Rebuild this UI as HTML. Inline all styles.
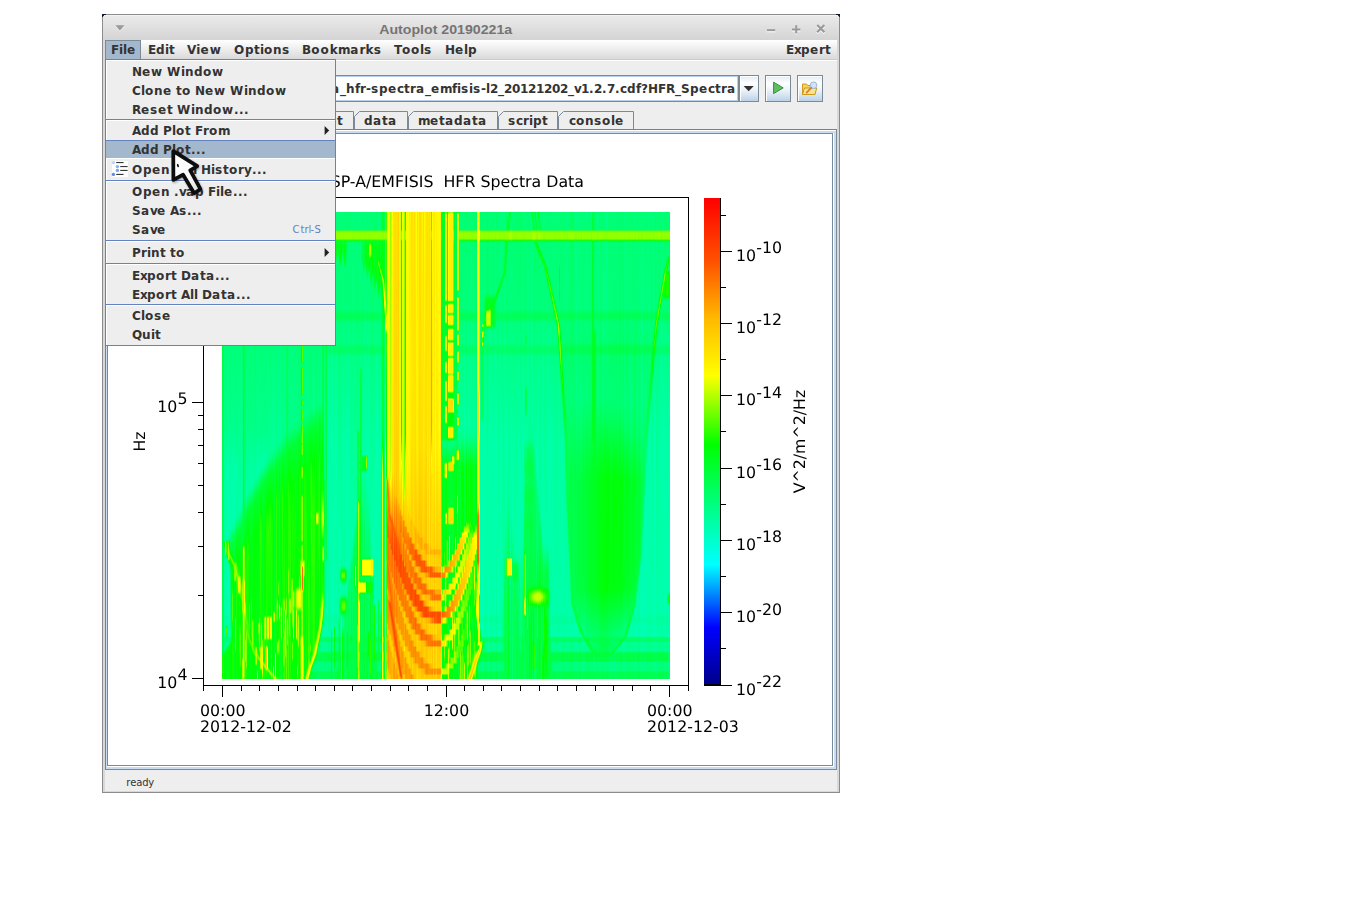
<!DOCTYPE html>
<html lang="en"><head><meta charset="utf-8"><title>Autoplot 20190221a</title>
<style>
html,body{margin:0;padding:0;background:#fff;width:1345px;height:916px;overflow:hidden}
svg{display:block;position:absolute;left:0;top:0}
text{font-family:"DejaVu Sans","Liberation Sans",sans-serif;fill:#333;white-space:pre}
.ui{font-weight:bold;font-size:12px;letter-spacing:0}
.acc{font-size:10px;fill:#6382bf}
.st{font-size:10px;fill:#333}
.ttl{font-family:"Liberation Sans","DejaVu Sans",sans-serif;font-weight:bold;font-size:13.6px;fill:#747474}
.pl{font-size:15.8px;fill:#000;text-rendering:geometricPrecision}
#sp{position:absolute;left:222px;top:212px;width:448px;height:467px;overflow:hidden;background:#00f881}
#sp i{position:absolute;top:-.5px;width:1px;height:468px;display:block}
</style></head><body>
<svg width="1345" height="916" viewBox="0 0 1345 916" shape-rendering="crispEdges">
<defs>
<linearGradient id="gTitle" x1="0" y1="0" x2="0" y2="1"><stop offset="0" stop-color="#ebebeb"/><stop offset="1" stop-color="#d4d4d4"/></linearGradient>
<linearGradient id="gMenu" x1="0" y1="0" x2="0" y2="1"><stop offset="0" stop-color="#ffffff"/><stop offset="1" stop-color="#dadada"/></linearGradient>
<linearGradient id="gBtn" x1="0" y1="0" x2="0" y2="1"><stop offset="0" stop-color="#dde8f3"/><stop offset="0.3" stop-color="#ffffff"/><stop offset="0.55" stop-color="#eef3f9"/><stop offset="1" stop-color="#b8cfe5"/></linearGradient>
<linearGradient id="gCur" x1="0" y1="0" x2="1" y2="1"><stop offset="0" stop-color="#ffffff"/><stop offset="0.6" stop-color="#fafafa"/><stop offset="1" stop-color="#d8d8d8"/></linearGradient>
</defs>
<path d="M102 793V17a3 3 0 0 1 3-3H837a3 3 0 0 1 3 3V793z" fill="#8c8c8c" shape-rendering="geometricPrecision"/>
<path d="M103 792V18a3 3 0 0 1 3-3H836a3 3 0 0 1 3 3V792z" fill="#d8d8d8" shape-rendering="geometricPrecision"/>
<path d="M102 14h4v1h-2v1h-1v1h-1z" fill="#0b1830"/>
<path d="M840 14h-4v1h2v1h1v1h1z" fill="#0b1830"/>
<path d="M103 40V18a3 3 0 0 1 3-3H836a3 3 0 0 1 3 3V40z" fill="url(#gTitle)" shape-rendering="geometricPrecision"/>
<rect x="104" y="15" width="734" height="1" fill="#f3f3f3" />
<path d="M115.3 26.0h9.2l-4.6 5.6z" fill="#ffffff" shape-rendering="geometricPrecision"/>
<path d="M115.3 25.2h9.2l-4.6 5.6z" fill="#9a9a9a" shape-rendering="geometricPrecision"/>
<text x="445.7" y="33.6" class="ttl" text-anchor="middle" textLength="133" lengthAdjust="spacingAndGlyphs">Autoplot 20190221a</text>
<path d="M767 31.3h8.2" stroke="#fff" stroke-width="2" shape-rendering="geometricPrecision" stroke-linecap="butt"/>
<path d="M767 30.2h8.2" stroke="#999" stroke-width="2" shape-rendering="geometricPrecision" stroke-linecap="butt"/>
<path d="M792 30.4h8.4M796.2 26.2v8.4" stroke="#fff" stroke-width="2" shape-rendering="geometricPrecision" stroke-linecap="butt"/>
<path d="M792 29.4h8.4M796.2 25.2v8.4" stroke="#999" stroke-width="2" shape-rendering="geometricPrecision" stroke-linecap="butt"/>
<path d="M817.2 26l7.2 7.2M824.4 26l-7.2 7.2" stroke="#fff" stroke-width="2.2" shape-rendering="geometricPrecision" stroke-linecap="butt"/>
<path d="M817.2 25l7.2 7.2M824.4 25l-7.2 7.2" stroke="#999" stroke-width="2.2" shape-rendering="geometricPrecision" stroke-linecap="butt"/>
<rect x="105" y="40" width="732" height="751" fill="#eeeeee" />
<rect x="105" y="40" width="732" height="19" fill="url(#gMenu)" />
<rect x="105" y="59" width="732" height="1" fill="#cccccc" />
<rect x="105" y="60" width="732" height="1" fill="#ffffff" />
<rect x="105" y="40" width="36" height="19" fill="#a3b8cc" />
<rect x="105" y="40" width="36" height="1" fill="#7a8a99" />
<rect x="105" y="40" width="1" height="19" fill="#7a8a99" />
<rect x="140" y="40" width="1" height="19" fill="#7a8a99" />
<text x="111 119 123 127" y="54" class="ui" >File</text>
<text x="148 156 165 169" y="54" class="ui" >Edit</text>
<text x="187 196.265 200.382 209.647" y="54" class="ui" >View</text>
<text x="234 245 254 260 264 273 282" y="54" class="ui" >Options</text>
<text x="302 311.231 320.462 329.692 337.897 350.205 359.436 365.59 373.795" y="54" class="ui" >Bookmarks</text>
<text x="394 402 411 420 424" y="54" class="ui" >Tools</text>
<text x="445 455 464 468" y="54" class="ui" >Help</text>
<text x="786 794 801 810 819 825" y="54" class="ui" >Expert</text>
<rect x="109" y="75" width="630" height="27" fill="#ffffff" />
<rect x="109" y="75" width="630" height="1" fill="#7a8a99" />
<rect x="109" y="101" width="630" height="1" fill="#7a8a99" />
<rect x="109" y="75" width="1" height="27" fill="#7a8a99" />
<rect x="738" y="75" width="1" height="27" fill="#7a8a99" />
<rect x="110" y="76" width="628" height="1" fill="#b8cfe5" />
<rect x="110" y="100" width="628" height="1" fill="#b8cfe5" />
<rect x="110" y="76" width="1" height="25" fill="#b8cfe5" />
<rect x="737" y="76" width="1" height="25" fill="#b8cfe5" />
<clipPath id="cUrl"><rect x="112" y="77" width="625" height="23"/></clipPath>
<text x="-38 -33 -29 -25 -16 -11 -7 -3 1 10 19 31 40 44 48 57 62 66 73 79 83 92 101 110 118 127 136 140 149 158 164 173 178 187 196 203 211 220 229 233 240 249 254 258 264 273 281 290 294 300 309 317 326 331 340 346 355 360 366 371 379 388 397 404 410 416 425 431 440 452 457 461 469 473 481 486 490 498 504 512 520 528 536 544 552 560 568 574 581 589 594 602 607 615 620 627 636 641 648 658 666 675 681 690 699 708 715 721 727" y="93" class="ui" clip-path="url(#cUrl)">file:///home/jbf/ct/hudson/data.backup/cdf/rbsp/rbsp-a_hfr-spectra_emfisis-l2_20121202_v1.2.7.cdf?HFR_Spectra</text>
<rect x="739" y="75" width="20" height="27" fill="url(#gBtn)" />
<rect x="739" y="75" width="20" height="1" fill="#7a8a99" />
<rect x="739" y="101" width="20" height="1" fill="#7a8a99" />
<rect x="739" y="75" width="1" height="27" fill="#7a8a99" />
<rect x="758" y="75" width="1" height="27" fill="#7a8a99" />
<rect x="740" y="76" width="18" height="1" fill="#ffffff" />
<rect x="740" y="76" width="1" height="25" fill="#ffffff" />
<path d="M743.6 86h10.2l-5.1 5.2z" fill="#333" shape-rendering="geometricPrecision"/>
<rect x="765" y="75" width="26" height="27" fill="url(#gBtn)" />
<rect x="765" y="75" width="26" height="1" fill="#7a8a99" />
<rect x="765" y="101" width="26" height="1" fill="#7a8a99" />
<rect x="765" y="75" width="1" height="27" fill="#7a8a99" />
<rect x="790" y="75" width="1" height="27" fill="#7a8a99" />
<rect x="766" y="76" width="24" height="1" fill="#ffffff" />
<rect x="766" y="76" width="1" height="25" fill="#ffffff" />
<path d="M773.6 82.2l9.6 5.7-9.6 5.7z" fill="#5fbf5f" stroke="#2f8f3f" stroke-width="1" stroke-linejoin="round" shape-rendering="geometricPrecision"/>
<rect x="797" y="75" width="26" height="27" fill="url(#gBtn)" />
<rect x="797" y="75" width="26" height="1" fill="#7a8a99" />
<rect x="797" y="101" width="26" height="1" fill="#7a8a99" />
<rect x="797" y="75" width="1" height="27" fill="#7a8a99" />
<rect x="822" y="75" width="1" height="27" fill="#7a8a99" />
<rect x="798" y="76" width="24" height="1" fill="#ffffff" />
<rect x="798" y="76" width="1" height="25" fill="#ffffff" />
<g shape-rendering="geometricPrecision">
<path d="M802.5 94.5v-10.5h4l1 1.5h7.5v9z" fill="#f5d36a" stroke="#c99a1e" stroke-width="1"/>
<path d="M802.5 94.5l2-6.5h12.3l-2 6.5z" fill="#fbe48f" stroke="#c99a1e" stroke-width="1"/>
<circle cx="813.6" cy="85.2" r="3.3" fill="#cfe4f8" stroke="#9fb7d3" stroke-width="1"/>
<path d="M811.2 87.8l-4.6 4.8" stroke="#e4792a" stroke-width="1.8" stroke-linecap="round"/>
</g>
<path d="M109.5 129.5V116.5L114.5 111.5H168.5V129.5z" fill="#c8ddf2" stroke="#7a8a99" stroke-width="1" shape-rendering="geometricPrecision"/>
<text x="119.5 126.5 135.5 144.5 151.5 160.5" y="124.6" class="ui" >canvas</text>
<path d="M169.5 129.5V116.5L174.5 111.5H213.5V129.5z" fill="#eeeeee" stroke="#7a8a99" stroke-width="1" shape-rendering="geometricPrecision"/>
<text x="180 189 196 205" y="124.6" class="ui" >axes</text>
<path d="M214.5 129.5V116.5L219.5 111.5H260.5V129.5z" fill="#eeeeee" stroke="#7a8a99" stroke-width="1" shape-rendering="geometricPrecision"/>
<text x="225 233 239 247 251" y="124.6" class="ui" >style</text>
<path d="M295.5 129.5V116.5L300.5 111.5H353.5V129.5z" fill="#eeeeee" stroke="#7a8a99" stroke-width="1" shape-rendering="geometricPrecision"/>
<text x="298 302 311 319 328 337" y="124.6" class="ui" >layout</text>
<path d="M354.5 129.5V116.5L359.5 111.5H407.5V129.5z" fill="#eeeeee" stroke="#7a8a99" stroke-width="1" shape-rendering="geometricPrecision"/>
<text x="364 373 382 388" y="124.6" class="ui" >data</text>
<path d="M408.5 129.5V116.5L413.5 111.5H497.5V129.5z" fill="#eeeeee" stroke="#7a8a99" stroke-width="1" shape-rendering="geometricPrecision"/>
<text x="418 430 439 445 454 463 472 478" y="124.6" class="ui" >metadata</text>
<path d="M498.5 129.5V116.5L503.5 111.5H557.5V129.5z" fill="#eeeeee" stroke="#7a8a99" stroke-width="1" shape-rendering="geometricPrecision"/>
<text x="508 516 523 529 533 542" y="124.6" class="ui" >script</text>
<path d="M558.5 129.5V116.5L563.5 111.5H633.5V129.5z" fill="#eeeeee" stroke="#7a8a99" stroke-width="1" shape-rendering="geometricPrecision"/>
<text x="569 576 585 594 602 611 615" y="124.6" class="ui" >console</text>
<rect x="105" y="129" width="732" height="641" fill="#7a8a99" />
<rect x="105" y="129" width="732" height="1" fill="#6382bf" />
<rect x="105" y="129" width="1" height="641" fill="#6382bf" />
<rect x="106" y="130" width="730" height="639" fill="#c8ddf2" />
<rect x="106" y="130" width="730" height="1" fill="#ffffff" />
<rect x="107" y="133" width="727" height="634" fill="#ffffff" />
<rect x="107" y="133" width="726" height="1" fill="#7a8a99" />
<rect x="107" y="133" width="1" height="633" fill="#7a8a99" />
<rect x="108" y="765" width="725" height="1" fill="#7a8a99" />
<rect x="832" y="133" width="1" height="633" fill="#7a8a99" />
<rect x="108" y="134" width="724" height="631" fill="#ffffff" />
<text x="126.2 130.2 136.2 142.2 148.2" y="786" class="st" >ready</text>
<rect x="203" y="197" width="486" height="1" fill="#000000" />
<rect x="203" y="685" width="486" height="1" fill="#000000" />
<rect x="203" y="197" width="1" height="489" fill="#000000" />
<rect x="688" y="197" width="1" height="489" fill="#000000" />
<rect x="203" y="685" width="1" height="6" fill="#000000" />
<rect x="222" y="685" width="1" height="12" fill="#000000" />
<rect x="241" y="685" width="1" height="6" fill="#000000" />
<rect x="259" y="685" width="1" height="6" fill="#000000" />
<rect x="278" y="685" width="1" height="6" fill="#000000" />
<rect x="297" y="685" width="1" height="6" fill="#000000" />
<rect x="315" y="685" width="1" height="6" fill="#000000" />
<rect x="334" y="685" width="1" height="6" fill="#000000" />
<rect x="352" y="685" width="1" height="6" fill="#000000" />
<rect x="371" y="685" width="1" height="6" fill="#000000" />
<rect x="390" y="685" width="1" height="6" fill="#000000" />
<rect x="408" y="685" width="1" height="6" fill="#000000" />
<rect x="427" y="685" width="1" height="6" fill="#000000" />
<rect x="446" y="685" width="1" height="12" fill="#000000" />
<rect x="464" y="685" width="1" height="6" fill="#000000" />
<rect x="483" y="685" width="1" height="6" fill="#000000" />
<rect x="501" y="685" width="1" height="6" fill="#000000" />
<rect x="520" y="685" width="1" height="6" fill="#000000" />
<rect x="539" y="685" width="1" height="6" fill="#000000" />
<rect x="557" y="685" width="1" height="6" fill="#000000" />
<rect x="576" y="685" width="1" height="6" fill="#000000" />
<rect x="595" y="685" width="1" height="6" fill="#000000" />
<rect x="613" y="685" width="1" height="6" fill="#000000" />
<rect x="632" y="685" width="1" height="6" fill="#000000" />
<rect x="650" y="685" width="1" height="6" fill="#000000" />
<rect x="669" y="685" width="1" height="12" fill="#000000" />
<rect x="688" y="685" width="1" height="6" fill="#000000" />
<rect x="192" y="678" width="12" height="1" fill="#000000" />
<rect x="198" y="595" width="6" height="1" fill="#000000" />
<rect x="198" y="546" width="6" height="1" fill="#000000" />
<rect x="198" y="512" width="6" height="1" fill="#000000" />
<rect x="198" y="485" width="6" height="1" fill="#000000" />
<rect x="198" y="463" width="6" height="1" fill="#000000" />
<rect x="198" y="445" width="6" height="1" fill="#000000" />
<rect x="198" y="429" width="6" height="1" fill="#000000" />
<rect x="198" y="415" width="6" height="1" fill="#000000" />
<rect x="192" y="402" width="12" height="1" fill="#000000" />
<rect x="198" y="319" width="6" height="1" fill="#000000" />
<rect x="198" y="270" width="6" height="1" fill="#000000" />
<rect x="198" y="236" width="6" height="1" fill="#000000" />
<rect x="198" y="209" width="6" height="1" fill="#000000" />
<defs><linearGradient id="gCB" gradientUnits="userSpaceOnUse" x1="0" y1="198" x2="0" y2="685"><stop offset="0.0000" stop-color="#ff0000"/><stop offset="0.1333" stop-color="#ff5400"/><stop offset="0.2471" stop-color="#ffb900"/><stop offset="0.3647" stop-color="#ffff00"/><stop offset="0.5059" stop-color="#00ff00"/><stop offset="0.7529" stop-color="#00ffff"/><stop offset="0.8824" stop-color="#0000ff"/><stop offset="1.0000" stop-color="#000089"/></linearGradient></defs>
<rect x="704" y="198" width="16" height="487" fill="url(#gCB)" />
<rect x="720" y="198" width="1" height="488" fill="#000000" />
<rect x="704" y="684" width="17" height="2" fill="#000000" />
<rect x="720" y="685" width="12" height="1" fill="#000000" />
<rect x="720" y="648" width="6" height="1" fill="#000000" />
<rect x="720" y="612" width="12" height="1" fill="#000000" />
<rect x="720" y="576" width="6" height="1" fill="#000000" />
<rect x="720" y="540" width="12" height="1" fill="#000000" />
<rect x="720" y="504" width="6" height="1" fill="#000000" />
<rect x="720" y="468" width="12" height="1" fill="#000000" />
<rect x="720" y="431" width="6" height="1" fill="#000000" />
<rect x="720" y="395" width="12" height="1" fill="#000000" />
<rect x="720" y="359" width="6" height="1" fill="#000000" />
<rect x="720" y="323" width="12" height="1" fill="#000000" />
<rect x="720" y="287" width="6" height="1" fill="#000000" />
<rect x="720" y="251" width="12" height="1" fill="#000000" />
<rect x="720" y="215" width="6" height="1" fill="#000000" />
</svg>
<div id="sp"><i style="left:0px;background:linear-gradient(#0f4 1px,#0f3 4px,#00ff38 18px,#7f0 19px,#9f0 21px,#9f0 27px,#00ff0b 29px,#0f3 30px,#00ff39 31px,#0f5 259px,#0f5 329px,#0f3 330px,#0f5 333px,#0f5 339px,#0f5 424px,#00ff4b 426px,#0f5 439px,#00ff3b 442px,#00ff08 444px,#17ff00 445px,#1f0 467px)"></i><i style="left:1px;background:linear-gradient(#00ff50 1px,#00ff39 4px,#00ff3b 18px,#71ff00 19px,#9f0 21px,#8dff00 27px,#0f1 29px,#0f3 30px,#00ff3c 31px,#00ff50 321px,#00ff4f 329px,#00ff07 330px,#0f4 335px,#00ff4d 340px,#00ff4a 424px,#0f4 439px,#0f0 443px,#1f0 444px,#1dff00 467px)"></i><i style="left:2px;background:linear-gradient(#00ff70 1px,#00ff6e 18px,#6cff00 19px,#8fff00 21px,#8f0 27px,#2dff00 28px,#0f3 29px,#0f6 30px,#00ff6e 31px,#00ff71 97px,#0f5 103px,#0f7 111px,#0f8 219px,#00ffa1 257px,#00ffa5 327px,#00ff8e 329px,#00ff1a 330px,#0f0 333px,#0f6 338px,#0f7 343px,#00ffa5 347px,#00ffa5 401px,#0f9 409px,#00ffa5 424px,#00ff6b 426px,#00ff6b 429px,#00ff8e 431px,#0f8 438px,#0f7 439px,#00ff1c 441px,#0f1 442px,#00ff06 467px)"></i><i style="left:3px;background:linear-gradient(#00ff61 1px,#0f6 18px,#7f0 19px,#9f0 21px,#92ff00 27px,#3f0 28px,#0f2 29px,#0f5 30px,#0f6 31px,#00ff6e 97px,#00ff4c 103px,#00ff4e 106px,#0f7 111px,#0f8 220px,#0f9 258px,#0f9 327px,#00ff6f 328px,#00ff1b 329px,#b4ff00 330px,#bf0 336px,#8eff00 343px,#4bff00 344px,#0f2 345px,#0f7 346px,#0f9 347px,#00ffa2 401px,#00ff92 405px,#00ffa5 424px,#00ff61 426px,#00ff61 429px,#0f8 431px,#0f8 436px,#00ff7f 437px,#0f0 440px,#1f0 441px,#0f0 467px)"></i><i style="left:4px;background:linear-gradient(#00ff6b 1px,#00ff6c 18px,#70ff00 19px,#94ff00 21px,#8dff00 27px,#3f0 28px,#00ff2d 29px,#00ff5f 30px,#00ff6c 31px,#00ff70 97px,#00ff4d 103px,#00ff4f 106px,#0f7 111px,#0f8 219px,#0fa 257px,#0fa 324px,#0fa 327px,#0f9 328px,#0f7 329px,#00ff0c 330px,#2bff00 331px,#4cff00 332px,#5f0 333px,#3f0 336px,#5cff00 339px,#5f0 340px,#3f0 341px,#00ff0c 342px,#0f9 346px,#0fa 347px,#00ffb0 401px,#00ffa0 405px,#00ffaf 412px,#0f9 413px,#0f2 415px,#27ff00 416px,#4aff00 417px,#4aff00 421px,#39ff00 422px,#0f1 423px,#00ff4e 424px,#00ff6c 425px,#00ff6d 429px,#0f9 431px,#00ff93 435px,#00ff18 439px,#00ff18 467px)"></i><i style="left:5px;background:linear-gradient(#0f6 1px,#0f6 18px,#72ff00 19px,#9f0 21px,#8eff00 27px,#3f0 28px,#00ff2b 29px,#00ff5e 30px,#0f6 31px,#0f7 97px,#0f5 103px,#0f5 106px,#0f7 111px,#00ff93 219px,#00ffaf 256px,#00ffb1 323px,#0fa 327px,#00ff8d 329px,#00ff06 334px,#2dff00 336px,#1f0 339px,#4f0 341px,#3eff00 342px,#1f0 343px,#0f5 346px,#00ffa2 350px,#00ffb0 352px,#00ffaf 401px,#00ff9f 405px,#0fa 412px,#00ff6b 417px,#00ff6e 422px,#00ff8f 424px,#0f6 426px,#0f6 429px,#00ff94 431px,#00ff91 433px,#00ff80 434px,#00ff05 437px,#0cff00 438px,#18ff00 467px)"></i><i style="left:6px;background:linear-gradient(#00ff6b 1px,#00ff6d 18px,#70ff00 19px,#93ff00 21px,#8f0 27px,#3f0 28px,#0f3 29px,#00ff61 30px,#00ff6e 31px,#0f7 97px,#0f5 103px,#0f5 106px,#0f7 111px,#0f9 219px,#00ffb2 258px,#00ffb3 322px,#00ff9f 327px,#0f7 328px,#00ff2d 329px,#3eff00 330px,#7f0 331px,#b6ff00 339px,#afff00 345px,#92ff00 347px,#5eff00 348px,#0f1 349px,#00ff5a 350px,#0f8 351px,#00ffb6 357px,#0fb 401px,#0fa 405px,#0fb 424px,#0f7 426px,#0f7 429px,#00ff9e 431px,#0f9 432px,#00ff2c 435px,#00ff18 436px,#00ff16 467px)"></i><i style="left:7px;background:linear-gradient(#0f7 1px,#00ff72 18px,#6cff00 19px,#90ff00 21px,#8f0 27px,#2cff00 28px,#0f3 29px,#0f6 30px,#00ff72 31px,#00ff6f 97px,#00ff4c 103px,#00ff4e 106px,#00ff72 111px,#0fa 318px,#00ff83 327px,#0f1 331px,#0f0 335px,#27ff00 338px,#7f0 342px,#7f0 343px,#5f0 347px,#3f0 348px,#0f0 349px,#00ff38 351px,#00ffa0 359px,#0fa 401px,#00ff9e 409px,#00ffaf 413px,#00ffb0 424px,#00ff6b 426px,#00ff6c 429px,#00ff83 431px,#0f2 434px,#00ff19 435px,#0f2 467px)"></i><i style="left:8px;background:linear-gradient(#00ff60 1px,#00ff61 18px,#7f0 19px,#9f0 21px,#93ff00 27px,#3f0 28px,#0f2 29px,#0f5 30px,#00ff61 31px,#0f6 97px,#0f4 103px,#0f4 106px,#0f6 111px,#00ff80 209px,#00ffa2 256px,#0fa 316px,#0f8 324px,#0f2 340px,#0f0 342px,#3f0 343px,#5eff00 344px,#6f0 345px,#1f0 348px,#0f0 349px,#00ff29 355px,#00ff5f 359px,#00ff83 409px,#00ff9f 424px,#0f6 426px,#0f6 429px,#0f5 430px,#00ff05 433px,#00ff0a 467px)"></i><i style="left:9px;background:linear-gradient(#00ff6b 1px,#00ff6d 18px,#70ff00 19px,#93ff00 21px,#8f0 27px,#2eff00 28px,#0f3 29px,#0f6 30px,#00ff6f 31px,#0f7 97px,#0f5 103px,#00ff5a 106px,#00ff7f 111px,#00ff8f 221px,#00ffa5 258px,#00ffa0 315px,#00ff38 333px,#0f1 343px,#07ff00 344px,#70ff00 346px,#8f0 347px,#7f0 348px,#2f0 350px,#00ff05 352px,#00ff16 359px,#0f1 377px,#0f3 405px,#00ff4e 424px,#0f3 426px,#0f3 429px,#0f0 431px,#0f0 467px)"></i><i style="left:10px;background:linear-gradient(#0f6 1px,#00ff6c 18px,#70ff00 19px,#94ff00 21px,#8f0 27px,#3f0 28px,#00ff2e 29px,#00ff60 30px,#00ff6d 31px,#0f7 97px,#0f5 103px,#0f5 106px,#0f7 111px,#00ff92 219px,#0fa 259px,#0fa 313px,#00ff3b 332px,#0f2 343px,#0f0 346px,#90ff00 349px,#8f0 350px,#0f0 353px,#00ff08 354px,#1f0 379px,#5f0 384px,#5f0 406px,#1f0 411px,#0f0 424px,#07ff00 429px,#16ff00 430px,#1aff00 467px)"></i><i style="left:11px;background:linear-gradient(#0f6 1px,#00ff6b 18px,#71ff00 19px,#94ff00 21px,#8dff00 27px,#3f0 28px,#00ff2c 29px,#00ff5f 30px,#00ff6b 31px,#00ff70 97px,#00ff4e 103px,#00ff50 106px,#0f7 111px,#00ff8e 219px,#0fa 256px,#0fa 309px,#00ff9f 315px,#00ff3f 330px,#00ff27 344px,#00ff06 348px,#2f0 349px,#8f0 351px,#91ff00 352px,#4f0 354px,#1f0 357px,#0f0 369px,#19ff00 467px)"></i><i style="left:12px;background:linear-gradient(#00ff60 1px,#0f6 18px,#7f0 19px,#9f0 21px,#92ff00 27px,#3f0 28px,#0f2 29px,#0f5 30px,#0f6 31px,#00ff6d 97px,#00ff4b 103px,#00ff4d 106px,#00ff72 111px,#00ff91 219px,#00ffaf 256px,#00ffb4 307px,#00ffa4 313px,#0f4 328px,#0f3 346px,#00ff18 349px,#0f0 350px,#4eff00 351px,#8f0 352px,#9f0 353px,#9eff00 355px,#83ff00 367px,#6f0 368px,#28ff00 369px,#0f1 370px,#0f2 371px,#00ff16 467px)"></i><i style="left:13px;background:linear-gradient(#0f6 1px,#0f6 18px,#72ff00 19px,#9f0 21px,#8eff00 27px,#3f0 28px,#00ff2b 29px,#00ff5d 30px,#0f6 31px,#00ff70 97px,#00ff4d 103px,#00ff4f 106px,#0f7 111px,#0f8 219px,#00ffa5 259px,#00ffa3 307px,#0f3 326px,#00ff0c 349px,#1f0 350px,#8f0 352px,#9f0 353px,#af0 358px,#93ff00 367px,#7cff00 368px,#17ff00 370px,#0f0 371px,#0f0 405px,#5f0 408px,#60ff00 409px,#5fff00 437px,#00ff06 441px,#0f1 467px)"></i><i style="left:14px;background:linear-gradient(#00ff6b 1px,#00ff6d 18px,#70ff00 19px,#93ff00 21px,#8f0 27px,#3f0 28px,#0f3 29px,#00ff61 30px,#00ff6e 31px,#0f7 97px,#0f5 103px,#0f5 106px,#0f7 111px,#0f8 220px,#00ffa3 258px,#00ff9f 304px,#00ff28 325px,#0f0 349px,#5eff00 354px,#6f0 357px,#a2ff00 360px,#af0 361px,#5f0 365px,#2f0 372px,#00ff0a 467px)"></i><i style="left:15px;background:linear-gradient(#00ff72 1px,#0f7 18px,#6cff00 19px,#8fff00 21px,#8f0 27px,#2bff00 28px,#0f3 29px,#0f6 30px,#0f7 31px,#0f7 97px,#0f5 103px,#0f5 106px,#00ff7c 111px,#00ff8e 219px,#0fa 256px,#00ffa3 301px,#00ff8f 307px,#00ff2b 323px,#0f0 351px,#39ff00 356px,#4bff00 360px,#a2ff00 364px,#5eff00 369px,#3f0 379px,#08ff00 383px,#0f1 467px)"></i><i style="left:16px;background:linear-gradient(#0f6 1px,#0f6 18px,#7f0 19px,#9f0 21px,#92ff00 27px,#3f0 28px,#0f2 29px,#0f5 30px,#0f6 31px,#0f6 97px,#0f4 103px,#00ff49 106px,#00ff6e 111px,#0fa 298px,#0f9 304px,#0f3 321px,#0f0 356px,#2f0 359px,#3f0 363px,#6f0 364px,#ef0 366px,#ff0 367px,#ef0 379px,#c5ff00 380px,#2f0 382px,#0f0 383px,#00ff05 467px)"></i><i style="left:17px;background:linear-gradient(#0f6 1px,#0f6 18px,#72ff00 19px,#9f0 21px,#8fff00 27px,#3f0 28px,#00ff2a 29px,#00ff5c 30px,#0f6 31px,#00ff6d 97px,#00ff4a 103px,#00ff4c 106px,#00ff71 111px,#0fa 296px,#0f9 302px,#0f3 319px,#0f0 350px,#1f0 358px,#3f0 363px,#5f0 364px,#ef0 366px,#fff800 367px,#fff800 379px,#ef0 380px,#49ff00 382px,#2f0 383px,#1cff00 384px,#1f0 411px,#3f0 416px,#3f0 440px,#1f0 446px,#1f0 467px)"></i><i style="left:18px;background:linear-gradient(#0f6 1px,#0f6 18px,#7f0 19px,#9f0 21px,#90ff00 27px,#3f0 28px,#00ff28 29px,#00ff5b 30px,#0f6 31px,#00ff6e 97px,#00ff4c 103px,#00ff4e 106px,#0f7 111px,#0fa 294px,#0f9 300px,#0f3 317px,#0f0 363px,#17ff00 364px,#7cff00 366px,#92ff00 367px,#c3ff00 374px,#a0ff00 380px,#3bff00 383px,#07ff00 387px,#0f0 412px,#2bff00 415px,#2eff00 419px,#5f0 424px,#5aff00 440px,#4f0 452px,#0f0 456px,#0f0 467px)"></i><i style="left:19px;background:linear-gradient(#0f7 1px,#0f7 18px,#6f0 19px,#8dff00 21px,#8f0 27px,#29ff00 28px,#0f3 29px,#0f6 30px,#0f7 31px,#0f7 97px,#0f5 103px,#0f5 106px,#00ff7e 111px,#00ff92 219px,#0fa 259px,#0fa 293px,#0f3 315px,#0f0 369px,#0bff00 372px,#4f0 375px,#5bff00 377px,#3f0 381px,#5f0 385px,#0aff00 389px,#05ff00 390px,#00ff16 419px,#0f0 446px,#1f0 449px,#0f0 467px)"></i><i style="left:20px;background:linear-gradient(#00ff5c 1px,#0f5 18px,#7f0 19px,#9f0 21px,#91ff00 27px,#38ff00 28px,#0f2 29px,#00ff4d 30px,#0f5 31px,#00ff60 97px,#0f4 103px,#0f6 111px,#0f9 290px,#0f4 311px,#0f3 331px,#0f0 335px,#1bff00 337px,#29ff00 366px,#8f0 372px,#94ff00 376px,#bf0 380px,#af0 384px,#c7ff00 387px,#9fff00 392px,#9f0 398px,#38ff00 403px,#2aff00 410px,#2aff00 444px,#39ff00 445px,#a3ff00 448px,#b2ff00 449px,#b2ff00 464px,#a2ff00 467px)"></i><i style="left:21px;background:linear-gradient(#0f4 1px,#0f2 4px,#0f2 18px,#71ff00 19px,#94ff00 21px,#8dff00 27px,#00ff05 29px,#0f2 31px,#0f2 288px,#0f3 307px,#0f2 331px,#0f1 332px,#18ff00 333px,#a0ff00 335px,#d4ff00 336px,#e8ff00 337px,#e9ff00 366px,#fff700 368px,#fc0 372px,#fc0 398px,#f7ff00 403px,#ef0 404px,#ef0 464px,#df0 465px,#8f0 467px)"></i><i style="left:22px;background:linear-gradient(#00ff5f 1px,#00ff4e 4px,#00ff4d 18px,#6dff00 19px,#91ff00 21px,#8f0 27px,#38ff00 28px,#0f2 29px,#0f4 30px,#00ff4d 31px,#00ff4b 97px,#00ff38 103px,#00ff4d 111px,#0f6 286px,#0f1 332px,#07ff00 333px,#5f0 335px,#82ff00 337px,#8f0 366px,#92ff00 367px,#f6ff00 370px,#fff900 371px,#fe0 395px,#ff0 400px,#bf0 403px,#9f0 406px,#8f0 416px,#7cff00 464px,#70ff00 465px,#2bff00 467px)"></i><i style="left:23px;background:linear-gradient(#00ff5e 1px,#00ff5e 18px,#7f0 19px,#9f0 21px,#94ff00 27px,#3f0 28px,#0f2 29px,#0f5 30px,#00ff5f 31px,#0f6 97px,#0f4 103px,#0f4 106px,#0f6 111px,#00ff7d 219px,#0f9 283px,#0f8 289px,#00ff29 307px,#0f0 335px,#2cff00 371px,#27ff00 384px,#39ff00 389px,#a1ff00 393px,#af0 398px,#9f0 402px,#3fff00 410px,#4f0 414px,#27ff00 419px,#2f0 426px,#3f0 427px,#af0 430px,#afff00 431px,#af0 447px,#9f0 448px,#2bff00 451px,#2f0 467px)"></i><i style="left:24px;background:linear-gradient(#0f6 1px,#0f6 18px,#72ff00 19px,#9f0 21px,#8eff00 27px,#3f0 28px,#00ff2c 29px,#00ff5e 30px,#00ff6b 31px,#0f7 97px,#0f5 103px,#0f5 106px,#0f7 111px,#00ff90 219px,#0fa 259px,#0fa 283px,#0f3 303px,#0f0 336px,#1f0 349px,#1cff00 395px,#3f0 401px,#3f0 405px,#5dff00 409px,#3aff00 414px,#4fff00 418px,#82ff00 422px,#80ff00 454px,#16ff00 458px,#1f0 467px)"></i><i style="left:25px;background:linear-gradient(#0f7 1px,#0f7 18px,#6f0 19px,#8dff00 21px,#8f0 27px,#29ff00 28px,#00ff38 29px,#0f6 30px,#0f7 31px,#0f7 97px,#0f5 103px,#0f5 106px,#0f7 111px,#0f8 219px,#00ffa0 259px,#00ff9e 281px,#00ff29 301px,#0f0 321px,#2bff00 338px,#1aff00 399px,#29ff00 408px,#5f0 412px,#3bff00 417px,#5f0 420px,#29ff00 425px,#08ff00 432px,#00ff0a 467px)"></i><i style="left:26px;background:linear-gradient(#00ff70 1px,#00ff71 18px,#6dff00 19px,#91ff00 21px,#8f0 27px,#2cff00 28px,#0f3 29px,#0f6 30px,#00ff72 31px,#0f7 97px,#0f5 103px,#0f5 106px,#0f7 111px,#0f8 220px,#00ffa2 258px,#00ff9f 279px,#00ff2b 299px,#0f0 322px,#2f0 343px,#0cff00 402px,#19ff00 411px,#3fff00 415px,#2dff00 419px,#6f0 424px,#2f0 428px,#0f0 432px,#0f1 467px)"></i><i style="left:27px;background:linear-gradient(#0f7 1px,#0f7 18px,#6bff00 19px,#8fff00 21px,#8f0 27px,#2bff00 28px,#0f3 29px,#0f6 30px,#0f7 31px,#00ff71 97px,#00ff4e 102px,#00ff4e 105px,#0f7 111px,#00ff81 202px,#0fa 275px,#0f9 281px,#0f3 298px,#0f1 333px,#0f0 390px,#5dff00 394px,#60ff00 413px,#2cff00 417px,#2f0 422px,#6f0 427px,#2f0 431px,#0f0 437px,#0f0 467px)"></i><i style="left:28px;background:linear-gradient(#0f6 1px,#0f6 18px,#7f0 19px,#9f0 21px,#91ff00 27px,#3f0 28px,#0f2 29px,#0f5 30px,#0f6 31px,#0f6 97px,#0f4 103px,#0f4 106px,#00ff6b 111px,#00ff7f 208px,#00ffa5 273px,#0f9 279px,#0f3 296px,#00ff19 328px,#0f1 416px,#0f0 425px,#0f0 426px,#5f0 429px,#6f0 430px,#0f0 434px,#00ff17 441px,#00ff18 467px)"></i><i style="left:29px;background:linear-gradient(#00ff6c 1px,#00ff6d 18px,#6fff00 19px,#93ff00 21px,#8f0 27px,#2eff00 28px,#0f3 29px,#0f6 30px,#00ff6f 31px,#0f7 97px,#0f5 103px,#0f5 106px,#00ff7c 111px,#00ff94 219px,#00ffb0 259px,#0fa 275px,#00ff3b 295px,#00ff16 334px,#00ff08 385px,#3bff00 389px,#3cff00 423px,#09ff00 427px,#17ff00 429px,#6f0 432px,#6cff00 433px,#2f0 436px,#0f0 438px,#00ff09 467px)"></i><i style="left:30px;background:linear-gradient(#00ff72 1px,#00ff72 18px,#6dff00 19px,#90ff00 21px,#8f0 27px,#2cff00 28px,#0f3 29px,#0f6 30px,#00ff71 31px,#00ff71 97px,#00ff4e 103px,#00ff50 106px,#0f7 111px,#0f8 207px,#0fa 270px,#0f9 275px,#0f3 293px,#00ff16 335px,#00ff07 406px,#05ff00 407px,#7f0 410px,#82ff00 411px,#91ff00 431px,#72ff00 436px,#2f0 439px,#0f0 442px,#0f0 467px)"></i><i style="left:31px;background:linear-gradient(#0f6 1px,#0f6 18px,#7f0 19px,#9f0 21px,#8eff00 27px,#3f0 28px,#00ff2b 29px,#00ff5d 30px,#0f6 31px,#0f7 97px,#0f5 103px,#0f5 106px,#0f7 111px,#00ff92 220px,#0fa 258px,#00ffa5 271px,#0f3 290px,#00ff0c 321px,#0f0 407px,#3bff00 411px,#3bff00 427px,#4aff00 431px,#3f0 435px,#7cff00 438px,#7f0 439px,#0bff00 442px,#00ff05 443px,#00ff0c 467px)"></i><i style="left:32px;background:linear-gradient(#0f7 1px,#0f7 18px,#6cff00 19px,#8fff00 21px,#8f0 27px,#2cff00 28px,#0f3 29px,#0f6 30px,#00ff72 31px,#00ff6f 97px,#00ff4d 102px,#00ff4c 105px,#00ff72 111px,#00ff7e 206px,#00ffa1 266px,#00ff8f 272px,#00ff2e 288px,#0f0 322px,#0f0 431px,#2eff00 437px,#7fff00 441px,#08ff00 444px,#0f0 445px,#00ff08 467px)"></i><i style="left:33px;background:linear-gradient(#00ff60 1px,#00ff61 18px,#7f0 19px,#9f0 21px,#93ff00 27px,#3f0 28px,#0f2 29px,#0f5 30px,#00ff61 31px,#0f6 97px,#0f4 103px,#0f4 106px,#00ff6c 111px,#0f8 219px,#00ffa5 264px,#00ff94 270px,#0f3 286px,#00ff0a 319px,#00ff0a 433px,#06ff00 434px,#6cff00 436px,#8f0 437px,#a5ff00 442px,#a4ff00 443px,#7f0 446px,#6eff00 451px,#5aff00 452px,#0f0 454px,#0f1 467px)"></i><i style="left:34px;background:linear-gradient(#0f7 1px,#0f7 18px,#6bff00 19px,#8fff00 21px,#8f0 27px,#2bff00 28px,#0f3 29px,#0f6 30px,#0f7 31px,#0f7 97px,#0f5 103px,#0f5 106px,#0f7 111px,#0f8 219px,#0fa 262px,#0f9 268px,#0f3 284px,#00ff06 320px,#00ff18 433px,#00ff05 434px,#92ff00 436px,#bf0 437px,#cf0 443px,#b5ff00 451px,#8eff00 452px,#00ff09 454px,#00ff1d 455px,#00ff1d 467px)"></i><i style="left:35px;background:linear-gradient(#0f7 1px,#0f7 18px,#6cff00 19px,#90ff00 21px,#8f0 27px,#2cff00 28px,#0f3 29px,#0f6 30px,#00ff72 31px,#00ff72 97px,#00ff4f 103px,#0f5 106px,#0f7 111px,#0f8 208px,#0fa 260px,#0f9 266px,#0f3 283px,#00ff09 316px,#0f0 434px,#2f0 440px,#2cff00 441px,#7f0 443px,#7f0 444px,#3f0 447px,#17ff00 449px,#0f0 457px,#19ff00 458px,#a1ff00 461px,#af0 467px)"></i><i style="left:36px;background:linear-gradient(#00ff6f 1px,#00ff70 18px,#6eff00 19px,#91ff00 21px,#8f0 27px,#2dff00 28px,#0f3 29px,#0f6 30px,#00ff71 31px,#0f7 97px,#0f5 103px,#0f5 106px,#0f7 111px,#00ff93 219px,#00ffaf 258px,#00ff9f 264px,#00ff3b 281px,#0f1 312px,#0f1 409px,#0f0 410px,#6f0 412px,#7f0 414px,#7f0 419px,#2bff00 423px,#28ff00 428px,#0f0 430px,#0f1 433px,#00ff07 442px,#1dff00 443px,#8f0 445px,#8f0 446px,#1cff00 448px,#00ff05 449px,#0f1 452px,#00ff0c 467px)"></i><i style="left:37px;background:linear-gradient(#00ff5c 1px,#00ff5f 18px,#7f0 19px,#9f0 21px,#94ff00 27px,#3f0 28px,#0f2 29px,#0f5 30px,#00ff61 31px,#00ff6e 97px,#00ff4c 103px,#00ff4f 106px,#0f7 111px,#00ff93 220px,#00ffaf 257px,#00ff3c 280px,#00ff19 321px,#0f2 403px,#00ff18 404px,#0f0 405px,#4f0 406px,#71ff00 407px,#8f0 410px,#bf0 412px,#c2ff00 414px,#c2ff00 419px,#90ff00 423px,#7f0 438px,#2f0 440px,#0f1 441px,#0f2 443px,#00ff17 444px,#19ff00 445px,#6f0 446px,#94ff00 447px,#7dff00 448px,#3f0 449px,#0f1 450px,#00ff2b 453px,#00ff2e 467px)"></i><i style="left:38px;background:linear-gradient(#00ff5b 1px,#00ff5d 18px,#7f0 19px,#9f0 21px,#9f0 27px,#38ff00 28px,#0f2 29px,#0f5 30px,#00ff5f 31px,#00ff6b 97px,#00ff49 103px,#00ff4b 106px,#00ff71 111px,#0f8 220px,#00ff9f 255px,#0f8 261px,#00ff2c 276px,#0f0 299px,#3f0 314px,#2f0 315px,#3f0 323px,#2f0 357px,#3f0 358px,#18ff00 403px,#1cff00 409px,#38ff00 415px,#2f0 433px,#39ff00 434px,#af0 436px,#c6ff00 437px,#c5ff00 444px,#ff0 449px,#c4ff00 452px,#b5ff00 455px,#9f0 456px,#19ff00 458px,#0f0 459px,#00ff05 467px)"></i><i style="left:39px;background:linear-gradient(#00ff70 1px,#00ff70 18px,#6eff00 19px,#91ff00 21px,#8f0 27px,#2dff00 28px,#0f3 29px,#0f6 30px,#00ff70 31px,#0f7 97px,#0f5 103px,#0f5 106px,#0f7 111px,#0f8 219px,#00ffa3 253px,#00ff91 259px,#0f3 275px,#0f0 303px,#2f0 321px,#09ff00 409px,#2f0 411px,#a5ff00 414px,#af0 433px,#c0ff00 434px,#ef0 435px,#fff300 436px,#fe0 449px,#ff0 455px,#df0 456px,#29ff00 458px,#0f0 459px,#00ff05 467px)"></i><i style="left:40px;background:linear-gradient(#0f6 1px,#0f6 18px,#7f0 19px,#9f0 21px,#90ff00 27px,#3f0 28px,#00ff27 29px,#0f5 30px,#0f6 31px,#00ff6e 97px,#00ff4c 103px,#00ff4e 106px,#0f7 111px,#0f8 219px,#0fa 251px,#0f9 257px,#00ff4a 269px,#0f3 275px,#00ff18 313px,#0f1 424px,#0f0 426px,#7f0 429px,#83ff00 434px,#9f0 435px,#df0 436px,#ef0 437px,#f3ff00 450px,#e8ff00 460px,#df0 461px,#a2ff00 462px,#82ff00 463px,#6fff00 465px,#1cff00 467px)"></i><i style="left:41px;background:linear-gradient(#0f6 1px,#0f6 18px,#7f0 19px,#9f0 21px,#91ff00 27px,#3f0 28px,#0f2 29px,#0f5 30px,#0f6 31px,#00ff6d 97px,#00ff4b 103px,#00ff4d 106px,#00ff72 111px,#0f8 208px,#0fa 250px,#0f9 256px,#00ff3e 271px,#0f2 298px,#00ff29 424px,#06ff00 428px,#1bff00 429px,#2f0 436px,#00ff06 438px,#00ff19 440px,#00ff1b 445px,#00ff06 449px,#7f0 451px,#91ff00 452px,#6dff00 453px,#00ff06 455px,#00ff19 457px,#00ff2d 467px)"></i><i style="left:42px;background:linear-gradient(#0f6 1px,#0f6 18px,#71ff00 19px,#9f0 21px,#8eff00 27px,#3f0 28px,#00ff2c 29px,#00ff5e 30px,#00ff6b 31px,#00ff72 97px,#00ff4f 103px,#0f5 106px,#0f7 111px,#0f8 219px,#00ffa4 248px,#0f9 254px,#0f3 271px,#0f1 311px,#0f0 403px,#1f0 404px,#8f0 406px,#a1ff00 407px,#af0 425px,#93ff00 426px,#3dff00 428px,#2aff00 429px,#2bff00 436px,#08ff00 440px,#08ff00 446px,#18ff00 450px,#3f0 451px,#af0 453px,#b0ff00 454px,#3eff00 456px,#1cff00 457px,#1f0 459px,#1f0 467px)"></i><i style="left:43px;background:linear-gradient(#00ff6d 1px,#00ff6c 18px,#70ff00 19px,#94ff00 21px,#8dff00 27px,#3f0 28px,#00ff2d 29px,#00ff5f 30px,#00ff6c 31px,#00ff6c 97px,#00ff4a 103px,#00ff4b 106px,#00ff70 111px,#00ff80 207px,#0f9 247px,#0f8 253px,#0f3 268px,#00ff0a 299px,#06ff00 403px,#3f0 404px,#f7ff00 406px,#fff300 407px,#fff300 425px,#f8ff00 426px,#3f0 428px,#09ff00 429px,#0aff00 433px,#5f0 437px,#5fff00 451px,#8f0 453px,#df0 455px,#c6ff00 456px,#3f0 458px,#1f0 459px,#1f0 467px)"></i><i style="left:44px;background:linear-gradient(#0f7 1px,#0f7 18px,#6f0 19px,#8dff00 21px,#8f0 27px,#2aff00 28px,#0f3 29px,#0f6 30px,#0f7 31px,#0f7 97px,#0f5 103px,#0f5 106px,#0f7 111px,#0f8 205px,#00ffa0 246px,#00ff8e 252px,#0f3 267px,#0f0 296px,#2f0 314px,#19ff00 403px,#60ff00 407px,#5fff00 425px,#2f0 428px,#16ff00 433px,#5f0 434px,#df0 435px,#fd0 436px,#fc0 437px,#ffc400 455px,#fff500 457px,#3dff00 459px,#2f0 460px,#1f0 467px)"></i><i style="left:45px;background:linear-gradient(#0f7 1px,#0f7 18px,#6f0 19px,#8f0 21px,#8f0 27px,#28ff00 28px,#00ff3a 29px,#00ff6c 30px,#0f7 31px,#0f7 97px,#0f5 103px,#0f5 106px,#00ff7c 111px,#0f8 219px,#0f9 244px,#00ff8d 250px,#0f3 266px,#0f0 296px,#2f0 321px,#1f0 403px,#3f0 404px,#df0 406px,#ff0 407px,#ff0 425px,#df0 426px,#3f0 428px,#07ff00 429px,#07ff00 433px,#2dff00 434px,#d6ff00 436px,#ff0 437px,#fffa00 456px,#d2ff00 457px,#8f0 458px,#4eff00 459px,#1f0 461px,#0f0 463px,#0f0 467px)"></i><i style="left:46px;background:linear-gradient(#0f6 1px,#0f6 18px,#72ff00 19px,#9f0 21px,#8eff00 27px,#3f0 28px,#00ff2c 29px,#00ff5e 30px,#00ff6b 31px,#00ff72 97px,#00ff50 103px,#0f5 106px,#0f7 111px,#0f9 243px,#0f8 249px,#00ff2e 264px,#0f0 293px,#2bff00 321px,#0f0 403px,#28ff00 404px,#ff0 406px,#fe0 407px,#fe0 425px,#ff0 426px,#2f0 428px,#0f1 429px,#00ff16 453px,#00ff08 455px,#9f0 458px,#7eff00 459px,#05ff00 461px,#00ff16 463px,#00ff1b 467px)"></i><i style="left:47px;background:linear-gradient(#0f5 1px,#0f5 18px,#7cff00 19px,#9fff00 21px,#9f0 27px,#3aff00 28px,#00ff1c 29px,#00ff4e 30px,#00ff5b 31px,#0f6 97px,#0f4 103px,#0f4 106px,#00ff6c 111px,#0f9 242px,#0f8 248px,#0f3 263px,#0f0 291px,#2f0 311px,#1f0 403px,#5f0 407px,#50ff00 425px,#09ff00 429px,#0f0 454px,#1f0 456px,#2aff00 457px,#b4ff00 459px,#c5ff00 460px,#4f0 462px,#18ff00 463px,#0f0 467px)"></i><i style="left:48px;background:linear-gradient(#0f6 1px,#0f6 18px,#7f0 19px,#9f0 21px,#92ff00 27px,#3f0 28px,#0f2 29px,#0f5 30px,#0f6 31px,#0f6 97px,#0f4 103px,#0f4 106px,#00ff6b 111px,#00ff90 240px,#00ff7d 247px,#00ff2a 261px,#0f0 286px,#28ff00 309px,#0f0 403px,#2f0 404px,#e8ff00 406px,#fff800 407px,#fff800 425px,#e6ff00 426px,#1dff00 428px,#00ff0b 429px,#0f1 455px,#00ff05 458px,#2bff00 459px,#bf0 461px,#af0 462px,#09ff00 464px,#00ff17 467px)"></i><i style="left:49px;background:linear-gradient(#00ff70 1px,#00ff70 18px,#6eff00 19px,#91ff00 21px,#8f0 27px,#2dff00 28px,#0f3 29px,#0f6 30px,#00ff70 31px,#0f7 97px,#0f5 103px,#0f5 106px,#0f7 111px,#0f9 239px,#0f8 245px,#0f3 260px,#0f0 293px,#1f0 307px,#29ff00 403px,#49ff00 404px,#d2ff00 406px,#ef0 407px,#f4ff00 425px,#d4ff00 426px,#50ff00 428px,#3f0 429px,#3aff00 457px,#4cff00 459px,#af0 463px,#4bff00 466px,#3fff00 467px)"></i><i style="left:50px;background:linear-gradient(#00ff5e 1px,#00ff61 18px,#7f0 19px,#9f0 21px,#93ff00 27px,#3f0 28px,#0f2 29px,#0f5 30px,#0f6 31px,#00ff6f 97px,#00ff4e 103px,#00ff50 106px,#0f7 111px,#0f9 237px,#0f8 243px,#0f3 259px,#0f0 298px,#1f0 321px,#00ff05 459px,#0cff00 460px,#60ff00 462px,#71ff00 463px,#5f0 465px,#09ff00 467px)"></i><i style="left:51px;background:linear-gradient(#00ff6b 1px,#00ff6b 18px,#71ff00 19px,#94ff00 21px,#8dff00 27px,#3f0 28px,#00ff2d 29px,#00ff5f 30px,#00ff6c 31px,#00ff71 97px,#00ff4e 103px,#00ff50 106px,#0f7 111px,#0f9 236px,#0f8 242px,#0f3 258px,#0f1 290px,#0f0 398px,#1f0 399px,#6f0 401px,#7f0 402px,#7f0 408px,#6f0 409px,#1f0 411px,#0f0 412px,#09ff00 452px,#1f0 453px,#bf0 456px,#df0 457px,#df0 467px)"></i><i style="left:52px;background:linear-gradient(#00ff70 1px,#00ff6f 18px,#6eff00 19px,#92ff00 21px,#8f0 27px,#2eff00 28px,#0f3 29px,#0f6 30px,#00ff6f 31px,#00ff6f 97px,#00ff4c 103px,#00ff4e 106px,#0f7 111px,#0f9 235px,#00ff38 258px,#0f2 292px,#00ff2c 398px,#0f1 399px,#a1ff00 401px,#d2ff00 402px,#d2ff00 408px,#a1ff00 409px,#0f1 411px,#00ff2c 412px,#00ff2b 439px,#0f1 462px,#0f0 463px,#bf0 465px,#df0 466px,#93ff00 467px)"></i><i style="left:53px;background:linear-gradient(#0f6 1px,#0f6 18px,#7f0 19px,#9f0 21px,#8fff00 27px,#3f0 28px,#00ff2a 29px,#00ff5d 30px,#0f6 31px,#0f7 97px,#0f5 103px,#0f5 106px,#00ff7c 111px,#0f9 233px,#00ff90 239px,#00ff3c 255px,#0f1 296px,#0f1 398px,#00ff05 400px,#1cff00 402px,#1bff00 408px,#00ff06 410px,#00ff17 412px,#00ff1b 439px,#0f1 440px,#3f0 441px,#c3ff00 443px,#df0 444px,#e3ff00 467px)"></i><i style="left:54px;background:linear-gradient(#0f6 1px,#0f6 18px,#7f0 19px,#9f0 21px,#91ff00 27px,#3f0 28px,#00ff27 29px,#0f5 30px,#0f6 31px,#00ff6b 97px,#00ff49 103px,#00ff4b 106px,#00ff70 111px,#00ff8e 232px,#0f7 239px,#00ff2c 253px,#0f0 276px,#2dff00 291px,#2f0 390px,#4f0 395px,#4f0 406px,#1f0 411px,#09ff00 428px,#19ff00 434px,#0f0 463px,#1f0 465px,#5f0 467px)"></i><i style="left:55px;background:linear-gradient(#0f6 1px,#0f6 18px,#7f0 19px,#9f0 21px,#8fff00 27px,#3f0 28px,#00ff29 29px,#00ff5b 30px,#0f6 31px,#00ff6f 97px,#00ff4d 103px,#00ff4f 106px,#0f7 111px,#0f9 230px,#0f8 237px,#00ff3a 252px,#00ff1c 281px,#0f1 368px,#0f0 373px,#00ff09 386px,#0aff00 387px,#8f0 390px,#9eff00 394px,#92ff00 396px,#5dff00 399px,#5bff00 406px,#50ff00 407px,#0f0 410px,#0f0 428px,#0f0 429px,#91ff00 432px,#b1ff00 433px,#b3ff00 434px,#b3ff00 439px,#9f0 440px,#1f0 443px,#0f0 444px,#06ff00 464px,#2f0 466px,#4f0 467px)"></i><i style="left:56px;background:linear-gradient(#0f7 1px,#0f7 18px,#6bff00 19px,#8eff00 21px,#8f0 27px,#2aff00 28px,#0f3 29px,#0f6 30px,#0f7 31px,#0f7 97px,#0f5 103px,#0f5 106px,#00ff7d 111px,#0f9 229px,#0f8 235px,#00ff3b 252px,#00ff17 291px,#00ff06 369px,#4eff00 372px,#5f0 373px,#5aff00 380px,#4cff00 382px,#0f0 385px,#1f0 395px,#0f0 398px,#0f0 425px,#0f0 426px,#90ff00 430px,#93ff00 434px,#91ff00 439px,#09ff00 443px,#0f0 444px,#0aff00 465px,#1bff00 467px)"></i><i style="left:57px;background:linear-gradient(#00ff61 1px,#0f6 18px,#7f0 19px,#9f0 21px,#93ff00 27px,#3f0 28px,#0f2 29px,#0f5 30px,#0f6 31px,#0f6 97px,#0f4 103px,#0f4 106px,#00ff6d 111px,#0f8 228px,#0f7 234px,#00ff2a 249px,#0f0 275px,#2f0 296px,#1aff00 390px,#2f0 391px,#49ff00 392px,#cf0 394px,#ff0 395px,#ff0 396px,#ff0 405px,#cf0 406px,#4f0 408px,#1dff00 409px,#17ff00 410px,#1f0 425px,#4aff00 430px,#4aff00 438px,#1f0 444px,#1f0 467px)"></i><i style="left:58px;background:linear-gradient(#0f6 1px,#0f6 18px,#7f0 19px,#9f0 21px,#8fff00 27px,#3f0 28px,#00ff2a 29px,#00ff5c 30px,#0f6 31px,#0f7 97px,#0f5 103px,#0f5 106px,#0f7 111px,#0f9 226px,#0f8 232px,#00ff3b 248px,#00ff0b 292px,#00ff19 390px,#0f0 394px,#2f0 395px,#4f0 397px,#2cff00 425px,#0f1 428px,#0f2 430px,#00ff2e 467px)"></i><i style="left:59px;background:linear-gradient(#0f6 1px,#0f6 18px,#7f0 19px,#9f0 21px,#91ff00 27px,#3f0 28px,#0f2 29px,#0f5 30px,#0f6 31px,#00ff6e 97px,#00ff4c 103px,#00ff4e 106px,#0f7 111px,#00ff92 225px,#0f8 231px,#00ff38 247px,#00ff17 278px,#0f0 392px,#0aff00 393px,#8eff00 396px,#a3ff00 397px,#af0 425px,#9f0 426px,#2f0 429px,#0cff00 430px,#1aff00 467px)"></i><i style="left:60px;background:linear-gradient(#00ff6b 1px,#00ff6b 18px,#71ff00 19px,#94ff00 21px,#8dff00 27px,#3f0 28px,#00ff2c 29px,#00ff5f 30px,#00ff6b 31px,#00ff6d 97px,#00ff4a 103px,#00ff4c 106px,#00ff71 111px,#0f8 223px,#0f7 230px,#00ff2c 245px,#0f0 269px,#27ff00 284px,#29ff00 321px,#0aff00 384px,#2f0 388px,#28ff00 399px,#1f0 403px,#0f0 420px,#1f0 429px,#0f0 452px,#0f1 457px,#00ff18 467px)"></i><i style="left:61px;background:linear-gradient(#0f7 1px,#0f7 18px,#6f0 19px,#8eff00 21px,#8f0 27px,#2aff00 28px,#0f3 29px,#0f6 30px,#0f7 31px,#0f7 97px,#0f5 103px,#0f5 106px,#0f7 111px,#0f8 222px,#0f7 229px,#0f3 244px,#0f0 278px,#1bff00 384px,#6f0 388px,#7eff00 400px,#7f0 418px,#2f0 422px,#2f0 423px,#3f0 425px,#82ff00 428px,#8f0 429px,#8f0 452px,#2bff00 456px,#2f0 457px,#2f0 467px)"></i><i style="left:62px;background:linear-gradient(#0f6 1px,#00ff6b 18px,#71ff00 19px,#94ff00 21px,#8dff00 27px,#3f0 28px,#00ff2d 29px,#00ff5f 30px,#00ff6c 31px,#0f7 97px,#0f5 103px,#0f5 106px,#00ff7c 111px,#00ff94 220px,#0f8 227px,#00ff3a 243px,#0f0 286px,#2f0 386px,#7f0 389px,#8f0 391px,#8f0 396px,#3dff00 399px,#2dff00 401px,#3f0 415px,#6f0 418px,#7f0 420px,#7f0 451px,#3f0 455px,#3f0 467px)"></i><i style="left:63px;background:linear-gradient(#0f5 1px,#00ff5b 18px,#7f0 19px,#9eff00 21px,#9f0 27px,#39ff00 28px,#0f2 29px,#00ff50 30px,#00ff5d 31px,#00ff6d 97px,#00ff4c 103px,#00ff4e 106px,#0f7 111px,#00ff90 219px,#00ff3c 241px,#0f2 273px,#0f0 385px,#1aff00 396px,#c3ff00 400px,#cf0 407px,#c7ff00 415px,#a0ff00 419px,#a2ff00 442px,#91ff00 443px,#2f0 446px,#1f0 447px,#1f0 467px)"></i><i style="left:64px;background:linear-gradient(#0f6 1px,#00ff5c 18px,#6eff00 19px,#91ff00 21px,#8f0 27px,#3f0 28px,#00ff27 29px,#0f5 30px,#00ff5c 31px,#00ff5f 97px,#0f5 103px,#00ff61 111px,#0f6 217px,#0f3 240px,#0f0 285px,#1f0 383px,#2f0 385px,#7f0 388px,#80ff00 389px,#82ff00 400px,#7cff00 401px,#2dff00 404px,#28ff00 405px,#4f0 408px,#3fff00 434px,#72ff00 439px,#60ff00 447px,#5f0 467px)"></i><i style="left:65px;background:linear-gradient(#0f6 1px,#00ff60 18px,#6bff00 19px,#8fff00 21px,#8f0 27px,#3f0 28px,#00ff2b 29px,#0f5 30px,#00ff60 31px,#0f6 97px,#0f5 103px,#0f6 111px,#0f6 216px,#0f3 239px,#00ff05 283px,#00ff07 405px,#7fff00 408px,#92ff00 409px,#90ff00 431px,#7f0 432px,#1f0 434px,#00ff09 435px,#1aff00 439px,#0f0 467px)"></i><i style="left:66px;background:linear-gradient(#00ff6d 1px,#00ff6c 18px,#70ff00 19px,#93ff00 21px,#8f0 27px,#3f0 28px,#00ff2d 29px,#00ff5f 30px,#00ff6c 31px,#00ff6b 97px,#0f4 103px,#00ff4a 106px,#00ff6e 111px,#00ff82 216px,#00ff71 223px,#00ff2b 238px,#0f0 265px,#1cff00 282px,#2f0 356px,#6f0 359px,#7dff00 361px,#80ff00 379px,#29ff00 384px,#4f0 467px)"></i><i style="left:67px;background:linear-gradient(#00ff70 1px,#00ff70 18px,#6eff00 19px,#91ff00 21px,#8f0 27px,#2dff00 28px,#0f3 29px,#0f6 30px,#00ff70 31px,#0f7 97px,#0f5 103px,#0f5 106px,#0f7 111px,#0f8 215px,#0f7 222px,#0f3 237px,#0f0 270px,#1f0 283px,#2f0 321px,#1bff00 355px,#3f0 361px,#3f0 379px,#1f0 385px,#2aff00 386px,#9f0 388px,#b5ff00 389px,#b4ff00 399px,#8f0 402px,#a5ff00 404px,#a4ff00 416px,#8f0 418px,#7fff00 422px,#1cff00 425px,#0bff00 426px,#0f0 467px)"></i><i style="left:68px;background:linear-gradient(#00ff72 1px,#0f7 18px,#6cff00 19px,#90ff00 21px,#8f0 27px,#2bff00 28px,#0f3 29px,#0f6 30px,#0f7 31px,#0f7 97px,#0f5 103px,#0f5 106px,#00ff7d 111px,#0f8 214px,#0f7 221px,#0f3 236px,#0f0 272px,#2f0 321px,#2f0 385px,#3f0 386px,#a3ff00 388px,#bf0 389px,#bf0 399px,#a4ff00 400px,#4f0 402px,#2eff00 403px,#1bff00 467px)"></i><i style="left:69px;background:linear-gradient(#0f7 1px,#0f7 18px,#6bff00 19px,#8eff00 21px,#8f0 27px,#2aff00 28px,#0f3 29px,#0f6 30px,#0f7 31px,#0f7 97px,#0f5 103px,#0f5 106px,#00ff7e 111px,#00ff8e 213px,#0f3 236px,#0f1 272px,#00ff05 365px,#0f0 366px,#3f0 369px,#3eff00 373px,#7f0 377px,#7eff00 393px,#6eff00 399px,#1f0 403px,#0f0 410px,#0f1 467px)"></i><i style="left:70px;background:linear-gradient(#0f6 1px,#0f6 18px,#7f0 19px,#9f0 21px,#91ff00 27px,#3f0 28px,#00ff27 29px,#0f5 30px,#0f6 31px,#00ff70 97px,#00ff4e 103px,#00ff50 106px,#0f7 111px,#0f8 213px,#0f3 235px,#0f0 273px,#17ff00 321px,#0cff00 365px,#6fff00 369px,#7f0 370px,#9f0 393px,#8f0 398px,#83ff00 408px,#5f0 413px,#1f0 416px,#08ff00 417px,#0f0 428px,#07ff00 429px,#5fff00 432px,#6cff00 433px,#6bff00 445px,#6f0 446px,#06ff00 449px,#00ff05 450px,#00ff07 467px)"></i><i style="left:71px;background:linear-gradient(#00ff6d 1px,#00ff6e 18px,#6fff00 19px,#93ff00 21px,#8f0 27px,#2eff00 28px,#0f3 29px,#00ff61 30px,#00ff6e 31px,#0f7 97px,#00ff50 103px,#0f5 106px,#0f7 111px,#0f8 212px,#00ff39 234px,#0f2 261px,#0f2 377px,#0f1 378px,#7fff00 380px,#a3ff00 381px,#b1ff00 382px,#c1ff00 393px,#afff00 394px,#6f0 396px,#6f0 397px,#81ff00 398px,#c3ff00 399px,#df0 400px,#df0 425px,#c6ff00 426px,#3f0 428px,#0f1 429px,#0f2 430px,#0f2 467px)"></i><i style="left:72px;background:linear-gradient(#0f6 1px,#0f6 18px,#72ff00 19px,#9f0 21px,#8eff00 27px,#3f0 28px,#00ff2b 29px,#00ff5e 30px,#00ff6b 31px,#0f7 97px,#0f5 103px,#0f5 106px,#0f7 111px,#00ff8e 211px,#00ff39 233px,#0f0 278px,#1f0 321px,#05ff00 377px,#4f0 381px,#4eff00 384px,#4dff00 393px,#2f0 397px,#2f0 406px,#06ff00 411px,#00ff08 467px)"></i><i style="left:73px;background:linear-gradient(#00ff5c 1px,#00ff5d 18px,#7f0 19px,#9f0 21px,#9f0 27px,#38ff00 28px,#0f2 29px,#0f5 30px,#00ff5e 31px,#0f6 97px,#0f4 103px,#0f4 106px,#0f6 111px,#00ff83 210px,#0f7 217px,#0f3 232px,#0f0 262px,#16ff00 278px,#05ff00 373px,#4f0 381px,#4f0 394px,#0f0 401px,#00ff05 467px)"></i><i style="left:74px;background:linear-gradient(#00ff60 1px,#0f6 18px,#7f0 19px,#9f0 21px,#92ff00 27px,#3f0 28px,#0f2 29px,#0f5 30px,#0f6 31px,#00ff6f 97px,#00ff4d 103px,#00ff50 106px,#0f7 111px,#0f8 209px,#00ff81 215px,#00ff3a 231px,#00ff16 265px,#0f0 374px,#1f0 375px,#9f0 379px,#bf0 381px,#bf0 393px,#81ff00 396px,#7eff00 397px,#df0 400px,#df0 424px,#df0 425px,#af0 426px,#2aff00 428px,#0f0 429px,#0f0 467px)"></i><i style="left:75px;background:linear-gradient(#0f6 1px,#00ff6b 18px,#71ff00 19px,#94ff00 21px,#8dff00 27px,#3f0 28px,#00ff2d 29px,#00ff5f 30px,#00ff6c 31px,#0f7 97px,#00ff50 103px,#0f5 106px,#0f7 111px,#0f8 209px,#00ff3b 230px,#0f2 259px,#0f0 374px,#4aff00 376px,#d6ff00 379px,#ff0 381px,#f4ff00 394px,#5dff00 398px,#2f0 401px,#3fff00 414px,#6bff00 418px,#6fff00 424px,#6f0 426px,#1f0 431px,#1dff00 452px,#2eff00 453px,#a0ff00 456px,#af0 460px,#a5ff00 461px,#8f0 462px,#2f0 465px,#2f0 467px)"></i><i style="left:76px;background:linear-gradient(#0f6 1px,#0f6 18px,#71ff00 19px,#9f0 21px,#8eff00 27px,#3f0 28px,#00ff2b 29px,#00ff5d 30px,#0f6 31px,#00ff6d 97px,#00ff4b 103px,#00ff4d 106px,#00ff71 111px,#00ff82 208px,#00ff2e 230px,#0f0 266px,#0bff00 373px,#2aff00 375px,#d7ff00 379px,#ff0 381px,#f4ff00 394px,#2cff00 399px,#1f0 401px,#29ff00 402px,#9f0 405px,#afff00 419px,#9f0 432px,#8f0 433px,#3f0 435px,#1f0 437px,#1aff00 467px)"></i><i style="left:77px;background:linear-gradient(#00ff60 1px,#00ff61 18px,#7f0 19px,#9f0 21px,#93ff00 27px,#3f0 28px,#0f2 29px,#0f5 30px,#00ff61 31px,#0f6 97px,#0f4 103px,#0f4 106px,#0f6 111px,#00ff81 207px,#0f3 229px,#0f1 258px,#0f2 321px,#0f1 362px,#0f0 363px,#6bff00 365px,#8f0 366px,#92ff00 374px,#ef0 379px,#ff0 381px,#f7ff00 394px,#df0 395px,#1f0 399px,#00ff0a 400px,#1f0 431px,#0f0 436px,#0f0 467px)"></i><i style="left:78px;background:linear-gradient(#0f6 1px,#0f6 18px,#7f0 19px,#9f0 21px,#91ff00 27px,#3f0 28px,#0f2 29px,#0f5 30px,#0f6 31px,#0f6 97px,#0f4 103px,#0f4 106px,#0f6 111px,#0f7 206px,#00ff6f 212px,#00ff28 228px,#0f0 255px,#19ff00 273px,#0bff00 347px,#7cff00 351px,#7dff00 362px,#38ff00 365px,#3f0 366px,#3f0 373px,#4fff00 375px,#d1ff00 379px,#ef0 381px,#e5ff00 394px,#a4ff00 396px,#2f0 399px,#05ff00 401px,#0f0 422px,#6f0 428px,#5f0 467px)"></i><i style="left:79px;background:linear-gradient(#0f4 1px,#00ff16 4px,#0f1 18px,#6bff00 19px,#8eff00 21px,#8f0 27px,#0f0 29px,#0f1 30px,#0f1 39px,#0f7 40px,#0f7 42px,#0f1 44px,#0f1 97px,#0f0 106px,#0f1 111px,#00ff17 150px,#00ff7f 152px,#00ff7f 154px,#00ff17 156px,#00ff18 182px,#00ff81 184px,#00ff81 187px,#00ff18 189px,#00ff18 193px,#00ff82 195px,#00ff82 196px,#00ff19 198px,#00ff16 209px,#0f7 211px,#0f7 212px,#0f1 213px,#0f0 218px,#2eff00 231px,#00ff07 232px,#2dff00 233px,#3cff00 242px,#06ff00 243px,#00ff1d 244px,#0f1 254px,#1cff00 255px,#4fff00 256px,#5f0 265px,#0f0 267px,#0f0 283px,#5eff00 285px,#6f0 329px,#0aff00 330px,#0bff00 332px,#6f0 334px,#6f0 347px,#9f0 349px,#ef0 351px,#ef0 362px,#bf0 366px,#bf0 374px,#d5ff00 377px,#b2ff00 381px,#b3ff00 393px,#72ff00 401px,#7f0 422px,#83ff00 423px,#f7ff00 426px,#fff700 427px,#fffa00 467px)"></i><i style="left:80px;background:linear-gradient(#00ff17 1px,#1bff00 2px,#4cff00 3px,#61ff00 4px,#61ff00 18px,#9f0 21px,#8eff00 27px,#6f0 28px,#60ff00 39px,#0f6 40px,#0f6 42px,#00ff19 43px,#60ff00 44px,#5cff00 97px,#71ff00 103px,#5f0 111px,#5f0 150px,#00ff28 151px,#00ff7f 152px,#00ff7f 154px,#00ff28 155px,#5f0 156px,#50ff00 182px,#00ff2c 183px,#0f8 184px,#0f8 187px,#00ff2c 188px,#50ff00 189px,#4fff00 193px,#00ff2d 194px,#0f8 195px,#0f8 196px,#00ff2e 197px,#4eff00 198px,#5f0 209px,#00ff29 210px,#0f7 211px,#0f7 212px,#5aff00 213px,#80ff00 231px,#1f0 232px,#7f0 233px,#8f0 242px,#2f0 243px,#00ff27 244px,#00ff1d 254px,#3f0 255px,#8eff00 256px,#92ff00 265px,#3aff00 266px,#0f1 267px,#00ff16 283px,#39ff00 284px,#91ff00 285px,#8eff00 329px,#00ff1d 330px,#00ff1d 332px,#3f0 333px,#8eff00 334px,#8eff00 347px,#9f0 348px,#90ff00 349px,#ef0 351px,#fe0 354px,#ff9f00 355px,#ff6c00 356px,#ff6c00 377px,#f90 378px,#fe0 379px,#bf0 380px,#9f0 381px,#90ff00 422px,#9f0 423px,#f7ff00 426px,#ff0 427px,#ff0 464px,#ff0 466px,#e5ff00 467px)"></i><i style="left:81px;background:linear-gradient(#00ff5b 1px,#00ff5c 18px,#7f0 19px,#9f0 21px,#9f0 27px,#38ff00 28px,#0f2 29px,#0f5 30px,#00ff5e 31px,#0f6 97px,#0f4 103px,#00ff49 106px,#00ff6e 111px,#0f8 204px,#0f3 226px,#00ff0c 260px,#0f0 347px,#2f0 348px,#c7ff00 350px,#ef0 351px,#ef0 356px,#ef0 362px,#8f0 366px,#8f0 377px,#7f0 378px,#2f0 380px,#09ff00 381px,#16ff00 422px,#4fff00 427px,#5dff00 432px,#9fff00 436px,#a0ff00 464px,#6bff00 467px)"></i><i style="left:82px;background:linear-gradient(#0f6 1px,#0f6 18px,#7f0 19px,#9f0 21px,#91ff00 27px,#3f0 28px,#0f2 29px,#0f5 30px,#0f6 31px,#00ff6c 97px,#00ff49 103px,#00ff4b 106px,#00ff70 111px,#00ff83 203px,#0f3 225px,#0f0 255px,#18ff00 271px,#2f0 321px,#0cff00 347px,#7dff00 351px,#7f0 362px,#6f0 363px,#1f0 365px,#0f0 366px,#0f2 460px,#0f2 464px,#00ff0a 467px)"></i><i style="left:83px;background:linear-gradient(#00ff72 1px,#00ff72 18px,#6cff00 19px,#90ff00 21px,#8f0 27px,#2cff00 28px,#0f3 29px,#0f6 30px,#00ff72 31px,#0f7 97px,#00ff50 103px,#0f5 106px,#0f7 111px,#00ff83 202px,#0f3 224px,#0f0 256px,#17ff00 270px,#2f0 321px,#0f0 388px,#0f1 456px,#00ff08 462px,#0f0 463px,#2f0 464px,#9f0 467px)"></i><i style="left:84px;background:linear-gradient(#00ff70 1px,#00ff71 18px,#6dff00 19px,#90ff00 21px,#8f0 27px,#2cff00 28px,#0f3 29px,#0f6 30px,#00ff72 31px,#0f7 97px,#0f5 103px,#0f5 106px,#00ff7d 111px,#0f8 201px,#00ff39 223px,#0f0 266px,#1dff00 321px,#1f0 454px,#1f0 457px,#3f0 460px,#6cff00 462px,#ef0 465px,#fe0 467px)"></i><i style="left:85px;background:linear-gradient(#00ff6e 1px,#00ff6f 18px,#6eff00 19px,#92ff00 21px,#8f0 27px,#2eff00 28px,#0f3 29px,#0f6 30px,#00ff70 31px,#0f7 97px,#0f5 103px,#0f5 106px,#0f7 111px,#0f8 200px,#0f3 223px,#0f1 264px,#0f0 453px,#0cff00 455px,#2eff00 457px,#71ff00 459px,#faff00 462px,#ffe900 465px,#fff700 467px)"></i><i style="left:86px;background:linear-gradient(#0f6 1px,#0f6 18px,#7f0 19px,#9f0 21px,#8fff00 27px,#3f0 28px,#00ff29 29px,#00ff5b 30px,#0f6 31px,#00ff6c 97px,#00ff4a 103px,#00ff4c 106px,#00ff71 111px,#00ff81 200px,#0f3 222px,#0f1 253px,#0f0 337px,#3f0 396px,#2f0 397px,#49ff00 449px,#6f0 453px,#af0 456px,#ef0 458px,#fff900 459px,#fe0 462px,#ff0 464px,#a1ff00 466px,#5f0 467px)"></i><i style="left:87px;background:linear-gradient(#0f6 1px,#0f6 18px,#7f0 19px,#9f0 21px,#91ff00 27px,#3f0 28px,#00ff27 29px,#0f5 30px,#0f6 31px,#00ff70 97px,#00ff4e 103px,#00ff50 106px,#0f7 111px,#0f8 199px,#0f3 221px,#0f1 259px,#0f0 339px,#3f0 409px,#2f0 410px,#4f0 448px,#6f0 451px,#faff00 455px,#fff700 456px,#fff900 460px,#e9ff00 461px,#2aff00 464px,#05ff00 465px,#0f2 467px)"></i><i style="left:88px;background:linear-gradient(#00ff60 1px,#00ff61 18px,#7f0 19px,#9f0 21px,#93ff00 27px,#3f0 28px,#0f2 29px,#0f5 30px,#00ff61 31px,#0f6 97px,#0f4 103px,#0f4 106px,#00ff6b 111px,#00ff7c 198px,#00ff2a 220px,#0f0 247px,#1cff00 266px,#0f0 353px,#00ff17 429px,#0f0 431px,#4bff00 433px,#60ff00 435px,#5f0 439px,#0f0 441px,#00ff1b 443px,#0f1 447px,#0f0 448px,#5eff00 450px,#d8ff00 452px,#ff0 453px,#fff900 456px,#e9ff00 457px,#60ff00 459px,#0f1 461px,#0f4 464px,#0f5 467px)"></i><i style="left:89px;background:linear-gradient(#0f6 1px,#0f6 18px,#7f0 19px,#9f0 21px,#8fff00 27px,#3f0 28px,#00ff2a 29px,#00ff5c 30px,#0f6 31px,#00ff6f 97px,#00ff4d 103px,#00ff4f 106px,#0f7 111px,#00ff82 197px,#0f3 219px,#0f0 244px,#2bff00 259px,#4f0 321px,#0f0 442px,#1f0 444px,#3aff00 446px,#ff0 450px,#fff500 451px,#fffa00 453px,#df0 454px,#3f0 456px,#0f1 457px,#0f3 458px,#0f4 459px,#0f3 460px,#00ff50 467px)"></i><i style="left:90px;background:linear-gradient(#0f6 1px,#0f6 18px,#7f0 19px,#9f0 21px,#90ff00 27px,#3f0 28px,#00ff27 29px,#00ff5a 30px,#0f6 31px,#00ff70 97px,#00ff4e 103px,#00ff50 106px,#0f7 111px,#0f8 196px,#0f3 218px,#0f0 254px,#3f0 310px,#2f0 311px,#2f0 337px,#3f0 338px,#1f0 436px,#2f0 442px,#6f0 444px,#ef0 447px,#fff900 448px,#fffa00 450px,#e4ff00 451px,#9f0 452px,#39ff00 453px,#0f1 454px,#0f4 455px,#00ff6c 458px,#0f6 459px,#0f4 460px,#00ff4c 467px)"></i><i style="left:91px;background:linear-gradient(#00ff5f 1px,#0f6 18px,#7f0 19px,#9f0 21px,#92ff00 27px,#3f0 28px,#0f2 29px,#0f5 30px,#0f6 31px,#00ff6e 97px,#00ff4c 103px,#00ff4e 106px,#0f7 111px,#0f8 195px,#0f7 202px,#0f3 217px,#0f0 251px,#2f0 292px,#3f0 430px,#3f0 435px,#5f0 439px,#7f0 441px,#ef0 444px,#ff0 445px,#ef0 448px,#bf0 449px,#00ff07 451px,#0f5 453px,#00ff71 456px,#0f7 458px,#0f6 459px,#00ff49 460px,#00ff49 467px)"></i><i style="left:92px;background:linear-gradient(#00ff6e 1px,#00ff6e 18px,#6fff00 19px,#92ff00 21px,#8f0 27px,#2eff00 28px,#0f3 29px,#0f6 30px,#00ff6f 31px,#0f7 97px,#0f5 103px,#0f5 106px,#0f7 111px,#0f8 195px,#0f3 217px,#0f0 251px,#29ff00 312px,#2f0 426px,#2dff00 431px,#49ff00 434px,#af0 439px,#ff0 442px,#fffa00 443px,#ef0 445px,#c0ff00 446px,#2aff00 448px,#00ff0c 449px,#00ff50 450px,#0f7 453px,#0f7 458px,#00ff6d 459px,#00ff4c 460px,#00ff4c 467px)"></i><i style="left:93px;background:linear-gradient(#0f6 1px,#00ff6b 18px,#70ff00 19px,#94ff00 21px,#8dff00 27px,#3f0 28px,#00ff2d 29px,#00ff5f 30px,#00ff6c 31px,#00ff72 97px,#00ff50 103px,#0f5 106px,#0f7 111px,#0f8 194px,#00ff3c 216px,#0f2 247px,#0f2 299px,#0f0 303px,#00ff05 310px,#00ff29 314px,#00ff2b 321px,#0f0 426px,#3f0 430px,#e3ff00 437px,#ff0 439px,#ef0 442px,#c1ff00 443px,#3f0 445px,#0f1 446px,#0f4 449px,#0f7 450px,#00ff7d 451px,#00ff7e 458px,#0f7 459px,#0f5 460px,#0f5 467px)"></i><i style="left:94px;background:linear-gradient(#00ff6e 1px,#00ff6d 18px,#6fff00 19px,#93ff00 21px,#8f0 27px,#3f0 28px,#00ff2e 29px,#00ff60 30px,#00ff6d 31px,#00ff6c 97px,#00ff49 103px,#00ff4b 106px,#00ff70 111px,#0f7 193px,#00ff2c 215px,#00ff06 243px,#0f0 299px,#2f0 300px,#b4ff00 302px,#d7ff00 303px,#d7ff00 310px,#b3ff00 311px,#2f0 313px,#0f0 314px,#0f1 413px,#00ff05 422px,#2f0 425px,#d6ff00 432px,#ff0 435px,#ef0 437px,#c2ff00 439px,#81ff00 441px,#00ff08 443px,#0f3 445px,#00ff49 449px,#00ff7d 450px,#00ff7f 458px,#0f7 459px,#0f5 460px,#0f5 467px)"></i><i style="left:95px;background:linear-gradient(#00ff6c 1px,#00ff6e 18px,#6fff00 19px,#92ff00 21px,#8f0 27px,#2eff00 28px,#0f3 29px,#0f6 30px,#00ff70 31px,#0f7 97px,#0f5 103px,#00ff5b 106px,#00ff80 111px,#00ff94 192px,#0f4 215px,#0f2 256px,#00ff18 299px,#0f0 300px,#cf0 302px,#ef0 303px,#ef0 310px,#cf0 311px,#0f0 313px,#0f1 314px,#00ff16 406px,#0f0 418px,#4fff00 422px,#d1ff00 427px,#f3ff00 430px,#e8ff00 432px,#bf0 434px,#0f1 438px,#0f3 439px,#0f3 440px,#0f2 441px,#00ff4a 444px,#00ff4f 449px,#00ff82 450px,#0f8 458px,#0f7 459px,#0f5 460px,#0f5 467px)"></i><i style="left:96px;background:linear-gradient(#00ff5f 1px,#0f6 18px,#7f0 19px,#9f0 21px,#92ff00 27px,#3f0 28px,#0f2 29px,#0f5 30px,#0f6 31px,#00ff72 97px,#0f5 103px,#0f5 106px,#0f7 111px,#0f8 191px,#00ff39 213px,#0f1 247px,#1dff00 299px,#27ff00 300px,#7f0 302px,#8f0 303px,#8f0 310px,#7f0 311px,#2eff00 313px,#28ff00 314px,#0f0 365px,#0f1 404px,#0f0 412px,#3f0 416px,#cf0 422px,#ef0 425px,#df0 427px,#b2ff00 429px,#1dff00 432px,#00ff17 433px,#0f6 436px,#0f8 439px,#00ff4f 441px,#0f5 449px,#0f8 450px,#0f8 451px,#00ff8d 458px,#00ff82 459px,#00ff61 460px,#0f6 467px)"></i><i style="left:97px;background:linear-gradient(#00ff61 1px,#0f6 18px,#7f0 19px,#9f0 21px,#93ff00 27px,#3f0 28px,#0f2 29px,#0f5 30px,#0f6 31px,#0f6 97px,#0f4 103px,#00ff49 106px,#00ff6e 111px,#00ff7c 191px,#00ff2c 212px,#0f0 238px,#28ff00 254px,#3f0 269px,#2f0 270px,#3f0 321px,#2f0 342px,#3f0 343px,#1f0 392px,#2cff00 405px,#6f0 410px,#e3ff00 418px,#ef0 420px,#cf0 423px,#6bff00 426px,#1f0 428px,#0f1 429px,#00ff5e 431px,#00ff7e 434px,#00ff8f 438px,#00ff90 439px,#00ff49 441px,#00ff4a 449px,#00ff7e 450px,#00ff7f 451px,#00ff80 458px,#0f7 459px,#0f5 460px,#0f5 467px)"></i><i style="left:98px;background:linear-gradient(#00ff6c 1px,#00ff6d 18px,#71ff00 19px,#94ff00 21px,#8dff00 27px,#3f0 28px,#00ff2e 29px,#00ff60 30px,#00ff6d 31px,#00ff72 97px,#00ff50 103px,#0f5 106px,#0f7 111px,#0f8 190px,#0f3 212px,#0f1 247px,#0f0 301px,#0f1 329px,#0f0 385px,#2cff00 394px,#81ff00 404px,#d8ff00 410px,#ef0 414px,#ef0 416px,#cf0 418px,#8f0 420px,#16ff00 422px,#00ff19 423px,#00ff3d 424px,#00ff3d 426px,#00ff5a 429px,#00ff8d 431px,#00ff92 439px,#00ff49 441px,#00ff49 449px,#00ff7c 450px,#00ff7d 451px,#00ff7d 458px,#00ff72 459px,#00ff50 460px,#00ff50 467px)"></i><i style="left:99px;background:linear-gradient(#00ff6b 1px,#00ff6b 18px,#71ff00 19px,#9f0 21px,#8eff00 27px,#3f0 28px,#00ff2c 29px,#00ff5f 30px,#00ff6c 31px,#00ff70 97px,#00ff4e 103px,#00ff50 106px,#0f7 111px,#00ff83 189px,#0f3 212px,#00ff05 248px,#0f0 276px,#7cff00 307px,#0f0 328px,#1f0 379px,#5f0 389px,#c5ff00 397px,#ef0 406px,#e8ff00 409px,#c5ff00 412px,#7f0 415px,#5f0 416px,#2f0 417px,#0f1 418px,#00ff71 421px,#0f9 424px,#00ff60 426px,#0f6 429px,#00ff91 431px,#00ff8f 439px,#0f4 441px,#0f4 449px,#0f7 450px,#0f7 451px,#0f7 458px,#00ff6f 459px,#00ff4e 460px,#00ff4e 467px)"></i><i style="left:100px;background:linear-gradient(#00ff5c 1px,#00ff4b 4px,#00ff4a 18px,#72ff00 19px,#9f0 21px,#8eff00 27px,#3bff00 28px,#00ff1a 29px,#0f4 30px,#00ff4a 31px,#00ff4a 97px,#00ff3b 103px,#00ff4c 111px,#0f5 189px,#0f0 244px,#1f0 277px,#5f0 289px,#a2ff00 299px,#cf0 302px,#df0 307px,#c7ff00 311px,#9f0 314px,#1f0 328px,#0bff00 333px,#7f0 337px,#7f0 347px,#0cff00 351px,#1cff00 379px,#ef0 397px,#c2ff00 404px,#7f0 407px,#0cff00 410px,#0f1 411px,#0f5 414px,#00ff92 418px,#00ffaf 424px,#00ff6c 426px,#00ff6c 429px,#0f9 431px,#0f9 439px,#00ff4d 441px,#00ff4e 449px,#00ff81 450px,#00ff82 451px,#00ff83 458px,#0f7 459px,#0f5 460px,#0f5 467px)"></i><i style="left:101px;background:linear-gradient(#0f5 1px,#00ff3d 4px,#00ff3d 18px,#72ff00 19px,#9f0 21px,#8fff00 27px,#0f1 29px,#0f3 30px,#00ff3d 31px,#0f4 188px,#0f1 246px,#00ff18 269px,#0f0 277px,#81ff00 299px,#cf0 302px,#df0 307px,#cf0 311px,#7f0 314px,#0f0 328px,#00ff08 333px,#1f0 334px,#9eff00 336px,#bf0 337px,#bf0 347px,#a0ff00 348px,#1bff00 350px,#0f0 351px,#1f0 379px,#7f0 390px,#5f0 396px,#1f0 400px,#0f2 404px,#0f5 407px,#00ff93 412px,#0fa 420px,#0fa 424px,#0f6 426px,#0f6 429px,#00ff94 431px,#00ff92 439px,#00ff49 441px,#00ff49 449px,#00ff7c 450px,#00ff7d 451px,#00ff7d 458px,#00ff72 459px,#0f5 460px,#0f5 467px)"></i><i style="left:102px;background:linear-gradient(#0f6 1px,#0f6 18px,#7f0 19px,#9f0 21px,#91ff00 27px,#3f0 28px,#00ff28 29px,#00ff5b 30px,#0f6 31px,#00ff6b 97px,#00ff4b 103px,#00ff4c 106px,#00ff6f 111px,#00ff82 189px,#0f8 267px,#00ff5f 268px,#00ff2d 307px,#00ff60 329px,#0f5 379px,#0f4 389px,#0f8 401px,#00ffaf 419px,#00ffaf 424px,#00ff6b 426px,#00ff6b 429px,#0f9 431px,#00ff93 439px,#00ff4a 441px,#00ff4a 449px,#00ff7d 450px,#00ff7e 451px,#00ff7e 458px,#0f7 459px,#0f5 460px,#0f5 467px)"></i><i style="left:103px;background:linear-gradient(#00ff6c 1px,#00ff5a 4px,#00ff5a 18px,#6bff00 19px,#8fff00 21px,#8f0 27px,#3f0 28px,#00ff27 29px,#00ff50 30px,#00ff5a 31px,#00ff5a 97px,#00ff4b 103px,#00ff5c 111px,#0f6 246px,#00ff5a 307px,#0f6 346px,#00ffa3 352px,#00ff9e 389px,#0fa 401px,#00ffa1 405px,#00ffb3 413px,#00ffb3 424px,#00ff6f 426px,#00ff6e 429px,#0f9 431px,#0f9 439px,#00ff4e 441px,#00ff4e 449px,#00ff81 450px,#00ff82 451px,#00ff82 458px,#0f7 459px,#0f5 460px,#0f5 467px)"></i><i style="left:104px;background:linear-gradient(#0f5 1px,#0f4 4px,#0f4 18px,#7f0 19px,#9f0 21px,#90ff00 27px,#0f1 29px,#0f3 30px,#0f4 31px,#0f4 346px,#00ffa1 352px,#0fa 401px,#0f9 409px,#0fa 413px,#0fa 424px,#0f6 426px,#0f6 429px,#00ff92 431px,#00ff90 439px,#0f4 441px,#0f4 449px,#0f7 450px,#00ff7c 451px,#00ff7d 458px,#00ff72 459px,#00ff50 460px,#00ff50 467px)"></i><i style="left:105px;background:linear-gradient(#0f7 1px,#0f7 18px,#70ff00 19px,#93ff00 21px,#8f0 27px,#2cff00 28px,#0f3 29px,#0f6 30px,#0f7 31px,#00ff7d 97px,#00ff5c 103px,#00ff5e 106px,#00ff82 111px,#0f8 131px,#0f7 136px,#00ff8d 145px,#0fa 229px,#00ffb3 352px,#00ffb3 401px,#00ffa3 409px,#00ffb3 413px,#00ffb3 424px,#00ff6e 426px,#00ff6e 429px,#0f9 431px,#0f9 439px,#00ff4d 441px,#00ff4d 449px,#00ff80 450px,#00ff81 451px,#00ff81 458px,#0f7 459px,#0f5 460px,#0f5 467px)"></i><i style="left:106px;background:linear-gradient(#00ff6c 1px,#00ff6f 18px,#7f0 19px,#9f0 21px,#92ff00 27px,#3f0 28px,#00ff2c 29px,#0f6 30px,#00ff71 31px,#00ff7c 97px,#00ff5a 103px,#00ff5d 106px,#00ff82 111px,#0f8 131px,#00ff6e 136px,#00ff71 140px,#00ff90 145px,#0fa 229px,#00ffa4 401px,#00ff94 405px,#0fa 424px,#00ff61 426px,#00ff61 429px,#0f8 431px,#0f8 439px,#0f4 441px,#0f4 449px,#0f7 450px,#0f7 451px,#0f7 458px,#00ff6b 459px,#00ff49 460px,#00ff4a 467px)"></i><i style="left:107px;background:linear-gradient(#0f7 1px,#0f7 18px,#6fff00 19px,#93ff00 21px,#8f0 27px,#2bff00 28px,#0f3 29px,#00ff6b 30px,#0f7 31px,#00ff7c 97px,#0f5 103px,#00ff5b 106px,#00ff7f 111px,#0f8 131px,#0f6 136px,#0f6 140px,#0f8 145px,#0fa 321px,#0fa 401px,#0f9 405px,#0fa 424px,#0f6 426px,#0f6 429px,#0f9 431px,#00ff92 439px,#00ff49 441px,#00ff49 449px,#00ff7c 450px,#00ff7e 451px,#00ff7e 458px,#0f7 459px,#0f5 460px,#0f5 467px)"></i><i style="left:108px;background:linear-gradient(#0f6 1px,#0f6 18px,#7f0 19px,#9eff00 21px,#9f0 27px,#3f0 28px,#0f2 29px,#00ff5a 30px,#0f6 31px,#0f7 97px,#0f5 103px,#0f5 106px,#0f7 111px,#00ff81 131px,#0f6 136px,#0f6 140px,#0f8 145px,#0fa 229px,#0fa 401px,#0f9 405px,#0fa 417px,#0fa 424px,#0f6 426px,#0f6 429px,#00ff92 431px,#00ff8f 439px,#0f4 441px,#00ff49 449px,#0f7 450px,#00ff7c 451px,#00ff7c 458px,#00ff72 459px,#0f5 460px,#0f5 467px)"></i><i style="left:109px;background:linear-gradient(#0f7 1px,#0f7 18px,#6fff00 19px,#93ff00 21px,#8f0 27px,#2bff00 28px,#0f3 29px,#00ff6c 30px,#0f7 31px,#0f8 97px,#0f6 103px,#0f6 106px,#0f8 111px,#00ff90 131px,#00ff72 136px,#0f7 140px,#00ff94 144px,#0f9 161px,#0fa 401px,#0f9 405px,#0fa 416px,#0fa 417px,#0f8 418px,#00ff1d 420px,#09ff00 421px,#1f0 467px)"></i><i style="left:110px;background:linear-gradient(#0f7 1px,#00ff7c 18px,#6eff00 19px,#91ff00 21px,#8f0 27px,#29ff00 28px,#00ff39 29px,#00ff6f 30px,#00ff7d 31px,#0f8 97px,#0f6 103px,#0f6 106px,#0f8 111px,#00ff8f 131px,#00ff71 136px,#0f7 140px,#0f9 145px,#0fa 229px,#00ffb5 401px,#00ffa5 409px,#00ffb5 417px,#0fa 424px,#00ff6b 426px,#00ff6b 429px,#00ff94 431px,#00ff91 439px,#00ff4c 441px,#00ff4c 449px,#00ff7d 450px,#00ff7e 451px,#00ff7e 458px,#0f5 460px,#0f5 467px)"></i><i style="left:111px;background:linear-gradient(#0f7 1px,#0f7 18px,#6eff00 19px,#92ff00 21px,#8f0 27px,#2aff00 28px,#0f3 29px,#0f6 30px,#00ff71 31px,#0f7 47px,#00ff7d 97px,#00ff5b 103px,#00ff5c 106px,#00ff81 111px,#0f8 131px,#0f6 136px,#0f6 140px,#0f8 145px,#00ffaf 321px,#00ffb3 401px,#00ffa3 405px,#00ffb4 413px,#00ffb0 424px,#00ff6d 426px,#00ff6d 429px,#0f9 431px,#0f9 439px,#00ff4e 441px,#00ff4e 449px,#00ff80 450px,#0f8 458px,#0f7 459px,#0f5 460px,#0f5 467px)"></i><i style="left:112px;background:linear-gradient(#00ff6e 1px,#00ff6f 18px,#7f0 19px,#9f0 21px,#92ff00 27px,#3f0 28px,#0f2 29px,#0f4 30px,#00ff4c 31px,#0f4 47px,#00ff72 55px,#0f7 97px,#0f5 103px,#0f5 106px,#0f7 111px,#00ff81 131px,#0f6 135px,#0f6 139px,#0f8 145px,#00ffa4 229px,#0fa 401px,#0f9 409px,#0fa 412px,#00ffa4 413px,#0f3 416px,#00ff17 417px,#0f1 418px,#0f1 453px,#00ff29 455px,#0f7 458px,#00ff6f 459px,#00ff4e 460px,#00ff4d 467px)"></i><i style="left:113px;background:linear-gradient(#00ff6f 1px,#00ff71 18px,#7f0 19px,#9f0 21px,#90ff00 27px,#3f0 28px,#0f2 29px,#0f3 30px,#00ff1b 33px,#0f2 49px,#00ff6e 55px,#0f7 57px,#00ff7e 97px,#00ff5c 103px,#00ff5e 106px,#0f8 111px,#0f8 131px,#00ff6e 136px,#00ff70 140px,#00ff92 145px,#00ffb2 229px,#00ffaf 401px,#00ff9e 409px,#0fa 413px,#0fa 424px,#0f6 426px,#0f6 429px,#00ff8e 431px,#0f8 439px,#0f4 441px,#0f4 449px,#0f7 450px,#0f7 458px,#00ff6e 459px,#00ff4d 460px,#00ff4b 467px)"></i><i style="left:114px;background:linear-gradient(#0f7 1px,#0f7 18px,#6fff00 19px,#92ff00 21px,#8f0 27px,#2bff00 28px,#0f2 29px,#0f3 30px,#0f1 33px,#00ff17 43px,#0f7 50px,#00ff80 97px,#00ff5d 103px,#00ff5f 106px,#0f8 111px,#0f8 131px,#00ff6c 135px,#00ff6c 139px,#00ff8f 145px,#0fa 229px,#0fa 401px,#0f9 409px,#0fa 413px,#0fa 424px,#0f6 426px,#0f6 429px,#00ff8e 431px,#0f8 439px,#0f4 441px,#0f4 449px,#0f7 450px,#0f7 455px,#00ff72 458px,#0f4 460px,#00ff3e 467px)"></i><i style="left:115px;background:linear-gradient(#00ff70 1px,#00ff72 18px,#7f0 19px,#9f0 21px,#90ff00 27px,#3f0 28px,#0f2 29px,#0f3 30px,#0f2 33px,#0f2 38px,#0f7 45px,#00ff7e 97px,#00ff5c 103px,#00ff5f 106px,#0f8 111px,#0f8 131px,#00ff6e 136px,#00ff70 140px,#00ff92 145px,#0fa 229px,#0fa 401px,#0f9 409px,#0fa 413px,#0fa 424px,#0f6 426px,#0f6 429px,#00ff8d 431px,#0f8 439px,#0f4 441px,#0f4 449px,#00ff71 450px,#00ff71 451px,#00ff5a 458px,#00ff38 460px,#00ff2c 467px)"></i><i style="left:116px;background:linear-gradient(#0f7 1px,#0f7 18px,#72ff00 19px,#9f0 21px,#8fff00 27px,#2eff00 28px,#0f2 29px,#00ff3a 30px,#00ff29 33px,#00ff29 41px,#00ff6c 47px,#0f7 49px,#00ff72 97px,#00ff4f 103px,#0f5 106px,#0f7 111px,#0f7 131px,#00ff5b 135px,#00ff5b 139px,#00ff7c 145px,#0fa 321px,#00ffa2 402px,#0f9 407px,#00ff6f 411px,#00ff72 424px,#0f4 426px,#0f4 429px,#00ff60 431px,#00ff5e 439px,#00ff2c 441px,#00ff3e 444px,#00ff3b 449px,#00ff5d 450px,#0f3 460px,#0f3 467px)"></i><i style="left:117px;background:linear-gradient(#0f7 1px,#0f7 18px,#72ff00 19px,#9f0 21px,#8eff00 27px,#2dff00 28px,#0f2 29px,#0f3 30px,#00ff1d 33px,#00ff1d 48px,#00ff6d 54px,#0f7 56px,#0f7 97px,#0f5 103px,#0f5 106px,#00ff7d 111px,#00ff82 131px,#0f6 136px,#0f6 140px,#0f8 145px,#00ffb4 321px,#00ffb3 353px,#0f9 360px,#0f9 366px,#00ffb1 373px,#00ffb2 382px,#0f7 390px,#0f7 399px,#00ffa1 406px,#00ff8d 408px,#0f4 411px,#0f4 424px,#0f2 426px,#0f3 439px,#0f2 441px,#0f4 444px,#0f4 449px,#0f5 450px,#00ff3c 467px)"></i><i style="left:118px;background:linear-gradient(#00ff7f 1px,#00ff7e 18px,#6cff00 19px,#90ff00 21px,#8f0 27px,#28ff00 28px,#00ff27 29px,#0f3 30px,#0f1 33px,#0f1 48px,#00ff7d 56px,#00ff7e 97px,#00ff5b 103px,#00ff5d 106px,#00ff82 111px,#0f8 131px,#0f6 136px,#0f6 140px,#0f8 145px,#00ffaf 321px,#00ffaf 353px,#0f5 360px,#0f5 364px,#0f5 367px,#0fa 373px,#00ffaf 382px,#0f9 384px,#0f4 388px,#00ff2d 390px,#00ff2d 398px,#0f8 405px,#0f9 413px,#0f9 424px,#0f5 426px,#0f5 429px,#0f7 431px,#00ff60 439px,#00ff3c 441px,#00ff3c 449px,#00ff4f 450px,#0f4 467px)"></i><i style="left:119px;background:linear-gradient(#0f6 1px,#00ff6b 18px,#7f0 19px,#9f0 21px,#9f0 27px,#3f0 28px,#0f1 29px,#0f2 30px,#00ff07 33px,#00ff0b 42px,#00ff5d 47px,#00ff6d 49px,#0f7 97px,#0f5 103px,#0f5 106px,#0f7 111px,#00ff7e 131px,#00ff61 135px,#00ff61 138px,#00ff83 144px,#0f8 161px,#0fa 353px,#00ff90 355px,#07ff00 361px,#2f0 362px,#29ff00 364px,#07ff00 366px,#00ffa3 373px,#0fa 382px,#00ff8e 384px,#0f1 388px,#1f0 389px,#3f0 392px,#39ff00 395px,#05ff00 401px,#5bff00 404px,#5bff00 466px,#4aff00 467px)"></i><i style="left:120px;background:linear-gradient(#0f7 1px,#0f7 18px,#72ff00 19px,#9f0 21px,#8fff00 27px,#2eff00 28px,#0f2 29px,#0f3 30px,#0f2 33px,#0f2 38px,#0f7 45px,#0f7 97px,#0f5 103px,#0f5 106px,#00ff7c 111px,#00ff81 131px,#0f6 136px,#0f6 140px,#0f8 145px,#00ffa1 229px,#00ffa3 321px,#00ffa3 353px,#0f8 355px,#00ff0b 359px,#2f0 360px,#6f0 362px,#7f0 364px,#6f0 365px,#00ff0b 368px,#0f8 372px,#00ffa3 374px,#0f9 383px,#0f0 388px,#2aff00 389px,#5f0 391px,#6f0 395px,#4f0 398px,#0f0 400px,#00ff5c 403px,#0f8 405px,#00ff93 412px,#00ff7d 417px,#0f2 421px,#00ff0a 426px,#0f1 439px,#0f0 441px,#0f0 449px,#0f1 451px,#0f0 461px,#00ff19 463px,#0f2 467px)"></i><i style="left:121px;background:linear-gradient(#00ff7d 1px,#00ff7c 18px,#6eff00 19px,#91ff00 21px,#8f0 27px,#29ff00 28px,#00ff2a 29px,#0f4 30px,#0f3 33px,#0f3 42px,#00ff7c 50px,#00ff7d 97px,#00ff5a 103px,#00ff5c 106px,#00ff81 111px,#0f8 131px,#0f6 135px,#0f6 139px,#0f8 145px,#0fa 229px,#00ffb6 321px,#00ffb6 353px,#0f9 355px,#0f0 360px,#3aff00 361px,#5cff00 362px,#6bff00 364px,#3aff00 366px,#0f0 367px,#0f9 372px,#00ffb5 374px,#0fa 383px,#0f1 388px,#2f0 389px,#5f0 392px,#5eff00 395px,#4cff00 397px,#2f0 399px,#0f1 400px,#0f7 403px,#0f9 406px,#00ff6d 424px,#0f5 426px,#0f6 439px,#00ff5f 440px,#00ff3d 441px,#00ff3d 449px,#00ff5f 450px,#00ff5b 459px,#0f4 460px,#0f5 467px)"></i><i style="left:122px;background:linear-gradient(#00ff72 1px,#0f7 18px,#7f0 19px,#9f0 21px,#90ff00 27px,#3f0 28px,#0f2 29px,#0f3 30px,#00ff19 33px,#00ff1b 49px,#0f7 56px,#0f7 97px,#0f5 103px,#00ff5a 106px,#00ff7f 111px,#0f8 131px,#0f6 136px,#0f6 140px,#0f8 145px,#00ffa0 229px,#00ffa1 353px,#0f8 355px,#00ff0a 359px,#2f0 360px,#5f0 362px,#6f0 364px,#5f0 365px,#00ff0b 368px,#0f8 372px,#00ffa4 374px,#0f9 383px,#0f0 388px,#28ff00 389px,#61ff00 392px,#6f0 395px,#4f0 398px,#0f0 400px,#0f4 402px,#00ff6d 405px,#00ff5d 424px,#00ff4c 426px,#0f5 439px,#0f4 441px,#0f4 449px,#0f5 451px,#00ff4f 467px)"></i><i style="left:123px;background:linear-gradient(#0f7 1px,#0f7 18px,#72ff00 19px,#9f0 21px,#8fff00 27px,#2eff00 28px,#0f2 29px,#0f3 30px,#00ff1b 33px,#00ff1b 47px,#0f7 55px,#0f7 97px,#0f5 103px,#0f5 106px,#00ff7d 111px,#00ff82 131px,#0f6 135px,#0f6 139px,#0f8 145px,#00ffa1 229px,#0fa 353px,#00ff91 355px,#0f1 360px,#0f0 363px,#00ff16 367px,#00ff93 372px,#0fa 374px,#00ffa4 383px,#0f1 388px,#1f0 389px,#3f0 392px,#38ff00 395px,#2f0 398px,#0cff00 399px,#00ff4d 402px,#00ff60 405px,#0f6 424px,#0f5 426px,#0f6 439px,#00ff4c 441px,#00ff4d 449px,#00ff61 451px,#0f5 467px)"></i><i style="left:124px;background:linear-gradient(#0f7 1px,#0f7 18px,#71ff00 19px,#9f0 21px,#8dff00 27px,#2dff00 28px,#00ff2a 29px,#00ff4c 30px,#0f4 40px,#0f7 48px,#00ff7e 97px,#00ff5c 103px,#00ff5e 106px,#00ff83 111px,#0f8 131px,#00ff6c 135px,#00ff6c 139px,#00ff8f 145px,#00ffb0 231px,#00ffb3 353px,#00ff5d 360px,#0f5 366px,#0fa 373px,#00ffb2 377px,#00ffa1 383px,#0f4 388px,#0f3 390px,#0f3 398px,#00ff5f 403px,#0f6 412px,#00ff61 424px,#0f5 426px,#0f5 439px,#00ff3f 441px,#0f5 458px,#0f4 467px)"></i><i style="left:125px;background:linear-gradient(#00ff6b 1px,#00ff6b 18px,#7f0 19px,#9f0 21px,#94ff00 27px,#3f0 28px,#0f2 29px,#0f5 30px,#00ff61 31px,#00ff6c 45px,#00ff70 97px,#00ff4e 103px,#00ff50 106px,#0f7 111px,#0f7 131px,#00ff5c 136px,#00ff5e 140px,#00ff7f 145px,#00ffb4 321px,#00ffb4 353px,#0f9 361px,#0fa 373px,#0f6 389px,#00ff6d 416px,#0f5 419px,#00ff19 421px,#0f1 426px,#00ff08 449px,#0f1 454px,#0f5 457px,#0f5 458px,#00ff4c 467px)"></i><i style="left:126px;background:linear-gradient(#0f7 1px,#0f7 18px,#71ff00 19px,#94ff00 21px,#8dff00 27px,#2cff00 28px,#0f3 29px,#0f6 30px,#0f7 31px,#00ff80 97px,#00ff5d 103px,#00ff5f 106px,#0f8 111px,#0f8 131px,#00ff6d 136px,#00ff6f 140px,#00ff91 145px,#0fa 229px,#0fa 361px,#0f5 384px,#0f5 424px,#0f4 426px,#00ff49 439px,#0f3 441px,#0f4 451px,#0f3 467px)"></i><i style="left:127px;background:linear-gradient(#00ff6e 1px,#00ff70 18px,#7f0 19px,#9f0 21px,#91ff00 27px,#3f0 28px,#00ff2c 29px,#0f6 30px,#00ff71 31px,#0f7 97px,#0f5 103px,#00ff5b 106px,#00ff80 111px,#0f8 131px,#0f6 136px,#00ff6c 140px,#00ff8d 145px,#0fa 229px,#0fa 354px,#0f6 375px,#0f6 424px,#0f5 426px,#00ff61 439px,#00ff4b 441px,#00ff4b 449px,#00ff5b 451px,#00ff50 467px)"></i><i style="left:128px;background:linear-gradient(#0f7 1px,#0f7 18px,#7f0 19px,#9f0 21px,#8fff00 27px,#3f0 28px,#0f3 29px,#0f6 30px,#0f7 31px,#0f7 97px,#0f5 103px,#0f5 106px,#0f7 111px,#00ff80 131px,#0f6 136px,#0f6 140px,#0f8 145px,#0fa 345px,#00ff6c 367px,#00ff6f 379px,#00ff5f 384px,#0f6 422px,#0f3 426px,#00ff4f 433px,#00ff50 439px,#00ff3c 441px,#00ff3d 449px,#00ff4c 451px,#0f4 467px)"></i><i style="left:129px;background:linear-gradient(#0f7 1px,#0f7 18px,#72ff00 19px,#9f0 21px,#8eff00 27px,#2dff00 28px,#0f3 29px,#0f6 30px,#0f7 31px,#0f7 97px,#0f5 103px,#0f5 106px,#00ff7c 111px,#00ff81 131px,#0f6 136px,#0f6 140px,#0f8 145px,#00ffa1 229px,#0fa 337px,#0f5 358px,#0f5 379px,#0f3 384px,#0f3 422px,#00ff17 427px,#0f2 429px,#0f4 431px,#00ff4c 433px,#00ff3e 441px,#0f4 467px)"></i><i style="left:130px;background:linear-gradient(#00ff7c 1px,#00ff7c 18px,#6eff00 19px,#91ff00 21px,#8f0 27px,#2aff00 28px,#0f3 29px,#00ff6e 30px,#00ff7c 31px,#00ff7d 97px,#00ff5b 103px,#00ff5c 106px,#00ff81 111px,#0f8 131px,#0f6 136px,#0f6 140px,#0f8 145px,#0fa 321px,#0fa 333px,#0f6 352px,#00ff5b 424px,#00ff4a 426px,#0f5 439px,#0f4 441px,#00ff4b 451px,#00ff3e 467px)"></i><i style="left:131px;background:linear-gradient(#0f7 1px,#0f7 18px,#70ff00 19px,#93ff00 21px,#8f0 27px,#2bff00 28px,#0f3 29px,#00ff6b 30px,#0f7 31px,#00ff7f 97px,#00ff5d 103px,#00ff5f 106px,#0f8 111px,#0f8 131px,#00ff6c 136px,#00ff6e 140px,#00ff8f 145px,#0fa 229px,#0fa 322px,#00ff5d 344px,#00ff5e 391px,#0f4 396px,#00ff3a 441px,#0f5 450px,#0f4 467px)"></i><i style="left:132px;background:linear-gradient(#0f7 1px,#0f7 18px,#6fff00 19px,#93ff00 21px,#8f0 27px,#2bff00 28px,#0f3 29px,#00ff6c 30px,#0f7 31px,#0f7 97px,#0f5 103px,#00ff5a 106px,#00ff7e 111px,#00ff82 131px,#0f6 136px,#0f6 140px,#0f8 145px,#00ffa0 313px,#00ff94 320px,#0f5 335px,#0f5 351px,#0f4 353px,#0f1 355px,#0f1 373px,#0f4 375px,#0f5 377px,#00ff4c 467px)"></i><i style="left:133px;background:linear-gradient(#00ff72 1px,#0f7 18px,#7f0 19px,#9f0 21px,#8fff00 27px,#2eff00 28px,#0f3 29px,#0f6 30px,#0f7 31px,#00ff7f 97px,#00ff5d 103px,#00ff5f 106px,#0f8 111px,#0f8 131px,#00ff6d 136px,#00ff70 140px,#00ff91 145px,#0fa 229px,#0fa 308px,#00ff5a 328px,#0f5 351px,#00ff4a 352px,#0f1 353px,#92ff00 354px,#e3ff00 355px,#e3ff00 373px,#92ff00 374px,#0f1 375px,#00ff4a 376px,#0f5 377px,#0f5 424px,#0f4 426px,#00ff50 439px,#00ff3e 441px,#00ff4b 451px,#0f4 467px)"></i><i style="left:134px;background:linear-gradient(#00ff7c 1px,#0f7 18px,#6fff00 19px,#92ff00 21px,#8f0 27px,#2bff00 28px,#0f3 29px,#00ff6c 30px,#0f7 31px,#0f7 97px,#0f5 103px,#0f5 106px,#0f7 111px,#00ff7d 131px,#00ff5e 136px,#00ff60 140px,#00ff80 145px,#0f9 298px,#0f8 305px,#00ff4a 320px,#00ff3f 351px,#00ff2e 355px,#0f4 401px,#00ff3f 424px,#00ff2e 426px,#00ff38 439px,#00ff27 441px,#0f3 458px,#00ff2a 467px)"></i><i style="left:135px;background:linear-gradient(#0f7 1px,#0f7 18px,#70ff00 19px,#94ff00 21px,#8dff00 27px,#2cff00 28px,#0f3 29px,#0f6 30px,#0f7 31px,#0f7 97px,#0f5 103px,#0f5 106px,#0f7 111px,#00ff7f 131px,#00ff61 135px,#00ff61 139px,#00ff83 145px,#0f9 216px,#00ff5d 222px,#00ff5e 286px,#00ff49 291px,#0f3 307px,#0f1 312px,#0f1 346px,#0f4 352px,#0f4 369px,#0f3 370px,#0bff00 371px,#0aff00 380px,#0f3 381px,#0f4 382px,#0f4 409px,#00ff2b 411px,#0bff00 412px,#4cff00 413px,#5fff00 414px,#4fff00 454px,#4aff00 455px,#1cff00 456px,#00ff1a 457px,#0f4 458px,#00ff4a 459px,#00ff3d 460px,#00ff3f 467px)"></i><i style="left:136px;background:linear-gradient(#0f7 1px,#0f7 18px,#7f0 19px,#9f0 21px,#90ff00 27px,#3f0 28px,#00ff2e 29px,#0f6 30px,#0f7 31px,#0f7 97px,#0f5 103px,#0f5 106px,#0f7 111px,#00ff7c 131px,#00ff5f 135px,#00ff5f 139px,#00ff81 145px,#0f9 216px,#0f4 222px,#00ff4b 286px,#00ff1c 288px,#2f0 289px,#a3ff00 291px,#bf0 292px,#9f0 369px,#ff0 371px,#ff0 380px,#9f0 382px,#af0 387px,#ef0 389px,#fff700 390px,#ffe900 392px,#ffe800 426px,#fff400 428px,#ff0 429px,#b1ff00 431px,#a1ff00 432px,#a1ff00 439px,#bf0 441px,#af0 458px,#bf0 466px,#9f0 467px)"></i><i style="left:137px;background:linear-gradient(#00ff7f 1px,#00ff7e 18px,#6cff00 19px,#90ff00 21px,#8f0 27px,#28ff00 28px,#00ff3a 29px,#00ff70 30px,#00ff7e 31px,#00ff7f 97px,#00ff5c 103px,#00ff5e 106px,#00ff83 111px,#0f8 131px,#0f6 136px,#00ff6b 140px,#0f8 145px,#00ff9f 275px,#00ff93 286px,#0f6 288px,#0f1 290px,#2f0 291px,#3fff00 292px,#3f0 369px,#ff0 371px,#ff0 380px,#3f0 382px,#4f0 387px,#bf0 390px,#ef0 392px,#e9ff00 424px,#ff0 426px,#d4ff00 428px,#5f0 431px,#4f0 432px,#4f0 439px,#7f0 441px,#7f0 449px,#5f0 450px,#5f0 451px,#5f0 458px,#6eff00 460px,#6eff00 466px,#5bff00 467px)"></i><i style="left:138px;background:linear-gradient(#00ff80 1px,#00ff80 18px,#6bff00 19px,#8fff00 21px,#8f0 27px,#27ff00 28px,#00ff3b 29px,#00ff6f 30px,#00ff7c 31px,#00ff83 97px,#00ff60 103px,#0f6 106px,#0f8 111px,#0f8 131px,#00ff6e 135px,#00ff6e 138px,#00ff8f 144px,#00ff93 154px,#0f4 160px,#00ff39 272px,#00ff1c 321px,#0f2 346px,#00ff3c 352px,#0f4 369px,#0f0 370px,#f8ff00 371px,#f8ff00 380px,#0f0 381px,#0f4 382px,#0f4 467px)"></i><i style="left:139px;background:linear-gradient(#00ff70 1px,#00ff70 18px,#7f0 19px,#9f0 21px,#91ff00 27px,#3f0 28px,#00ff28 29px,#0f5 30px,#00ff5e 31px,#0f5 41px,#00ff71 51px,#0f7 97px,#00ff50 103px,#0f5 106px,#0f7 111px,#0f7 131px,#00ff5d 136px,#00ff5f 140px,#00ff80 145px,#00ff83 154px,#00ff6d 160px,#00ff7e 243px,#00ff4e 245px,#00ff4f 258px,#00ff80 261px,#0f5 319px,#0f5 346px,#0f4 347px,#05ff00 348px,#00ff0b 363px,#00ff4e 364px,#0f6 365px,#0f6 369px,#0f1 370px,#f8ff00 371px,#f8ff00 380px,#0f1 381px,#0f6 382px,#0f7 424px,#0f6 426px,#0f7 439px,#0f5 441px,#0f5 449px,#00ff72 450px,#0f7 458px,#00ff5e 460px,#00ff5f 467px)"></i><i style="left:140px;background:linear-gradient(#0f7 1px,#0f7 18px,#6fff00 19px,#93ff00 21px,#8f0 27px,#2bff00 28px,#00ff2a 29px,#00ff4c 30px,#0f4 46px,#0f7 55px,#0f7 97px,#0f5 103px,#0f5 106px,#0f7 111px,#00ff7f 131px,#00ff61 135px,#00ff61 139px,#00ff83 145px,#00ffa1 243px,#0f2 245px,#0f2 258px,#00ff38 259px,#00ff8d 260px,#00ffa0 261px,#0f6 314px,#0f5 346px,#00ff07 347px,#ff0 348px,#ff0 363px,#00ff07 364px,#0f5 365px,#0f5 369px,#00ff0b 370px,#f8ff00 371px,#f8ff00 380px,#00ff0b 381px,#0f5 382px,#0f5 424px,#0f4 426px,#00ff4d 439px,#00ff3b 441px,#0f4 451px,#00ff3c 467px)"></i><i style="left:141px;background:linear-gradient(#0f7 1px,#0f7 18px,#71ff00 19px,#9f0 21px,#8eff00 27px,#2dff00 28px,#0f2 29px,#0f4 30px,#0f3 34px,#0f3 54px,#0f7 63px,#0f7 98px,#0f5 103px,#0f5 106px,#00ff7e 111px,#00ff83 131px,#0f6 135px,#0f6 139px,#0f8 145px,#0fa 243px,#00ff29 245px,#00ff2a 258px,#00ff3e 259px,#00ff92 260px,#00ffa5 261px,#0f7 346px,#0f1 347px,#ff0 348px,#ff0 363px,#0f1 364px,#0f6 365px,#00ff60 369px,#0f1 370px,#f8ff00 371px,#f8ff00 380px,#0f1 381px,#00ff5f 382px,#00ff5e 424px,#0f4 426px,#0f5 431px,#0f5 439px,#00ff3a 441px,#00ff3a 449px,#00ff4f 451px,#00ff3f 467px)"></i><i style="left:142px;background:linear-gradient(#0f7 1px,#00ff7c 18px,#6eff00 19px,#91ff00 21px,#8f0 27px,#2aff00 28px,#00ff29 29px,#0f4 30px,#0f3 34px,#0f3 51px,#00ff7c 60px,#00ff7f 97px,#00ff5c 103px,#00ff5e 106px,#00ff83 111px,#0f8 131px,#0f6 136px,#00ff6c 140px,#00ff8d 145px,#00ffa4 229px,#00ffa4 243px,#0f2 245px,#0f2 258px,#00ff3a 259px,#0f8 260px,#00ff9e 261px,#00ff5d 321px,#0f5 346px,#00ff07 347px,#ff0 348px,#ff0 363px,#00ff08 364px,#0f4 365px,#0f4 369px,#00ff0c 370px,#f8ff00 371px,#f8ff00 380px,#0f1 381px,#0f4 382px,#00ff3a 467px)"></i><i style="left:143px;background:linear-gradient(#00ff7c 1px,#0f7 18px,#6eff00 19px,#92ff00 21px,#8f0 27px,#2bff00 28px,#0f2 29px,#0f3 30px,#0f1 34px,#0f1 47px,#0f6 54px,#0f7 57px,#0f7 97px,#0f5 102px,#0f5 105px,#00ff7d 111px,#00ff80 131px,#0f6 135px,#0f6 139px,#0f8 145px,#00ffa5 243px,#00ff27 245px,#00ff28 258px,#00ff3c 259px,#00ff8f 260px,#00ffa2 261px,#00ff6f 346px,#0f1 347px,#ff0 348px,#ff0 363px,#0f1 364px,#00ff6e 365px,#00ff6d 369px,#0f1 370px,#f8ff00 371px,#f8ff00 380px,#00ff16 381px,#00ff6c 382px,#0f6 424px,#0f5 426px,#00ff61 439px,#00ff4e 441px,#00ff5b 451px,#00ff4f 467px)"></i><i style="left:144px;background:linear-gradient(#0f7 1px,#0f7 18px,#6eff00 19px,#92ff00 21px,#8f0 27px,#2aff00 28px,#0f2 29px,#0f3 30px,#00ff18 34px,#00ff18 54px,#00ff7d 64px,#00ff80 98px,#00ff5e 103px,#00ff60 106px,#0f8 111px,#0f8 131px,#00ff6d 136px,#00ff6f 140px,#00ff90 145px,#0fa 242px,#0f9 243px,#00ff1d 244px,#83ff00 245px,#9f0 246px,#9f0 255px,#83ff00 256px,#0f1 257px,#00ff60 258px,#00ffa1 260px,#0fa 261px,#0f6 346px,#0f1 347px,#ff0 348px,#ff0 363px,#0f1 364px,#00ff5b 365px,#0f5 369px,#00ff06 371px,#00ff06 380px,#0f5 382px,#0f5 424px,#0f4 426px,#00ff4f 439px,#0f3 441px,#00ff49 458px,#0f3 460px,#00ff39 467px)"></i><i style="left:145px;background:linear-gradient(#0f7 1px,#0f7 18px,#71ff00 19px,#94ff00 21px,#8dff00 27px,#2dff00 28px,#0f2 29px,#00ff3d 30px,#00ff29 34px,#00ff29 60px,#0f7 70px,#0f7 98px,#0f5 102px,#0f5 105px,#00ff7e 111px,#00ff83 131px,#0f6 135px,#0f6 139px,#0f8 145px,#0fa 242px,#0fa 243px,#0f7 245px,#00ff72 255px,#0fa 259px,#00ff70 346px,#0f1 347px,#ff0 348px,#ff0 363px,#0f1 364px,#00ff5b 365px,#0f5 369px,#00ff3a 370px,#1f0 371px,#1f0 380px,#00ff39 381px,#00ff50 382px,#0f3 439px,#0f2 441px,#0f3 450px,#00ff28 467px)"></i><i style="left:146px;background:linear-gradient(#0f7 1px,#0f7 18px,#70ff00 19px,#93ff00 21px,#8f0 27px,#2cff00 28px,#0f2 29px,#00ff2d 30px,#0f0 33px,#0cff00 35px,#00ff18 55px,#0f7 64px,#00ff7f 98px,#00ff5d 103px,#00ff5f 106px,#0f8 111px,#0f8 131px,#00ff6c 136px,#00ff6f 140px,#00ff90 145px,#0fa 229px,#0fa 282px,#00ff72 321px,#0f6 346px,#0f1 347px,#ff0 348px,#ff0 363px,#0f1 364px,#0f6 365px,#0f6 369px,#0f5 370px,#0bff00 371px,#0bff00 380px,#0f5 381px,#0f6 382px,#0f6 416px,#0f5 419px,#0f1 421px,#0f0 426px,#00ff0c 439px,#0f0 442px,#00ff3e 445px,#00ff4a 449px,#00ff5d 450px,#0f5 467px)"></i><i style="left:147px;background:linear-gradient(#0f7 1px,#0f7 18px,#6fff00 19px,#93ff00 21px,#8f0 27px,#2bff00 28px,#0f2 29px,#00ff18 30px,#1dff00 31px,#93ff00 33px,#b2ff00 34px,#b6ff00 35px,#b6ff00 42px,#a5ff00 43px,#00ff06 47px,#0f1 55px,#0f6 61px,#00ff7c 64px,#00ff80 98px,#00ff5e 103px,#00ff60 106px,#0f8 111px,#0f8 131px,#00ff6d 136px,#00ff6f 140px,#00ff90 145px,#0fa 229px,#0f9 304px,#0f6 332px,#00ff61 346px,#00ff09 347px,#ff0 348px,#ff0 363px,#00ff0a 364px,#00ff5f 365px,#00ff5e 369px,#00ff4b 370px,#1f0 371px,#1f0 380px,#00ff4c 381px,#00ff5f 382px,#0f6 424px,#0f5 429px,#0f5 439px,#00ff3a 441px,#00ff3a 449px,#0f5 450px,#0f5 459px,#0f4 460px,#00ff4d 467px)"></i><i style="left:148px;background:linear-gradient(#0f7 1px,#0f7 18px,#70ff00 19px,#93ff00 21px,#8dff00 27px,#2cff00 28px,#0f2 29px,#0f2 30px,#06ff00 31px,#90ff00 33px,#b3ff00 34px,#bf0 35px,#bf0 42px,#a5ff00 43px,#0f0 46px,#00ff27 48px,#00ff29 64px,#0f7 73px,#0f7 98px,#0f5 103px,#0f5 106px,#00ff7d 111px,#00ff82 131px,#0f6 136px,#0f6 140px,#0f8 145px,#0fa 307px,#00ff7f 346px,#00ff0b 347px,#ff0 348px,#ff0 363px,#00ff0a 364px,#00ff4c 365px,#00ff2a 367px,#00ff29 370px,#1f0 371px,#1f0 380px,#00ff29 381px,#0f2 427px,#0f1 428px,#2f0 430px,#2aff00 461px,#2f0 462px,#00ff05 463px,#0f2 464px,#0f2 467px)"></i><i style="left:149px;background:linear-gradient(#00ff7e 1px,#00ff7e 18px,#6dff00 19px,#90ff00 21px,#8f0 27px,#29ff00 28px,#0f2 29px,#0f3 30px,#0f0 32px,#29ff00 33px,#3cff00 34px,#3eff00 42px,#3f0 43px,#0f0 45px,#0f2 48px,#0f2 65px,#0f7 73px,#00ff7c 75px,#00ff7c 98px,#00ff5a 103px,#00ff5c 106px,#00ff80 111px,#0f8 131px,#0f6 135px,#0f6 139px,#0f8 145px,#00ffa5 229px,#0fa 325px,#0f9 346px,#91ff00 347px,#fe0 348px,#fe0 363px,#92ff00 364px,#00ff71 365px,#0f6 369px,#00ff4d 370px,#0cff00 371px,#1f0 380px,#00ff4d 381px,#00ff60 382px,#00ff3c 467px)"></i><i style="left:150px;background:linear-gradient(#00ff70 1px,#00ff70 18px,#7f0 19px,#9f0 21px,#92ff00 27px,#3f0 28px,#00ff16 29px,#0f2 30px,#0f0 34px,#0f0 59px,#0f1 61px,#0f6 67px,#00ff6f 69px,#00ff70 98px,#00ff4e 103px,#00ff4f 106px,#0f7 111px,#0f7 131px,#00ff5a 136px,#00ff5c 140px,#00ff7d 145px,#0f9 229px,#0fa 346px,#9f0 347px,#fe0 348px,#fe0 363px,#9f0 364px,#0f6 365px,#0f5 369px,#0f3 371px,#0f3 380px,#00ff4e 382px,#0f4 439px,#0f3 441px,#0f3 449px,#0f4 450px,#0f3 467px)"></i><i style="left:151px;background:linear-gradient(#00ff7d 1px,#00ff7d 18px,#6dff00 19px,#91ff00 21px,#8f0 27px,#29ff00 28px,#00ff27 29px,#00ff3c 30px,#0f2 34px,#0f2 62px,#00ff7d 72px,#00ff7e 98px,#00ff5c 103px,#00ff5e 106px,#00ff83 111px,#0f8 131px,#0f6 136px,#00ff6c 140px,#00ff8d 145px,#0fa 229px,#00ffb3 346px,#0f2 347px,#91ff00 348px,#91ff00 363px,#0f2 364px,#0f7 365px,#0f6 367px,#00ff61 424px,#0f4 426px,#0f5 439px,#00ff3b 441px,#00ff3c 449px,#0f5 451px,#0f4 467px)"></i><i style="left:152px;background:linear-gradient(#00ff71 1px,#00ff72 18px,#7f0 19px,#9f0 21px,#90ff00 27px,#3f0 28px,#0f2 29px,#0f3 30px,#0f2 34px,#0f2 71px,#0f7 81px,#0f7 98px,#0f5 103px,#0f5 106px,#00ff7c 111px,#00ff81 131px,#0f6 136px,#0f6 140px,#0f8 145px,#00ffb0 321px,#0fa 391px,#0f9 392px,#0f1 395px,#1f0 396px,#1f0 447px,#00ff0a 448px,#00ff4d 450px,#0f5 451px,#0f4 467px)"></i><i style="left:153px;background:linear-gradient(#00ff72 1px,#0f7 18px,#7f0 19px,#9f0 21px,#8fff00 27px,#2eff00 28px,#00ff1d 29px,#00ff2b 30px,#00ff0b 34px,#0f1 69px,#00ff1b 71px,#00ff72 77px,#00ff7c 79px,#00ff7f 98px,#00ff5e 103px,#00ff60 106px,#0f8 111px,#00ff8d 131px,#00ff6f 136px,#00ff72 140px,#00ff93 145px,#00ffaf 229px,#0fa 401px,#0f9 405px,#00ffa1 413px,#00ff8f 424px,#00ff5d 426px,#00ff5a 429px,#00ff72 431px,#0f6 439px,#0f4 441px,#0f4 449px,#0f5 450px,#0f4 467px)"></i><i style="left:154px;background:linear-gradient(#00ff6d 1px,#00ff70 18px,#7f0 19px,#9f0 21px,#91ff00 27px,#3f0 28px,#00ff1b 29px,#00ff2c 30px,#0f1 34px,#0f1 65px,#0f7 74px,#00ff7f 98px,#00ff5e 103px,#00ff61 106px,#0f8 111px,#00ff8e 131px,#00ff71 136px,#0f7 140px,#0f9 145px,#00ffb1 229px,#0fa 401px,#0f9 409px,#0fa 413px,#0fa 423px,#0fa 424px,#0f6 426px,#0f6 429px,#0f8 431px,#0f7 439px,#00ff3e 441px,#00ff39 449px,#0f5 450px,#00ff2d 467px)"></i><i style="left:155px;background:linear-gradient(#00ff6e 1px,#00ff71 18px,#7f0 19px,#9f0 21px,#90ff00 27px,#3f0 28px,#0f2 29px,#00ff39 30px,#00ff27 34px,#00ff28 43px,#0f0 47px,#1f0 49px,#0f0 50px,#00ff28 54px,#0f3 72px,#00ff7d 81px,#00ff82 98px,#00ff61 103px,#0f6 106px,#0f8 111px,#00ff92 131px,#0f7 136px,#0f7 140px,#0f9 145px,#00ffb0 229px,#0fa 386px,#0fa 401px,#0f9 405px,#0fa 424px,#0f6 426px,#0f6 429px,#00ff90 431px,#00ff8e 439px,#0f4 441px,#0f4 449px,#0f7 450px,#0f7 451px,#00ff72 458px,#00ff4f 460px,#00ff4e 467px)"></i><i style="left:156px;background:linear-gradient(#00ff7c 1px,#00ff7c 18px,#6eff00 19px,#91ff00 21px,#8f0 27px,#2aff00 28px,#0f2 29px,#0f3 30px,#00ff1c 33px,#00ff18 44px,#0f0 48px,#4f0 50px,#5f0 51px,#50ff00 52px,#0f0 55px,#00ff18 59px,#00ff18 78px,#0f7 87px,#00ff7d 98px,#00ff5c 102px,#00ff5b 105px,#00ff81 111px,#0f8 131px,#0f6 135px,#0f6 139px,#0f8 145px,#0fa 231px,#0fa 386px,#00ffa0 387px,#0f4 390px,#00ff3c 391px,#00ff38 439px,#0f4 449px,#0f7 450px,#0f7 451px,#0f7 458px,#00ff6c 459px,#00ff4a 460px,#00ff4a 467px)"></i><i style="left:157px;background:linear-gradient(#00ff72 1px,#0f7 18px,#7f0 19px,#9f0 21px,#8fff00 27px,#2eff00 28px,#00ff1c 29px,#00ff2a 30px,#00ff09 34px,#0f0 50px,#6f0 54px,#7f0 55px,#6f0 56px,#1f0 59px,#0f0 60px,#0f1 74px,#0f6 80px,#0f7 83px,#00ff7d 98px,#00ff5c 103px,#00ff5e 106px,#00ff83 111px,#0f8 131px,#00ff6c 136px,#00ff6f 140px,#00ff90 145px,#00ffa5 229px,#0fa 386px,#0fa 401px,#0f9 405px,#0fa 424px,#0f6 426px,#0f6 429px,#00ff91 431px,#00ff8f 439px,#00ff49 441px,#00ff4a 449px,#00ff7d 450px,#00ff7e 451px,#00ff7f 458px,#0f7 459px,#0f5 460px,#0f5 467px)"></i><i style="left:158px;background:linear-gradient(#00ff72 1px,#0f7 18px,#7f0 19px,#9f0 21px,#90ff00 27px,#3f0 28px,#0f2 29px,#0f3 30px,#0f2 34px,#0f2 51px,#0f1 54px,#06ff00 55px,#8f0 58px,#8dff00 59px,#72ff00 60px,#17ff00 62px,#00ff09 63px,#0f2 65px,#0f2 72px,#0f7 81px,#0f7 98px,#0f5 103px,#0f5 106px,#0f7 111px,#00ff81 131px,#0f6 135px,#0f6 139px,#0f8 145px,#00ff9f 229px,#0fa 399px,#00ff61 404px,#00ff6c 424px,#0f4 426px,#0f4 429px,#00ff8e 433px,#00ff94 439px,#00ff4b 441px,#00ff4c 449px,#00ff7f 450px,#00ff81 451px,#00ff81 458px,#0f7 459px,#0f5 460px,#0f5 467px)"></i><i style="left:159px;background:linear-gradient(#00ff60 1px,#00ff61 18px,#7f0 19px,#9f0 21px,#91ff00 27px,#3f0 28px,#00ff17 29px,#00ff2b 30px,#00ff17 34px,#00ff16 55px,#0f0 58px,#a3ff00 62px,#a4ff00 63px,#0f0 67px,#00ff16 70px,#00ff1b 81px,#0f6 90px,#0f6 98px,#00ff4b 102px,#00ff4b 105px,#0f6 111px,#00ff6f 131px,#0f5 135px,#0f5 139px,#0f7 145px,#00ff8d 218px,#0f6 265px,#0f6 399px,#00ff2b 404px,#0f3 424px,#0f1 426px,#0f1 429px,#00ff4c 434px,#00ff4c 439px,#0f1 441px,#0f1 449px,#00ff39 450px,#00ff3a 451px,#00ff39 458px,#0f1 460px,#0f1 467px)"></i><i style="left:160px;background:linear-gradient(#0f3 1px,#0f3 18px,#6fff00 19px,#92ff00 21px,#8f0 27px,#0f1 29px,#0f0 61px,#1f0 62px,#9eff00 65px,#bf0 66px,#bf0 67px,#3f0 70px,#0f0 78px,#00ff0b 84px,#0f3 93px,#00ff3a 214px,#00ff2d 223px,#0f0 234px,#b2ff00 255px,#e7ff00 267px,#e6ff00 424px,#ff0 426px,#ef0 431px,#ef0 439px,#ff0 441px,#ff0 467px)"></i><i style="left:161px;background:linear-gradient(#00ff3c 1px,#00ff3b 18px,#6fff00 19px,#93ff00 21px,#8f0 27px,#0f1 29px,#0f2 30px,#0f1 62px,#0f0 65px,#1bff00 66px,#bf0 69px,#d7ff00 70px,#df0 72px,#d7ff00 75px,#bf0 78px,#29ff00 85px,#00ff05 88px,#0f3 97px,#0f2 105px,#00ff38 111px,#00ff3a 131px,#00ff2a 139px,#00ff3b 145px,#0f4 215px,#00ff39 229px,#0f0 253px,#2f0 268px,#1f0 401px,#2f0 404px,#2f0 409px,#1f0 412px,#1f0 424px,#5f0 426px,#5f0 429px,#2cff00 431px,#2eff00 439px,#6eff00 441px,#6eff00 449px,#4f0 450px,#4f0 451px,#4f0 458px,#6f0 460px,#6f0 467px)"></i><i style="left:162px;background:linear-gradient(#0f5 1px,#0f5 18px,#7f0 19px,#9f0 21px,#91ff00 27px,#3f0 28px,#00ff16 29px,#00ff2d 30px,#0f2 34px,#0f2 66px,#00ff0c 69px,#1f0 70px,#ff0 82px,#fe0 87px,#ff0 92px,#4dff00 99px,#00ff08 104px,#0f4 110px,#0f6 122px,#00ff6c 131px,#0f5 136px,#00ff71 145px,#0f8 217px,#0f6 268px,#00ff6f 401px,#0f6 409px,#00ff6f 424px,#00ff38 426px,#0f3 429px,#00ff5a 431px,#0f5 439px,#00ff1d 441px,#00ff1d 449px,#0f4 450px,#0f4 451px,#0f4 458px,#0f2 460px,#0f2 467px)"></i><i style="left:163px;background:linear-gradient(#4fff00 1px,#50ff00 18px,#92ff00 21px,#8f0 27px,#5dff00 28px,#50ff00 29px,#5aff00 76px,#82ff00 84px,#ff0 93px,#fc0 104px,#ff0 116px,#8f0 120px,#5f0 123px,#5f0 214px,#7f0 227px,#ff0 247px,#fc0 269px,#fd0 291px,#fd0 467px)"></i><i style="left:164px;background:linear-gradient(#3aff00 1px,#38ff00 18px,#7f0 19px,#9f0 21px,#8fff00 27px,#3f0 29px,#3f0 90px,#60ff00 98px,#e9ff00 105px,#ff0 114px,#ff0 116px,#e3ff00 117px,#4f0 121px,#2f0 123px,#2f0 131px,#3aff00 135px,#3aff00 139px,#1dff00 144px,#1f0 161px,#0f0 229px,#0bff00 264px,#16ff00 265px,#72ff00 268px,#8f0 270px,#3f0 285px,#2f0 300px,#3f0 346px,#6f0 351px,#4f0 359px,#3f0 366px,#38ff00 401px,#4f0 409px,#3bff00 424px,#7f0 426px,#7f0 429px,#5f0 431px,#5f0 439px,#94ff00 441px,#9f0 449px,#6f0 450px,#6f0 451px,#6f0 458px,#90ff00 460px,#91ff00 467px)"></i><i style="left:165px;background:linear-gradient(#fe0 1px,#fe0 256px,#fd0 265px,#fb0 267px,#ff7e00 269px,#ff6f00 271px,#ff7000 277px,#f90 291px,#f60 320px,#ff7100 321px,#ff6b00 325px,#ff7e00 326px,#f70 349px,#ff6c00 353px,#ff8f00 377px,#ffb600 378px,#fb0 382px,#f90 383px,#ff9400 390px,#f90 411px,#fb0 412px,#ffc500 418px,#ffc500 422px,#fa0 423px,#fa0 451px,#fb0 452px,#fb0 456px,#fc0 457px,#ffd600 467px)"></i><i style="left:166px;background:linear-gradient(#ff0 1px,#fe0 256px,#ffe500 265px,#ff9100 276px,#ff7000 284px,#f70 306px,#f50 325px,#f70 326px,#ff6b00 348px,#ff8000 349px,#f60 361px,#ff8200 377px,#fa0 386px,#f90 388px,#f70 389px,#f70 391px,#ff8d00 398px,#f90 417px,#fb0 418px,#fb0 428px,#f90 429px,#f90 456px,#fb0 457px,#fc0 467px)"></i><i style="left:167px;background:linear-gradient(#fe0 1px,#fe0 257px,#fc0 275px,#ff6e00 298px,#f70 301px,#f60 304px,#f80 311px,#f60 331px,#f80 332px,#f70 354px,#ff9200 355px,#f60 370px,#f80 382px,#f90 383px,#ffa400 386px,#ff9000 388px,#f50 391px,#ff5000 392px,#f90 402px,#ffa300 417px,#fb0 418px,#fb0 422px,#fc0 423px,#fb0 434px,#fa0 435px,#fa0 456px,#ffb200 462px,#fc0 463px,#fc0 467px)"></i><i style="left:168px;background:linear-gradient(#9f0 1px,#afff00 231px,#c2ff00 257px,#ff0 271px,#f90 302px,#ff5f00 305px,#ff7e00 313px,#ff5d00 331px,#f70 332px,#ff7000 337px,#ff8200 338px,#ff7c00 354px,#ff8300 360px,#ff9300 361px,#f60 378px,#ff8000 389px,#f50 392px,#f40 395px,#f50 399px,#f90 408px,#ffa500 422px,#fc0 423px,#ffd500 429px,#ffd500 434px,#fb0 435px,#fb0 439px,#fa0 440px,#fa0 462px,#ffc200 463px,#ffc200 467px)"></i><i style="left:169px;background:linear-gradient(#cf0 1px,#df0 222px,#ff0 261px,#fb0 296px,#fa0 302px,#ff5e00 309px,#ff6d00 316px,#ff4f00 337px,#f70 338px,#f70 360px,#f90 361px,#ff6b00 386px,#f60 396px,#f40 402px,#f50 406px,#ff9400 415px,#ffb200 428px,#fc0 429px,#fc0 439px,#ffaf00 440px,#ffaf00 467px)"></i><i style="left:170px;background:linear-gradient(#ff0 1px,#ffe600 259px,#f90 302px,#ff5f00 312px,#ff4b00 337px,#ff4d00 342px,#ff6f00 343px,#f70 365px,#fa0 366px,#fa0 371px,#ff9000 372px,#f60 402px,#f40 409px,#ff9200 421px,#ffa500 428px,#ffc100 429px,#ffc300 434px,#ffd600 435px,#fc0 445px,#ffb300 446px,#fb0 467px)"></i><i style="left:171px;background:linear-gradient(#ffe400 1px,#ffe900 262px,#ffb200 306px,#f90 310px,#ff5f00 316px,#f70 324px,#f60 342px,#f80 343px,#f80 365px,#f90 366px,#ffa400 375px,#ff7c00 399px,#f80 400px,#f40 415px,#f90 429px,#ff9f00 434px,#ffc200 435px,#fc0 445px,#ffb400 446px,#ffb300 451px,#ffa100 452px,#ff9f00 467px)"></i><i style="left:172px;background:linear-gradient(#ffe200 1px,#ffd400 257px,#ffc200 280px,#f80 303px,#f80 311px,#f50 322px,#f40 346px,#f40 348px,#f60 349px,#f60 371px,#f90 372px,#f90 377px,#ff8100 378px,#f80 406px,#f40 421px,#ff8100 434px,#f90 435px,#ffa100 439px,#fb0 440px,#fb0 451px,#f90 452px,#f90 467px)"></i><i style="left:173px;background:linear-gradient(#fd0 1px,#fd0 263px,#fc0 280px,#f90 303px,#ffa100 304px,#ff9200 313px,#ff6000 322px,#ff5000 347px,#ff5000 348px,#ff7200 349px,#f80 377px,#fa0 378px,#fa0 382px,#f90 383px,#f90 405px,#fb0 406px,#ffb100 411px,#f70 418px,#f40 428px,#f50 432px,#ff8e00 439px,#ffb500 440px,#ffd100 446px,#ffc600 456px,#ffaf00 457px,#ffb100 467px)"></i><i style="left:174px;background:linear-gradient(#ffe200 1px,#fc0 263px,#fb0 285px,#fa0 286px,#ff7f00 305px,#f70 319px,#ff6100 325px,#ff5000 326px,#f40 345px,#f40 354px,#f60 355px,#f60 377px,#ff9400 378px,#ff9400 382px,#f80 383px,#ff8300 405px,#f90 406px,#f90 411px,#ffb200 412px,#fa0 417px,#f80 418px,#f40 434px,#f50 439px,#f80 445px,#fa0 446px,#fb0 450px,#fb0 456px,#fa0 457px,#f90 467px)"></i><i style="left:175px;background:linear-gradient(#fd0 1px,#ffe400 161px,#ffd700 263px,#fc0 285px,#ff9000 307px,#f90 309px,#f80 322px,#ff5a00 332px,#ff5000 347px,#ff5000 354px,#ff6d00 355px,#f70 361px,#ff7e00 382px,#ffb100 383px,#ffb100 388px,#ff8e00 389px,#ff8e00 411px,#fb0 412px,#ffb000 422px,#ff9300 423px,#ff8200 430px,#f40 441px,#f50 445px,#fa0 452px,#fb0 455px,#fb0 462px,#f90 463px,#ff9e00 467px)"></i><i style="left:176px;background:linear-gradient(#ffd500 1px,#ffd600 268px,#fc0 291px,#ffb400 292px,#f90 303px,#f80 323px,#ff6000 332px,#f50 348px,#f50 360px,#ff7c00 361px,#f70 382px,#fa0 383px,#fa0 394px,#f90 395px,#f90 411px,#fa0 412px,#fa0 417px,#ffc700 418px,#ffc700 422px,#fa0 423px,#ff9000 435px,#f40 447px,#f50 451px,#fb0 459px,#fb0 467px)"></i><i style="left:177px;background:linear-gradient(#fe0 1px,#fe0 263px,#ffd100 291px,#f90 305px,#ff8100 328px,#f50 338px,#ff4d00 347px,#ff4d00 360px,#ff6f00 361px,#ff7f00 388px,#ffc000 389px,#ffc100 394px,#ff9200 395px,#ff9300 417px,#ffc000 418px,#ffc200 428px,#f90 429px,#ff9000 441px,#f50 450px,#f40 454px,#f50 457px,#ffc600 467px)"></i><i style="left:178px;background:linear-gradient(#cf0 1px,#df0 161px,#fffa00 258px,#fc0 297px,#fa0 298px,#ff9000 305px,#ff7200 320px,#f80 321px,#f60 342px,#f40 343px,#f40 345px,#ff4a00 365px,#f80 366px,#f80 371px,#f70 372px,#f70 388px,#ffb200 389px,#fb0 399px,#f90 400px,#f90 417px,#fb0 418px,#fb0 422px,#ffd700 423px,#ffd800 428px,#fb0 429px,#ffc000 434px,#fa0 435px,#fa0 444px,#ff8f00 452px,#ff5f00 456px,#f40 461px,#ff5c00 464px,#fb0 467px)"></i><i style="left:179px;background:linear-gradient(#00ff09 1px,#00ff09 18px,#71ff00 19px,#94ff00 21px,#8dff00 27px,#1f0 29px,#00ff08 30px,#0f0 221px,#4f0 231px,#ff0 251px,#fd0 264px,#fc0 297px,#fb0 303px,#f90 304px,#ff9200 307px,#ff7c00 320px,#ff9400 321px,#f70 342px,#ff4d00 343px,#ff4c00 365px,#f70 366px,#f70 388px,#f80 389px,#f80 394px,#ffc600 395px,#ffc600 399px,#ff9200 400px,#ff9200 422px,#ffc300 423px,#ffc700 429px,#ffc700 434px,#f90 435px,#f90 450px,#f80 456px,#ffa300 457px,#f50 464px,#f50 465px,#ff9200 467px)"></i><i style="left:180px;background:linear-gradient(#ef0 1px,#cf0 226px,#df0 256px,#ff0 276px,#fd0 303px,#fb0 304px,#fb0 308px,#fa0 309px,#ff8e00 325px,#fa0 326px,#f80 341px,#ff8e00 348px,#ff5c00 349px,#f50 371px,#ffa000 372px,#ff9f00 377px,#ff8200 378px,#ff7e00 394px,#fb0 395px,#fb0 405px,#f90 406px,#f90 422px,#ffb600 423px,#ffb500 428px,#ffd200 429px,#ffd100 434px,#fb0 435px,#fb0 439px,#f90 440px,#ff9400 456px,#ffb100 457px,#f90 462px,#ffb000 463px,#ff9e00 465px,#fa0 467px)"></i><i style="left:181px;background:linear-gradient(#fff600 1px,#ffe700 265px,#fb0 308px,#f80 309px,#ff7100 323px,#ff6e00 325px,#f90 326px,#ff9100 331px,#f70 332px,#ff7200 348px,#ff4a00 349px,#ff4c00 371px,#f80 372px,#f80 377px,#f70 378px,#f70 394px,#ff9400 395px,#f90 399px,#fc0 400px,#fc0 405px,#f90 406px,#f90 412px,#f90 428px,#fc0 429px,#fc0 439px,#ffa400 440px,#fa0 462px,#fc0 463px,#fc0 467px)"></i><i style="left:182px;background:linear-gradient(#90ff00 1px,#9f0 21px,#6dff00 238px,#82ff00 263px,#a0ff00 273px,#e6ff00 287px,#fd0 288px,#fc0 308px,#fa0 309px,#ffa500 314px,#ff9300 315px,#f70 331px,#f90 332px,#ff8300 348px,#f90 351px,#f90 354px,#f50 355px,#f50 371px,#f60 372px,#f60 377px,#fa0 378px,#fa0 382px,#f80 383px,#f80 399px,#ffd300 400px,#fc0 411px,#fa0 412px,#ffa400 428px,#fc0 429px,#fc0 434px,#fe0 435px,#fe0 439px,#fc0 440px,#fc0 445px,#fa0 446px,#fa0 462px,#fc0 463px,#fc0 467px)"></i><i style="left:183px;background:linear-gradient(#0f1 1px,#0f1 18px,#7f0 19px,#9f0 21px,#94ff00 27px,#1f0 29px,#00ff0b 30px,#0f1 214px,#0f0 223px,#3f0 231px,#ff0 251px,#fd0 265px,#fd0 291px,#ffc100 314px,#ff8d00 315px,#f70 331px,#ffb100 332px,#fa0 337px,#ff8100 338px,#f70 354px,#ff5000 355px,#ff4e00 377px,#ffa200 378px,#ffa200 382px,#f70 383px,#f70 399px,#ffa400 400px,#ffa400 405px,#fc0 406px,#fc0 411px,#ff9300 412px,#ff8f00 418px,#f90 434px,#fc0 435px,#fc0 445px,#f90 446px,#ff9200 462px,#ffa300 463px,#ffa300 467px)"></i><i style="left:184px;background:linear-gradient(#fff800 1px,#fe0 268px,#fc0 314px,#ff9f00 315px,#f70 331px,#f80 332px,#ff7f00 354px,#f80 360px,#f50 361px,#f50 377px,#ff8100 378px,#ff8100 382px,#f90 383px,#f90 388px,#ff7c00 389px,#ff8100 405px,#fc0 406px,#fb0 417px,#f90 418px,#f90 434px,#ffc500 435px,#ffc500 439px,#ffd300 440px,#fb0 451px,#f90 452px,#f90 467px)"></i><i style="left:185px;background:linear-gradient(#f3ff00 1px,#fffa00 236px,#ffe900 291px,#ffc500 320px,#ff8d00 321px,#f70 337px,#ffc100 338px,#ffc000 342px,#f80 343px,#f80 360px,#f50 361px,#f50 382px,#ffc000 383px,#ffc000 388px,#ff8200 389px,#ff8100 405px,#ffc100 406px,#ffc100 411px,#fc0 412px,#fc0 417px,#f90 418px,#f90 434px,#fb0 435px,#fb0 439px,#ffd500 440px,#fc0 451px,#ffa200 452px,#ffa000 467px)"></i><i style="left:186px;background:linear-gradient(#f5ff00 1px,#fff800 240px,#ffe400 297px,#fc0 304px,#ffd300 320px,#ff8d00 321px,#ff7d00 328px,#f70 337px,#fa0 338px,#fa0 342px,#ff8300 343px,#f80 365px,#f50 366px,#f50 382px,#fa0 383px,#fa0 388px,#ff9300 389px,#ff9300 394px,#ff8100 395px,#ff8000 405px,#fa0 406px,#fa0 411px,#ffd600 412px,#ffd600 417px,#fb0 418px,#fb0 422px,#f90 423px,#ffa200 439px,#ffd300 440px,#ffd800 446px,#ffd800 451px,#fb0 452px,#fb0 456px,#ffa500 457px,#ffa500 467px)"></i><i style="left:187px;background:linear-gradient(#fe0 1px,#fff800 259px,#fc0 320px,#ffb600 325px,#ff7d00 326px,#ff6f00 337px,#f70 342px,#ffb200 343px,#ffb100 348px,#ff7d00 349px,#ff7d00 360px,#ffa500 361px,#ffa500 365px,#f50 366px,#f50 382px,#ff7c00 383px,#ff7c00 388px,#fb0 389px,#fb0 394px,#f70 395px,#f70 411px,#fc0 412px,#fc0 422px,#ff9400 423px,#ff9300 439px,#ffc400 440px,#ffd400 451px,#ffc700 456px,#f90 457px,#f90 467px)"></i><i style="left:188px;background:linear-gradient(#fe0 1px,#fe0 226px,#fd0 303px,#ffc500 309px,#ffc600 325px,#f70 326px,#f60 341px,#f60 342px,#fb0 343px,#fb0 348px,#f70 349px,#f70 365px,#ff6b00 366px,#ff6b00 371px,#ff5000 372px,#ff5000 388px,#fb0 389px,#fb0 394px,#f70 395px,#f70 411px,#fb0 412px,#fb0 417px,#fc0 418px,#fc0 422px,#fa0 423px,#fa0 428px,#ff9200 429px,#ff9100 439px,#ffb300 440px,#ffb200 445px,#fc0 446px,#fc0 456px,#fa0 457px,#f90 467px)"></i><i style="left:189px;background:linear-gradient(#fd0 1px,#fe0 161px,#ffd200 303px,#fc0 308px,#fb0 309px,#ffc200 325px,#ff9300 326px,#ff8e00 331px,#f60 332px,#f60 337px,#ff6000 342px,#f90 343px,#ff8d00 354px,#ff7100 355px,#ff7100 365px,#f90 366px,#f90 371px,#ff4b00 372px,#ff4b00 388px,#f90 389px,#f90 399px,#ff6f00 400px,#ff6e00 411px,#f90 412px,#f90 417px,#ffc400 418px,#fb0 428px,#f80 429px,#ff8e00 445px,#ffc100 446px,#ffc700 452px,#ffb600 462px,#ff8e00 463px,#ff8e00 467px)"></i><i style="left:190px;background:linear-gradient(#ffe200 1px,#ffe600 224px,#ffd400 303px,#fb0 331px,#ff6d00 332px,#f60 339px,#f60 342px,#ff7c00 343px,#f70 348px,#fb0 349px,#fb0 354px,#f70 355px,#f70 365px,#fa0 366px,#fa0 371px,#f50 372px,#f50 388px,#f80 389px,#f80 394px,#ffc200 395px,#ffc200 399px,#ff7c00 400px,#ff8200 417px,#fc0 418px,#fc0 428px,#f90 429px,#f90 445px,#fc0 446px,#ffd600 456px,#fc0 462px,#ffa400 463px,#ffa400 467px)"></i><i style="left:191px;background:linear-gradient(#fe0 1px,#fd0 308px,#fc0 315px,#fc0 331px,#f70 332px,#ff6b00 345px,#f60 348px,#ffc700 349px,#ffc600 354px,#ff7d00 355px,#f80 377px,#f50 378px,#ff5d00 394px,#ffc100 395px,#ffc100 399px,#f80 400px,#f80 405px,#f70 406px,#ff7200 417px,#fb0 418px,#fb0 422px,#fc0 423px,#fc0 428px,#fa0 429px,#fa0 434px,#f80 435px,#f80 445px,#ffb200 446px,#ffb200 451px,#fc0 452px,#ffc700 462px,#fa0 463px,#fa0 467px)"></i><i style="left:192px;background:linear-gradient(#fd0 1px,#ffe600 224px,#ffd300 308px,#fc0 314px,#fb0 315px,#ffc700 331px,#ff9f00 332px,#f90 337px,#f60 338px,#f60 341px,#ff6100 348px,#ffb200 349px,#ff9e00 360px,#f70 361px,#f70 371px,#fa0 372px,#fa0 377px,#ff4f00 378px,#ff4f00 394px,#fb0 395px,#ffaf00 405px,#f70 406px,#f70 417px,#ffb000 418px,#ffb000 422px,#fc0 423px,#ffc300 434px,#ff9100 435px,#ff9100 445px,#fa0 446px,#fa0 451px,#fc0 452px,#ffc400 467px)"></i><i style="left:193px;background:linear-gradient(#fe0 1px,#fd0 230px,#fc0 314px,#ffaf00 321px,#ffb100 337px,#f50 338px,#f50 343px,#f50 348px,#f80 349px,#f80 354px,#ffb200 355px,#ffb200 360px,#f60 361px,#f60 371px,#fa0 372px,#fa0 377px,#ff4b00 378px,#f40 383px,#f40 394px,#f90 395px,#f90 399px,#fb0 400px,#fb0 405px,#f60 406px,#f60 417px,#f80 418px,#f80 422px,#ffc300 423px,#ffc300 434px,#f80 435px,#f80 440px,#f80 451px,#ffc100 452px,#ffc300 467px)"></i><i style="left:194px;background:linear-gradient(#ff0 1px,#fe0 226px,#fc0 314px,#ffb200 325px,#ffc300 337px,#ff5d00 338px,#f50 346px,#f60 354px,#ffc500 355px,#ffc500 360px,#ff6e00 361px,#ff6f00 371px,#f90 372px,#f90 377px,#f80 378px,#f80 382px,#ff4a00 383px,#ff4b00 394px,#f80 395px,#f80 399px,#fc0 400px,#fc0 405px,#f80 406px,#f80 411px,#f70 412px,#f70 422px,#fc0 423px,#ffd100 434px,#fb0 435px,#fb0 439px,#ff9200 440px,#ff9300 451px,#ffc700 452px,#ffd400 467px)"></i><i style="left:195px;background:linear-gradient(#fd0 1px,#fff500 161px,#fe0 255px,#ffd400 314px,#fc0 320px,#fb0 321px,#fb0 330px,#fc0 332px,#fc0 337px,#f90 338px,#f90 342px,#ff6100 343px,#ff6100 347px,#ff6100 354px,#ffc600 355px,#ffc700 360px,#f90 361px,#ff9e00 365px,#f70 366px,#ff8000 377px,#ffb500 378px,#ffb500 382px,#ff5000 383px,#ff5000 394px,#f60 395px,#f60 399px,#fc0 400px,#ffb600 411px,#f70 412px,#ff7c00 422px,#fc0 423px,#fc0 428px,#ffd800 429px,#fc0 439px,#f90 440px,#f90 451px,#ffc400 452px,#ffc500 456px,#fd0 457px,#fd0 467px)"></i><i style="left:196px;background:linear-gradient(#fff400 1px,#ffe300 235px,#fc0 320px,#fb0 321px,#ffaf00 331px,#ffc300 332px,#ffc200 337px,#ffb300 338px,#ffb300 342px,#ff5b00 343px,#ff5a00 346px,#ff5b00 354px,#ffb500 355px,#ffb500 365px,#ff6f00 366px,#ff7000 377px,#fb0 378px,#fb0 382px,#ff4b00 383px,#ff4c00 399px,#fb0 400px,#ffc000 411px,#f70 412px,#f70 422px,#fb0 423px,#fb0 428px,#fc0 429px,#fc0 439px,#ff9000 440px,#ff9000 451px,#fa0 452px,#fa0 456px,#fc0 457px,#ffd100 467px)"></i><i style="left:197px;background:linear-gradient(#fd0 1px,#fd0 224px,#ffc700 320px,#fb0 325px,#fa0 326px,#fb0 342px,#f50 343px,#f50 346px,#f50 354px,#ffa100 355px,#ffa100 360px,#ffc000 361px,#ffc000 365px,#ff6e00 366px,#ff6f00 377px,#fb0 378px,#fb0 382px,#f70 383px,#f70 388px,#ff4c00 389px,#ff4d00 399px,#ffb200 400px,#ffb300 405px,#ffc700 406px,#ffc700 411px,#f70 412px,#f70 422px,#ffa500 423px,#ffa500 428px,#fc0 429px,#fc0 439px,#fa0 440px,#fa0 445px,#ff9200 446px,#ff9200 451px,#f90 456px,#fc0 457px,#ffd200 467px)"></i><i style="left:198px;background:linear-gradient(#fd0 1px,#fd0 231px,#ffc700 320px,#ffc200 325px,#fa0 326px,#fa0 331px,#ffc300 342px,#ff7000 343px,#ff6f00 348px,#f50 349px,#f50 354px,#ff8300 355px,#f80 360px,#ffc500 361px,#ffc500 365px,#ff7200 366px,#ff6b00 377px,#fa0 378px,#f90 388px,#f40 389px,#ff4900 399px,#ffa000 400px,#ffa000 405px,#fc0 406px,#fc0 411px,#f90 412px,#f90 417px,#ff6f00 418px,#ff7000 422px,#f80 423px,#f80 428px,#fc0 429px,#fc0 439px,#fb0 440px,#fb0 445px,#ff8e00 446px,#ff8f00 456px,#fc0 457px,#ffd100 467px)"></i><i style="left:199px;background:linear-gradient(#ffe800 1px,#ffe300 231px,#ffc300 325px,#fa0 326px,#ffa400 337px,#ffc300 338px,#ffc300 342px,#f90 343px,#f90 348px,#f50 349px,#ff5b00 360px,#ffc100 361px,#ffc100 365px,#f90 366px,#f90 371px,#f60 372px,#f60 377px,#ff9100 378px,#ff9200 382px,#ffb000 383px,#ffb100 388px,#f40 389px,#f40 399px,#ff8300 400px,#f80 405px,#ffc300 406px,#fa0 417px,#f60 418px,#f60 428px,#ffc300 429px,#ffc100 445px,#f80 446px,#f80 456px,#ffc000 457px,#fc0 467px)"></i><i style="left:200px;background:linear-gradient(#fff300 1px,#fd0 246px,#ffd100 325px,#fb0 326px,#ffb600 337px,#fc0 338px,#fc0 342px,#fb0 343px,#fb0 348px,#ff6000 349px,#ff5f00 360px,#ffc700 361px,#fb0 371px,#ff7100 372px,#ff7f00 382px,#ffc300 383px,#ffc300 388px,#ff4b00 389px,#ff4a00 399px,#ff6f00 400px,#ff6f00 405px,#ffc600 406px,#ffc000 417px,#ff6d00 418px,#ff6c00 428px,#ffc100 429px,#ffc500 445px,#f80 446px,#f80 456px,#fb0 457px,#ffc600 467px)"></i><i style="left:201px;background:linear-gradient(#fd0 1px,#fe0 225px,#ffd300 325px,#fb0 337px,#fc0 338px,#fc0 342px,#fc0 348px,#ff6100 349px,#ff6100 360px,#ffc700 361px,#fc0 371px,#f70 372px,#f70 382px,#fc0 383px,#fc0 388px,#f70 389px,#f70 394px,#ff4d00 395px,#f50 405px,#fc0 406px,#fc0 417px,#f70 418px,#f70 428px,#ffc300 429px,#fc0 445px,#fa0 446px,#fa0 451px,#ff8d00 452px,#ff8d00 456px,#fb0 457px,#fc0 467px)"></i><i style="left:202px;background:linear-gradient(#fffa00 1px,#ffe700 237px,#fc0 325px,#ffc300 331px,#fa0 332px,#fa0 337px,#ffc200 338px,#ffc600 348px,#f50 349px,#f50 360px,#fb0 361px,#fc0 366px,#fc0 371px,#ff6b00 372px,#ff6c00 382px,#ffc700 383px,#ffc700 388px,#f90 389px,#f90 394px,#ff4900 395px,#ff4a00 405px,#ffc500 406px,#fc0 417px,#f80 418px,#f80 422px,#ff7200 423px,#ff7200 428px,#fb0 429px,#fb0 434px,#ffd200 435px,#ffd300 445px,#fb0 446px,#fb0 451px,#ff9100 452px,#ff9200 456px,#ffb100 457px,#ffb100 462px,#ffd400 463px,#ffd400 467px)"></i><i style="left:203px;background:linear-gradient(#fe0 1px,#fd0 244px,#ffc200 331px,#fa0 332px,#ffa500 337px,#fb0 338px,#ffc400 348px,#ff8100 349px,#ff8200 354px,#f50 355px,#f50 360px,#fa0 361px,#fa0 365px,#ffc600 366px,#ffc700 371px,#ff7f00 372px,#ff8000 377px,#f60 378px,#f60 382px,#ffc000 383px,#ffc100 388px,#ffb100 389px,#ffb200 394px,#f40 395px,#ff4900 405px,#fb0 406px,#fc0 412px,#fc0 417px,#fa0 418px,#fa0 422px,#ff7000 423px,#ff7000 428px,#fa0 429px,#ffaf00 434px,#fc0 435px,#ffc500 451px,#ff8e00 452px,#f90 462px,#fc0 463px,#fc0 467px)"></i><i style="left:204px;background:linear-gradient(#ffe300 1px,#fd0 228px,#ffc000 331px,#ffa200 332px,#ffa100 337px,#fa0 342px,#ffc000 343px,#ffc000 348px,#f90 349px,#f90 354px,#f50 355px,#f50 360px,#f90 361px,#f90 365px,#ffc100 366px,#ffc100 371px,#f90 372px,#f90 377px,#f60 378px,#f60 382px,#ffb500 383px,#fb0 394px,#f40 395px,#f40 405px,#ffb000 406px,#ffb000 411px,#ffc300 412px,#ffb100 422px,#f60 423px,#f60 428px,#ff9400 429px,#ff9400 434px,#ffc400 435px,#ffc000 451px,#ff8300 452px,#f80 462px,#ffc400 463px,#ffc400 467px)"></i><i style="left:205px;background:linear-gradient(#fd0 1px,#fe0 243px,#fd0 331px,#ffc600 332px,#ffc400 337px,#ffc400 342px,#fd0 343px,#fd0 348px,#fc0 349px,#fc0 354px,#ff7000 355px,#ff6e00 360px,#fa0 361px,#ffa500 365px,#ffd800 366px,#ffd700 371px,#ffc600 372px,#ffc500 377px,#ff7e00 378px,#ff7d00 382px,#ffc300 383px,#fc0 394px,#f50 395px,#ff5000 405px,#fb0 406px,#fb0 411px,#fc0 412px,#ffc600 422px,#f70 423px,#f70 428px,#f80 429px,#f80 434px,#fc0 435px,#fc0 451px,#f80 452px,#f80 462px,#ffc500 463px,#ffc500 467px)"></i><i style="left:206px;background:linear-gradient(#ffe900 1px,#ffe300 247px,#ffd300 331px,#ffc000 332px,#fb0 342px,#ffd200 343px,#ffd200 348px,#fc0 354px,#f60 355px,#f60 360px,#f80 361px,#f80 365px,#ffd200 366px,#fc0 377px,#f70 378px,#f70 382px,#fb0 383px,#fb0 388px,#fc0 389px,#fc0 394px,#f60 395px,#f60 399px,#ff4f00 400px,#ff4f00 405px,#ffb300 406px,#ffb300 411px,#ffd200 412px,#fc0 422px,#f70 423px,#f70 434px,#ffd200 435px,#ffd200 451px,#f90 452px,#ff9200 457px,#ff9200 462px,#fc0 463px,#fc0 467px)"></i><i style="left:207px;background:linear-gradient(#fd0 1px,#fe0 247px,#ffe700 331px,#fc0 342px,#ffe400 343px,#ffe300 348px,#fd0 354px,#f70 355px,#f70 360px,#ff8100 365px,#fd0 366px,#fd0 377px,#f80 378px,#f80 382px,#fb0 383px,#fb0 388px,#fd0 389px,#fd0 394px,#f90 395px,#f90 399px,#ff5b00 400px,#ff5a00 405px,#ffb500 406px,#ffb400 411px,#fd0 412px,#ffd600 422px,#ff8000 423px,#ff7e00 434px,#ffd500 435px,#ffd400 451px,#ffaf00 452px,#fa0 456px,#ff9400 457px,#ff9300 462px,#fc0 463px,#fc0 467px)"></i><i style="left:208px;background:linear-gradient(#fe0 1px,#fd0 239px,#fc0 331px,#fa0 341px,#fa0 342px,#fc0 343px,#fc0 354px,#ff5a00 355px,#ff5b00 365px,#fc0 366px,#fc0 377px,#ff7100 378px,#ff7100 382px,#ff9400 383px,#ff9400 388px,#fc0 389px,#fc0 394px,#f90 395px,#f90 399px,#ff4d00 400px,#ff4d00 405px,#f90 406px,#f90 411px,#fc0 412px,#fc0 422px,#f70 423px,#f70 434px,#fc0 435px,#ffd200 451px,#fb0 452px,#fb0 456px,#ff9300 457px,#ff9400 462px,#fc0 463px,#fc0 467px)"></i><i style="left:209px;background:linear-gradient(#4bff00 1px,#4aff00 18px,#7f0 19px,#9f0 21px,#8fff00 27px,#5eff00 28px,#4aff00 29px,#49ff00 215px,#7f0 228px,#ff0 247px,#fd0 267px,#fd0 331px,#ffd400 337px,#fb0 338px,#fb0 342px,#ffd800 343px,#ffd800 354px,#ff6000 355px,#ff6000 365px,#ffd700 366px,#ffd800 377px,#f70 378px,#f70 382px,#f80 383px,#f80 388px,#fd0 389px,#fd0 394px,#fb0 395px,#fb0 399px,#ff4c00 400px,#ff4c00 405px,#ff8f00 406px,#ff8f00 411px,#ffd800 412px,#ffd800 422px,#ff8f00 423px,#ff8f00 428px,#f70 429px,#f70 434px,#ffd500 435px,#fd0 451px,#ffc600 452px,#ffc600 456px,#ff9100 457px,#ff9100 462px,#fc0 463px,#fc0 467px)"></i><i style="left:210px;background:linear-gradient(#ff0 1px,#ffe600 161px,#fe0 255px,#ffd600 331px,#ffd200 337px,#fb0 338px,#fb0 342px,#ffd300 343px,#ffd400 354px,#f70 355px,#f70 360px,#ff5d00 361px,#ff5d00 365px,#ffd100 366px,#ffd300 377px,#ff7100 378px,#ff7000 388px,#ffd200 389px,#ffd200 394px,#fb0 395px,#fb0 399px,#ff4900 400px,#ff4900 405px,#f70 406px,#f70 411px,#ffd100 412px,#ffd100 422px,#f90 423px,#f90 428px,#ff6e00 429px,#ff6e00 434px,#fc0 435px,#ffc400 456px,#f80 457px,#f80 462px,#ffc400 463px,#ffc400 467px)"></i><i style="left:211px;background:linear-gradient(#fe0 1px,#fff800 224px,#ffd300 337px,#fb0 338px,#fb0 342px,#ffd300 343px,#ffd600 354px,#f90 355px,#f90 360px,#f60 361px,#f60 365px,#ffd500 366px,#fd0 377px,#f80 378px,#ff8100 388px,#fd0 389px,#fd0 394px,#fc0 395px,#fc0 399px,#f50 400px,#ff5a00 405px,#ff8300 406px,#f80 411px,#fd0 412px,#fd0 422px,#ffc000 423px,#ffc100 428px,#f80 429px,#f80 434px,#fd0 435px,#fd0 456px,#fa0 457px,#fa0 462px,#ffd800 463px,#ffd800 467px)"></i><i style="left:212px;background:linear-gradient(#ffe900 1px,#fe0 225px,#fc0 337px,#fa0 338px,#fa0 342px,#ffc700 343px,#fc0 354px,#ff9200 355px,#ff9300 360px,#f50 361px,#f50 365px,#ffc700 366px,#fc0 377px,#f80 378px,#f80 382px,#f60 383px,#f60 388px,#fc0 389px,#fc0 394px,#ffc000 399px,#f40 400px,#ff5f00 411px,#fc0 412px,#fc0 422px,#ffb300 423px,#ffb300 428px,#ff6d00 429px,#ff6e00 434px,#fc0 435px,#fc0 456px,#f80 457px,#f80 462px,#ffc100 463px,#ffc100 467px)"></i><i style="left:213px;background:linear-gradient(#fff900 1px,#ff0 234px,#fd0 337px,#fb0 338px,#fb0 342px,#ffd600 343px,#fd0 354px,#ffb000 355px,#ffb000 360px,#f60 361px,#f60 365px,#ffd500 366px,#fd0 377px,#ffa400 378px,#ffa400 382px,#f70 383px,#f70 388px,#fd0 389px,#fd0 394px,#fc0 399px,#ff5000 400px,#f60 411px,#ffd800 412px,#fd0 422px,#ffc500 423px,#ffc500 428px,#f70 429px,#f70 434px,#ffd300 435px,#ffd500 456px,#f90 457px,#f90 462px,#fc0 463px,#fc0 467px)"></i><i style="left:214px;background:linear-gradient(#fff300 1px,#ffe900 244px,#ffd100 337px,#ffb400 338px,#ffb400 342px,#fc0 343px,#ffd400 354px,#ffb000 355px,#ffb100 360px,#ff5e00 361px,#ff5f00 365px,#ffd100 366px,#ffd800 377px,#fa0 378px,#fa0 382px,#f70 383px,#f70 388px,#ffd800 389px,#fd0 394px,#ffd200 399px,#f50 400px,#ff5e00 411px,#fd0 412px,#fd0 422px,#fc0 423px,#fc0 428px,#ff8200 429px,#ff8300 434px,#fd0 435px,#fd0 456px,#ffa500 457px,#fa0 462px,#ffd200 463px,#ffd200 467px)"></i><i style="left:215px;background:linear-gradient(#fff700 1px,#fe0 240px,#fc0 337px,#ffb300 338px,#ffb200 342px,#fc0 343px,#fc0 354px,#ffb100 355px,#ffb100 360px,#ff5a00 361px,#ff5b00 365px,#fc0 366px,#ffd100 377px,#fa0 378px,#fa0 382px,#ff6f00 383px,#ff6f00 388px,#fc0 389px,#fc0 394px,#fc0 399px,#ff4900 400px,#ff4d00 411px,#fc0 412px,#ffc100 428px,#ff7000 429px,#ff7000 434px,#fc0 435px,#fc0 456px,#ff8d00 457px,#ff8d00 462px,#fb0 463px,#fb0 467px)"></i><i style="left:216px;background:linear-gradient(#fffa00 1px,#fff400 237px,#ffd400 337px,#fb0 338px,#ffb600 342px,#fc0 343px,#ffd400 354px,#fb0 355px,#fb0 360px,#ff5d00 361px,#ff5d00 365px,#fc0 366px,#ffd500 377px,#fa0 378px,#fa0 382px,#f70 383px,#f70 388px,#ffd300 389px,#ffd300 394px,#fc0 399px,#ff4c00 400px,#ff4d00 411px,#ffd300 412px,#ffc600 428px,#f70 429px,#f70 434px,#fc0 435px,#ffd300 456px,#ff9100 457px,#ff9200 462px,#ffc100 463px,#ffc100 467px)"></i><i style="left:217px;background:linear-gradient(#fff700 1px,#ff0 229px,#ffd300 337px,#ffb600 338px,#ffb500 342px,#fc0 343px,#ffd300 354px,#fb0 355px,#fb0 360px,#ff5b00 361px,#ff5b00 365px,#fc0 366px,#ffd300 377px,#fa0 378px,#fa0 382px,#ff7000 383px,#ff7100 388px,#ffd200 389px,#ffd200 394px,#fc0 399px,#ff4a00 400px,#ff4a00 411px,#ffd100 412px,#ffc400 428px,#ff7100 429px,#ff7100 434px,#fc0 435px,#fc0 456px,#ff8d00 457px,#ff8d00 462px,#fb0 463px,#fb0 467px)"></i><i style="left:218px;background:linear-gradient(#fe0 1px,#fe0 239px,#ffd300 337px,#fb0 338px,#fb0 342px,#fc0 343px,#ffd400 354px,#ffb600 355px,#fb0 360px,#f60 361px,#f60 365px,#fc0 366px,#ffd600 377px,#fa0 378px,#ffaf00 382px,#f70 383px,#f70 388px,#ffd500 389px,#ffd600 394px,#fc0 399px,#f50 400px,#f50 411px,#ffd600 412px,#fc0 428px,#ff7d00 429px,#ff7e00 434px,#ffd200 435px,#ffd800 456px,#f90 457px,#f90 462px,#fc0 463px,#fc0 467px)"></i><i style="left:219px;background:linear-gradient(#0aff00 1px,#08ff00 18px,#2f0 19px,#2eff00 21px,#2aff00 27px,#07ff00 29px,#0f1 228px,#1f0 229px,#3eff00 255px,#6f0 354px,#c2ff00 355px,#c3ff00 360px,#ffb200 361px,#ffb200 365px,#7f0 366px,#71ff00 372px,#7f0 377px,#bf0 378px,#c0ff00 382px,#ffd700 383px,#ffd700 388px,#7f0 389px,#7dff00 394px,#9f0 395px,#9f0 399px,#ff9f00 400px,#ff9f00 405px,#fc0 406px,#fc0 411px,#8f0 412px,#8f0 418px,#8f0 422px,#a1ff00 423px,#bf0 428px,#fd0 429px,#fd0 434px,#a2ff00 435px,#a4ff00 439px,#bf0 441px,#afff00 456px,#ffe900 457px,#ffe700 462px,#d3ff00 463px,#d4ff00 467px)"></i><i style="left:220px;background:linear-gradient(#00ff28 1px,#0f2 228px,#00ff82 229px,#0f3 247px,#00ff18 257px,#0f1 354px,#8f0 355px,#8f0 360px,#ff8100 361px,#ff8100 365px,#0f1 366px,#0f1 377px,#6fff00 378px,#6fff00 382px,#fe0 383px,#fe0 388px,#0f1 389px,#0f0 399px,#f60 400px,#f60 405px,#fd0 406px,#fd0 411px,#0f1 412px,#00ff16 422px,#0f0 423px,#0f0 428px,#fe0 429px,#fe0 434px,#00ff17 435px,#00ff17 456px,#d8ff00 457px,#d8ff00 462px,#0f1 463px,#0f1 467px)"></i><i style="left:221px;background:linear-gradient(#00ff1a 1px,#00ff2a 228px,#0f8 229px,#0f2 257px,#0f0 354px,#ff0 355px,#ff0 360px,#f80 361px,#f80 365px,#0f1 366px,#0f1 377px,#d2ff00 378px,#df0 383px,#df0 388px,#0f1 389px,#00ff16 394px,#2f0 395px,#2f0 399px,#ff6c00 400px,#ff6c00 405px,#fff300 406px,#fff300 411px,#00ff19 412px,#00ff1b 422px,#18ff00 423px,#3f0 428px,#fe0 429px,#fe0 434px,#06ff00 435px,#0f0 445px,#0f2 449px,#00ff17 456px,#cf0 457px,#cf0 462px,#00ff16 463px,#00ff17 467px)"></i><i style="left:222px;background:linear-gradient(#0f2 1px,#0f3 228px,#00ff90 229px,#00ff3e 250px,#00ff07 251px,#5bff00 252px,#6f0 265px,#06ff00 266px,#00ff2d 267px,#0f2 336px,#0f1 338px,#0f0 339px,#3f0 341px,#39ff00 354px,#ffc000 355px,#ffc200 360px,#f80 361px,#f80 365px,#0f1 366px,#0f1 377px,#fd0 378px,#fd0 382px,#8f0 383px,#9f0 388px,#06ff00 389px,#07ff00 394px,#7f0 395px,#7f0 399px,#ff7200 400px,#ff7200 405px,#ef0 406px,#e8ff00 411px,#00ff05 412px,#0f0 422px,#71ff00 423px,#7cff00 425px,#afff00 428px,#ffe900 429px,#ffe800 434px,#9f0 435px,#93ff00 445px,#4f0 447px,#0cff00 449px,#0cff00 451px,#2f0 452px,#2f0 456px,#d5ff00 457px,#d5ff00 462px,#1f0 463px,#1f0 467px)"></i><i style="left:223px;background:linear-gradient(#5cff00 1px,#ef0 2px,#ef0 88px,#5bff00 89px,#0f2 90px,#0f2 92px,#5bff00 93px,#ef0 94px,#ef0 110px,#5bff00 111px,#0f2 112px,#0f2 123px,#5bff00 124px,#ef0 125px,#ef0 138px,#5bff00 139px,#0f2 140px,#0f2 149px,#5bff00 150px,#ef0 151px,#ef0 160px,#5bff00 161px,#0f2 162px,#0f2 168px,#5bff00 169px,#ef0 170px,#ef0 188px,#5aff00 189px,#0f2 190px,#0f2 193px,#5aff00 194px,#ef0 195px,#ef0 210px,#5aff00 211px,#0f2 212px,#0f2 228px,#00ff7d 229px,#0f2 250px,#71ff00 251px,#fff800 252px,#fff800 265px,#0f1 267px,#00ff0b 300px,#3f0 301px,#83ff00 302px,#8f0 311px,#00ff09 313px,#0f0 352px,#2f0 353px,#5cff00 354px,#ff8e00 355px,#ff8d00 360px,#ffc400 361px,#ffc400 365px,#af0 366px,#b5ff00 375px,#cf0 377px,#fc0 378px,#fc0 382px,#df0 383px,#df0 386px,#f6ff00 389px,#df0 394px,#fe0 395px,#fe0 399px,#f70 400px,#f70 405px,#faff00 406px,#f6ff00 408px,#b6ff00 411px,#00ff07 412px,#00ff09 422px,#df0 423px,#df0 428px,#ff0 429px,#ff0 434px,#00ff09 435px,#00ff0a 451px,#3f0 452px,#3f0 456px,#c7ff00 457px,#c7ff00 462px,#00ff0a 463px,#00ff0a 467px)"></i><i style="left:224px;background:linear-gradient(#5f0 1px,#ef0 2px,#ef0 88px,#5f0 89px,#0f2 90px,#0f2 92px,#5aff00 93px,#ef0 94px,#ef0 110px,#5aff00 111px,#0f2 112px,#0f2 123px,#5bff00 124px,#ef0 125px,#ef0 138px,#5cff00 139px,#0f2 140px,#0f2 149px,#5cff00 150px,#ef0 151px,#ef0 160px,#5dff00 161px,#0f2 162px,#0f2 168px,#5dff00 169px,#ef0 170px,#ef0 188px,#5dff00 189px,#00ff1d 190px,#00ff1d 193px,#5dff00 194px,#ef0 195px,#ef0 210px,#5eff00 211px,#00ff1d 212px,#00ff1c 228px,#0f7 229px,#00ff18 250px,#7f0 251px,#fff800 252px,#fff800 265px,#00ff07 267px,#0f0 300px,#fff600 302px,#fff600 311px,#0f0 313px,#0f0 326px,#28ff00 330px,#2f0 352px,#3cff00 354px,#ff9400 355px,#ff9400 360px,#fff400 361px,#fff600 365px,#2eff00 366px,#3f0 377px,#fd0 378px,#fd0 382px,#4f0 383px,#4f0 388px,#0f0 394px,#fc0 395px,#fc0 399px,#ff7c00 400px,#ff7c00 405px,#7f0 406px,#7f0 411px,#0f0 412px,#0f0 422px,#ff0 423px,#ff0 428px,#a3ff00 429px,#a3ff00 434px,#0f0 435px,#00ff05 451px,#83ff00 452px,#83ff00 456px,#c1ff00 457px,#c1ff00 462px,#00ff05 463px,#00ff05 467px)"></i><i style="left:225px;background:linear-gradient(#0f2 1px,#00ff1a 228px,#00ff7f 229px,#00ff2a 255px,#00ff39 321px,#00ff38 325px,#0f1 327px,#1cff00 328px,#5f0 329px,#6eff00 330px,#7f0 354px,#f90 355px,#f90 360px,#bf0 361px,#8f0 365px,#00ff29 366px,#00ff27 371px,#0f1 372px,#00ff0c 377px,#ffe400 378px,#ffe400 382px,#0f1 383px,#0f1 394px,#ff8100 395px,#ff8100 405px,#3f0 406px,#3f0 411px,#00ff18 412px,#0f1 422px,#ff0 423px,#ff0 428px,#49ff00 429px,#4bff00 434px,#00ff0a 435px,#1f0 451px,#c4ff00 452px,#c6ff00 462px,#1cff00 463px,#2f0 467px)"></i><i style="left:226px;background:linear-gradient(#7fff00 1px,#ff0 2px,#ff0 88px,#00ff0c 90px,#00ff0c 91px,#ff0 93px,#ff0 100px,#00ff0a 102px,#ff0 104px,#ff0 112px,#0f1 114px,#0f1 116px,#ff0 118px,#ff0 127px,#0f1 129px,#0f1 130px,#ff0 131px,#ff0 143px,#0f1 145px,#ff0 147px,#ff0 161px,#7f0 162px,#7f0 163px,#ff0 164px,#ff0 179px,#7f0 180px,#00ff16 181px,#00ff16 186px,#df0 187px,#fd0 188px,#fd0 200px,#0f1 201px,#00ff18 214px,#71ff00 215px,#ff0 216px,#ff0 225px,#7f0 226px,#00ff16 227px,#00ff16 228px,#0f8 229px,#00ff39 249px,#18ff00 250px,#8f0 251px,#91ff00 258px,#2bff00 259px,#00ff27 260px,#0f2 295px,#3f0 296px,#9f0 297px,#9f0 311px,#3f0 312px,#0f2 313px,#0f2 348px,#9f0 349px,#92ff00 354px,#ffa000 355px,#ffa000 360px,#2f0 361px,#2f0 365px,#0f3 366px,#0f3 371px,#4bff00 372px,#5fff00 377px,#ffe500 378px,#ffe500 382px,#00ff18 383px,#00ff19 388px,#28ff00 389px,#27ff00 394px,#f80 395px,#f80 405px,#0f0 406px,#0f1 411px,#00ff3e 412px,#0f4 417px,#00ff1d 418px,#0f2 422px,#ef0 423px,#ef0 428px,#00ff17 429px,#00ff19 435px,#3bff00 436px,#93ff00 437px,#d1ff00 438px,#d6ff00 451px,#f9ff00 452px,#f9ff00 456px,#d6ff00 457px,#d5ff00 467px)"></i><i style="left:227px;background:linear-gradient(#9fff00 1px,#fe0 2px,#fe0 88px,#9f0 89px,#00ff06 90px,#00ff06 91px,#9f0 92px,#fe0 93px,#fe0 100px,#9f0 101px,#00ff06 102px,#9f0 103px,#fe0 104px,#fe0 112px,#9f0 113px,#00ff07 114px,#00ff07 116px,#9f0 117px,#fe0 118px,#fe0 127px,#9f0 128px,#00ff08 129px,#0f0 130px,#fe0 131px,#fe0 143px,#9f0 144px,#00ff08 145px,#9f0 146px,#fe0 147px,#fe0 161px,#9f0 162px,#9f0 163px,#fe0 164px,#fe0 179px,#9f0 180px,#00ff08 181px,#00ff08 186px,#ff0 187px,#fd0 188px,#fd0 200px,#0f0 201px,#00ff07 214px,#9f0 215px,#fe0 216px,#fe0 225px,#9f0 226px,#00ff06 227px,#00ff06 228px,#00ff92 229px,#00ff49 249px,#7f0 250px,#fd0 251px,#fd0 258px,#82ff00 259px,#00ff38 260px,#0f3 295px,#8fff00 296px,#fd0 297px,#fd0 311px,#92ff00 312px,#00ff2e 313px,#00ff2c 321px,#00ff1b 322px,#2f0 323px,#bf0 325px,#d7ff00 326px,#d7ff00 347px,#c5ff00 348px,#fc0 349px,#fc0 354px,#ffa500 355px,#ffa500 360px,#00ff07 361px,#00ff06 365px,#00ff1d 366px,#00ff1c 371px,#fff400 372px,#ffe600 382px,#1f0 383px,#16ff00 388px,#bf0 389px,#bf0 394px,#f80 395px,#f80 405px,#1dff00 406px,#0f0 411px,#0f1 412px,#0f1 417px,#6f0 418px,#6f0 422px,#f5ff00 423px,#fffa00 428px,#5eff00 429px,#6f0 444px,#5fff00 445px,#2f0 448px,#1f0 451px,#b1ff00 452px,#b1ff00 456px,#3bff00 457px,#3dff00 462px,#07ff00 463px,#09ff00 467px)"></i><i style="left:228px;background:linear-gradient(#a4ff00 1px,#fe0 2px,#fe0 88px,#a3ff00 89px,#07ff00 90px,#07ff00 91px,#a3ff00 92px,#fe0 93px,#fe0 100px,#a3ff00 101px,#06ff00 102px,#a3ff00 103px,#fe0 104px,#fe0 112px,#a2ff00 113px,#06ff00 114px,#06ff00 116px,#a2ff00 117px,#fe0 118px,#fe0 127px,#a2ff00 128px,#05ff00 129px,#0bff00 130px,#fe0 131px,#fe0 143px,#a2ff00 144px,#05ff00 145px,#a2ff00 146px,#fe0 147px,#fe0 161px,#a2ff00 162px,#a2ff00 163px,#fe0 164px,#fe0 179px,#a1ff00 180px,#0f0 181px,#0f0 186px,#ff0 187px,#fd0 188px,#fd0 200px,#1f0 201px,#0f0 202px,#0f0 214px,#a0ff00 215px,#fe0 216px,#fe0 225px,#a0ff00 226px,#0f0 227px,#0f0 228px,#0f8 229px,#00ff3c 249px,#80ff00 250px,#fd0 251px,#fd0 258px,#8f0 259px,#00ff2e 260px,#0f3 295px,#8dff00 296px,#fd0 297px,#fd0 311px,#8f0 312px,#0f3 313px,#0f2 348px,#fa0 349px,#fa0 360px,#00ff27 361px,#00ff2e 371px,#fe0 372px,#fe0 377px,#df0 378px,#df0 382px,#00ff28 383px,#00ff27 388px,#ffd600 389px,#ffd600 394px,#ff9100 395px,#ff9100 399px,#ffc700 400px,#ffc700 405px,#0f2 406px,#00ff2c 417px,#df0 418px,#ef0 428px,#00ff08 429px,#00ff08 445px,#5f0 446px,#4f0 451px,#94ff00 452px,#94ff00 456px,#0f1 457px,#0f1 462px,#00ff27 463px,#00ff27 467px)"></i><i style="left:229px;background:linear-gradient(#a3ff00 1px,#fe0 2px,#fe0 88px,#a0ff00 89px,#0f0 90px,#0f0 91px,#a0ff00 92px,#fe0 93px,#fe0 100px,#a0ff00 101px,#0f0 102px,#a0ff00 103px,#fe0 104px,#fe0 112px,#a0ff00 113px,#0f0 114px,#0f0 116px,#a0ff00 117px,#fe0 118px,#fe0 127px,#9fff00 128px,#0f0 129px,#0f0 130px,#fe0 131px,#fe0 143px,#9fff00 144px,#0f0 145px,#9fff00 146px,#fe0 147px,#fe0 161px,#9eff00 162px,#9eff00 163px,#fe0 164px,#fe0 179px,#9fff00 180px,#0f0 181px,#0f0 186px,#ff0 187px,#fd0 188px,#fd0 200px,#0cff00 201px,#0f0 202px,#0f0 214px,#a1ff00 215px,#fe0 216px,#fe0 225px,#a1ff00 226px,#0f0 227px,#0f0 228px,#0f8 229px,#0f3 249px,#8f0 250px,#fd0 251px,#fd0 258px,#9f0 259px,#0f2 260px,#00ff18 295px,#a3ff00 296px,#fd0 297px,#fd0 311px,#af0 312px,#0f1 313px,#0f1 342px,#3dff00 343px,#3dff00 348px,#ffaf00 349px,#ffaf00 354px,#fc0 355px,#fc0 360px,#0f1 361px,#0f1 365px,#1f0 366px,#1f0 371px,#fe0 372px,#fe0 377px,#5f0 378px,#5f0 382px,#1f0 383px,#1f0 388px,#f90 389px,#f90 399px,#ff0 400px,#ff0 405px,#00ff0a 406px,#00ff06 417px,#e4ff00 418px,#df0 428px,#00ff06 429px,#0f1 445px,#9f0 446px,#9f0 456px,#0f1 457px,#0f1 467px)"></i><i style="left:230px;background:linear-gradient(#a5ff00 1px,#fe0 2px,#fe0 88px,#a4ff00 89px,#09ff00 90px,#09ff00 91px,#a4ff00 92px,#fe0 93px,#fe0 100px,#a3ff00 101px,#09ff00 102px,#a3ff00 103px,#fe0 104px,#fe0 112px,#a3ff00 113px,#08ff00 114px,#08ff00 116px,#a3ff00 117px,#fe0 118px,#fe0 127px,#a3ff00 128px,#07ff00 129px,#1f0 130px,#fe0 131px,#fe0 143px,#a3ff00 144px,#07ff00 145px,#a3ff00 146px,#fe0 147px,#fe0 161px,#a2ff00 162px,#a2ff00 163px,#fe0 164px,#fe0 179px,#a2ff00 180px,#0f0 181px,#0f0 186px,#ff0 187px,#fd0 188px,#fd0 200px,#1f0 201px,#0f0 202px,#0f0 214px,#a0ff00 215px,#fe0 216px,#fe0 225px,#a0ff00 226px,#0f0 227px,#0f0 228px,#0f8 229px,#00ff50 243px,#5f0 244px,#fe0 245px,#fd0 258px,#8f0 259px,#00ff2d 260px,#0f3 295px,#8eff00 296px,#fd0 297px,#fd0 311px,#8f0 312px,#0f3 313px,#0f3 342px,#ff0 343px,#ff0 348px,#ffb400 349px,#ffb400 354px,#c6ff00 355px,#c7ff00 360px,#00ff2a 361px,#00ff29 365px,#8dff00 366px,#8eff00 371px,#fff300 372px,#fff300 377px,#0f1 378px,#00ff0c 382px,#7cff00 383px,#7dff00 388px,#f90 389px,#f90 399px,#8f0 400px,#8f0 403px,#af0 405px,#8f0 406px,#cf0 407px,#e3ff00 408px,#e4ff00 417px,#fff800 418px,#fff800 422px,#e4ff00 423px,#e3ff00 435px,#bf0 436px,#2dff00 438px,#00ff08 439px,#00ff0b 445px,#92ff00 446px,#94ff00 456px,#0f1 457px,#00ff0a 467px)"></i><i style="left:231px;background:linear-gradient(#1bff00 1px,#7f0 2px,#7f0 18px,#a3ff00 19px,#af0 27px,#7f0 31px,#7f0 88px,#1cff00 89px,#00ff29 90px,#00ff29 91px,#1cff00 92px,#7f0 93px,#7eff00 100px,#2f0 101px,#0f2 102px,#2f0 103px,#82ff00 104px,#7f0 112px,#1aff00 113px,#00ff2a 114px,#00ff2a 116px,#1aff00 117px,#7f0 118px,#7f0 127px,#19ff00 128px,#00ff2b 129px,#00ff29 130px,#7f0 131px,#7f0 132px,#7f0 143px,#18ff00 144px,#00ff2c 145px,#18ff00 146px,#7f0 147px,#7f0 161px,#16ff00 162px,#16ff00 163px,#7f0 164px,#7f0 179px,#1f0 180px,#0f3 181px,#0f3 186px,#6f0 187px,#ef0 188px,#ef0 199px,#ef0 200px,#00ff2e 201px,#0f3 214px,#0bff00 215px,#71ff00 216px,#7f0 225px,#1f0 226px,#0f3 227px,#0f3 228px,#00ff81 229px,#0f4 243px,#5dff00 244px,#fe0 245px,#fe0 251px,#df0 252px,#92ff00 253px,#9f0 258px,#3f0 259px,#0f2 260px,#0f2 295px,#2eff00 296px,#9f0 297px,#9f0 311px,#2cff00 312px,#0f2 313px,#00ff27 337px,#00ff18 342px,#fb0 343px,#fb0 354px,#5f0 355px,#5f0 360px,#1f0 361px,#1f0 365px,#fe0 366px,#fe0 377px,#1f0 378px,#00ff05 382px,#ffe300 383px,#ffe400 388px,#ffa100 389px,#ffa100 399px,#50ff00 400px,#50ff00 405px,#2f0 406px,#2f0 411px,#c0ff00 412px,#c0ff00 417px,#df0 418px,#df0 422px,#27ff00 423px,#0f0 427px,#00ff08 428px,#00ff28 429px,#00ff2b 439px,#1cff00 440px,#1cff00 445px,#7dff00 446px,#7cff00 451px,#38ff00 452px,#38ff00 456px,#00ff2c 457px,#00ff2d 467px)"></i><i style="left:232px;background:linear-gradient(#00ff3f 1px,#00ff3f 228px,#00ff82 229px,#0f4 243px,#00ff06 244px,#5eff00 245px,#70ff00 251px,#18ff00 252px,#0f2 253px,#00ff16 323px,#0f0 337px,#50ff00 338px,#5f0 342px,#fb0 343px,#fb0 354px,#2dff00 355px,#2f0 357px,#27ff00 365px,#fff400 366px,#ef0 377px,#4f0 378px,#3f0 382px,#fa0 383px,#fa0 394px,#ffb600 395px,#ffb600 399px,#4f0 400px,#4f0 404px,#94ff00 408px,#9f0 411px,#f3ff00 412px,#f3ff00 422px,#9f0 423px,#7f0 428px,#7f0 439px,#b0ff00 440px,#b0ff00 448px,#8eff00 451px,#0f0 452px,#00ff05 456px,#00ff1a 457px,#00ff1a 467px)"></i><i style="left:233px;background:linear-gradient(#0f4 1px,#0f4 228px,#0f8 229px,#0f2 256px,#0f1 323px,#00ff05 324px,#af0 327px,#bf0 328px,#c1ff00 336px,#cf0 337px,#ffe700 338px,#ffe700 342px,#fb0 343px,#fb0 348px,#ffd700 349px,#ffd700 354px,#e2ff00 355px,#e4ff00 365px,#fe0 366px,#fe0 371px,#e2ff00 372px,#df0 373px,#c0ff00 374px,#7fff00 375px,#4f0 377px,#bf0 378px,#bf0 382px,#fa0 383px,#fa0 394px,#fff800 395px,#fff800 399px,#0f1 400px,#00ff09 405px,#3aff00 406px,#4f0 411px,#cf0 412px,#cf0 417px,#afff00 418px,#afff00 422px,#2f0 423px,#2f0 439px,#8fff00 440px,#8fff00 448px,#8f0 451px,#00ff08 452px,#00ff09 467px)"></i><i style="left:234px;background:linear-gradient(#0f4 1px,#00ff3d 228px,#0f7 229px,#0f5 237px,#0f1 238px,#4f0 239px,#6f0 247px,#17ff00 248px,#0f2 249px,#0f1 258px,#0f1 331px,#0f0 332px,#0f0 336px,#0f0 337px,#ffc300 338px,#ffc300 348px,#94ff00 349px,#94ff00 354px,#00ff09 355px,#00ff0a 360px,#ff0 361px,#ff0 371px,#0f0 372px,#0f0 377px,#ffc700 378px,#ffc700 382px,#ffb000 383px,#ffb000 394px,#82ff00 395px,#82ff00 399px,#0f1 400px,#00ff18 405px,#b5ff00 406px,#b4ff00 417px,#2f0 418px,#2f0 422px,#00ff1b 423px,#00ff1b 434px,#3bff00 435px,#3bff00 439px,#6eff00 440px,#5dff00 451px,#00ff1d 452px,#0f2 467px)"></i><i style="left:235px;background:linear-gradient(#2f0 1px,#ef0 2px,#ef0 78px,#1bff00 79px,#00ff70 80px,#00ff70 84px,#1aff00 85px,#ef0 86px,#ef0 118px,#1f0 119px,#0f7 120px,#00ff7c 121px,#1f0 122px,#ef0 123px,#ef0 133px,#2f0 134px,#00ff61 135px,#00ff61 138px,#2f0 139px,#ef0 140px,#ef0 150px,#06ff00 151px,#0f8 152px,#0f8 155px,#0f8 158px,#0f0 159px,#ef0 160px,#ef0 168px,#0f0 169px,#0f8 170px,#00ff8e 180px,#0f0 181px,#ef0 182px,#ef0 192px,#0f0 193px,#00ff91 194px,#00ff93 204px,#0f0 205px,#ef0 206px,#ef0 213px,#0f0 214px,#0f9 215px,#00ff80 225px,#0f4 237px,#4cff00 238px,#fffa00 239px,#fffa00 247px,#00ff07 249px,#0f0 250px,#1dff00 258px,#2aff00 283px,#b0ff00 285px,#b0ff00 300px,#3f0 302px,#3cff00 318px,#28ff00 319px,#28ff00 324px,#3cff00 325px,#38ff00 331px,#af0 332px,#b4ff00 337px,#ffc600 338px,#ffc600 348px,#3eff00 349px,#3dff00 354px,#5fff00 355px,#5f0 360px,#ff0 361px,#f5ff00 371px,#8f0 372px,#8f0 377px,#ffb600 378px,#ffb600 394px,#9f0 395px,#a5ff00 396px,#9f0 402px,#2f0 405px,#bf0 406px,#bf0 417px,#1f0 418px,#07ff00 434px,#7f0 435px,#7f0 445px,#1dff00 446px,#1cff00 451px,#00ff05 452px,#00ff0a 467px)"></i><i style="left:236px;background:linear-gradient(#06ff00 1px,#d7ff00 2px,#d7ff00 18px,#e6ff00 21px,#d7ff00 31px,#d7ff00 78px,#0f0 79px,#0f7 80px,#0f7 84px,#0f0 85px,#d7ff00 86px,#d6ff00 118px,#00ff07 119px,#0f8 120px,#0f8 121px,#00ff08 122px,#d6ff00 123px,#d7ff00 133px,#05ff00 134px,#00ff6c 135px,#00ff6c 138px,#0aff00 139px,#d8ff00 140px,#d5ff00 150px,#0f1 151px,#00ff91 152px,#00ff93 158px,#0f1 159px,#d5ff00 160px,#d5ff00 168px,#0f1 169px,#0f9 170px,#0f9 180px,#0f1 181px,#d4ff00 182px,#d4ff00 192px,#0f1 193px,#0f9 194px,#00ffa0 204px,#0f1 205px,#d4ff00 206px,#d4ff00 213px,#00ff16 214px,#00ffa3 215px,#00ff93 225px,#0f6 237px,#3f0 238px,#fffa00 239px,#fffa00 247px,#5f0 248px,#00ff39 249px,#00ff29 258px,#00ff1d 331px,#fc0 332px,#fc0 342px,#fd0 343px,#fd0 348px,#4cff00 349px,#2f0 350px,#00ff05 351px,#00ff0c 354px,#f4ff00 355px,#ef0 365px,#28ff00 366px,#27ff00 371px,#ffe900 372px,#ffe900 377px,#fb0 378px,#fb0 388px,#fff300 389px,#fff300 394px,#0f2 395px,#0f1 398px,#2f0 399px,#9f0 400px,#a1ff00 405px,#d1ff00 406px,#d1ff00 410px,#bf0 412px,#bf0 417px,#92ff00 418px,#91ff00 432px,#8f0 433px,#4fff00 434px,#6dff00 435px,#4dff00 437px,#4cff00 445px,#0f3 446px,#0f4 462px,#00ff0c 463px,#0f1 467px)"></i><i style="left:237px;background:linear-gradient(#0f7 1px,#0f7 18px,#6fff00 19px,#92ff00 21px,#8f0 27px,#2aff00 28px,#0f3 29px,#00ff6e 30px,#00ff7c 31px,#0f8 97px,#0f6 103px,#00ff6b 106px,#00ff91 111px,#0f9 131px,#00ff7c 136px,#00ff7f 140px,#00ffa0 145px,#00ffb3 215px,#0fa 225px,#00ff7d 237px,#00ff38 238px,#2f0 239px,#3eff00 247px,#00ff1b 248px,#00ff50 249px,#00ff3c 259px,#00ff17 325px,#5fff00 326px,#6f0 331px,#fc0 332px,#fc0 342px,#8f0 343px,#82ff00 348px,#1f0 349px,#08ff00 351px,#06ff00 354px,#e6ff00 355px,#e6ff00 365px,#4fff00 366px,#4eff00 371px,#fb0 372px,#fb0 388px,#7eff00 389px,#7dff00 394px,#00ff1b 395px,#00ff1a 399px,#9f0 400px,#9f0 405px,#bf0 410px,#bf0 411px,#4aff00 412px,#4f0 428px,#7dff00 429px,#7dff00 430px,#5f0 435px,#5f0 439px,#3f0 440px,#3f0 445px,#00ff2b 446px,#00ff2b 462px,#3f0 463px,#3f0 467px)"></i><i style="left:238px;background:linear-gradient(#0f7 1px,#0f7 18px,#70ff00 19px,#93ff00 21px,#8f0 27px,#2bff00 28px,#0f3 29px,#00ff6b 30px,#0f7 31px,#0f7 97px,#0f5 103px,#00ff5a 106px,#00ff7e 111px,#00ff83 131px,#0f6 135px,#0f6 139px,#0f8 145px,#0f9 215px,#00ff8e 225px,#00ff2d 255px,#0f3 325px,#fd0 326px,#ffd100 342px,#00ff1b 343px,#00ff1c 348px,#bf0 349px,#bf0 354px,#d7ff00 355px,#d7ff00 360px,#8f0 361px,#8f0 365px,#fff700 366px,#fff700 371px,#ffc100 372px,#ffc300 388px,#0f1 389px,#0f1 394px,#2dff00 395px,#2dff00 399px,#81ff00 400px,#92ff00 409px,#94ff00 411px,#0f1 412px,#00ff0c 428px,#5f0 429px,#3bff00 437px,#5eff00 439px,#5aff00 440px,#8f0 441px,#91ff00 442px,#92ff00 467px)"></i><i style="left:239px;background:linear-gradient(#0f7 1px,#0f7 18px,#71ff00 19px,#9f0 21px,#8dff00 27px,#2dff00 28px,#0f3 29px,#0f6 30px,#0f7 31px,#0f7 97px,#0f5 103px,#00ff5b 106px,#00ff80 111px,#0f8 131px,#0f6 135px,#0f6 139px,#0f8 145px,#00ffa0 215px,#00ff8d 225px,#0f3 246px,#0f1 256px,#0f1 320px,#3f0 321px,#4dff00 325px,#fd0 326px,#ffd400 337px,#e3ff00 338px,#e3ff00 342px,#0f0 343px,#0f0 348px,#d7ff00 349px,#d8ff00 360px,#5aff00 361px,#71ff00 365px,#ffc500 366px,#ffc500 382px,#f3ff00 383px,#f3ff00 388px,#4f0 389px,#4f0 394px,#a5ff00 395px,#a3ff00 402px,#90ff00 405px,#4f0 406px,#3fff00 411px,#00ff16 412px,#00ff16 422px,#4cff00 423px,#4eff00 439px,#0f1 440px,#0f0 442px,#4f0 445px,#4f0 456px,#5f0 457px,#4f0 467px)"></i><i style="left:240px;background:linear-gradient(#0f7 1px,#0f7 18px,#7f0 19px,#9f0 21px,#90ff00 27px,#3f0 28px,#0f3 29px,#0f6 30px,#0f7 31px,#0f7 97px,#0f5 103px,#0f5 106px,#0f7 111px,#00ff7e 131px,#00ff61 135px,#00ff61 139px,#00ff83 145px,#0f9 215px,#00ff81 226px,#0f0 255px,#0f0 320px,#ff0 321px,#fd0 327px,#ffd700 337px,#3cff00 338px,#3dff00 342px,#b4ff00 343px,#b4ff00 348px,#d5ff00 349px,#d6ff00 360px,#fff300 361px,#fff300 365px,#fc0 366px,#fc0 382px,#6cff00 383px,#61ff00 394px,#a3ff00 395px,#a0ff00 405px,#3f0 406px,#3bff00 422px,#6f0 423px,#6cff00 434px,#4f0 435px,#60ff00 467px)"></i><i style="left:241px;background:linear-gradient(#0f8 1px,#0f8 18px,#6f0 19px,#8f0 21px,#83ff00 27px,#2f0 28px,#0f4 29px,#0f7 30px,#0f8 31px,#0f8 97px,#0f6 103px,#0f6 106px,#0f8 111px,#00ff90 131px,#00ff71 136px,#0f7 140px,#00ff94 145px,#00ffa4 215px,#00ff8e 226px,#0f1 256px,#0f0 314px,#19ff00 315px,#4f0 320px,#fff700 321px,#fd0 329px,#fd0 331px,#fff300 332px,#fff400 337px,#1f0 338px,#1f0 342px,#cf0 343px,#cf0 354px,#6eff00 355px,#6eff00 360px,#fc0 361px,#fc0 377px,#fff400 378px,#fff400 382px,#0f0 383px,#0f0 388px,#8f0 389px,#83ff00 399px,#60ff00 400px,#60ff00 405px,#00ff0a 406px,#00ff0b 417px,#4f0 418px,#4f0 434px,#0f1 435px,#00ff0a 442px,#4f0 446px,#4f0 467px)"></i><i style="left:242px;background:linear-gradient(#00ff72 1px,#0f7 18px,#7f0 19px,#9f0 21px,#8fff00 27px,#2eff00 28px,#0f3 29px,#0f6 30px,#0f7 31px,#00ff7f 97px,#00ff5c 103px,#00ff5f 106px,#0f8 111px,#0f8 131px,#00ff6d 136px,#00ff70 140px,#00ff91 145px,#0fa 215px,#0f9 226px,#0f3 255px,#0f3 314px,#80ff00 315px,#ff0 321px,#fd0 331px,#5f0 332px,#6f0 334px,#6bff00 337px,#cf0 338px,#d2ff00 348px,#bf0 354px,#fe0 355px,#fe0 360px,#fc0 361px,#fc0 377px,#6f0 378px,#6f0 382px,#38ff00 383px,#38ff00 388px,#6bff00 389px,#6cff00 399px,#00ff1b 400px,#00ff28 411px,#0f1 412px,#0f1 417px,#2cff00 418px,#2dff00 428px,#0f0 429px,#0f0 434px,#00ff27 435px,#0f2 445px,#0f1 446px,#00ff07 449px,#1aff00 450px,#a0ff00 452px,#bf0 453px,#bf0 467px)"></i><i style="left:243px;background:linear-gradient(#0f7 1px,#0f7 18px,#70ff00 19px,#93ff00 21px,#8f0 27px,#2bff00 28px,#0f3 29px,#00ff6c 30px,#0f7 31px,#00ff80 97px,#00ff5e 103px,#00ff60 106px,#0f8 111px,#0f8 131px,#00ff6d 136px,#00ff6f 140px,#00ff90 145px,#0fa 215px,#00ff94 226px,#00ff2d 254px,#00ff27 308px,#0f0 314px,#7f0 315px,#ff0 321px,#fe0 325px,#fe0 331px,#1f0 332px,#2f0 337px,#bf0 338px,#bf0 348px,#9f0 349px,#8f0 354px,#ffd300 355px,#ffd300 371px,#fe0 372px,#fe0 377px,#00ff0c 378px,#00ff0c 382px,#6f0 383px,#6f0 394px,#5f0 395px,#5f0 399px,#0f2 400px,#0f2 411px,#27ff00 412px,#28ff00 428px,#0f2 429px,#0f2 445px,#08ff00 446px,#1f0 462px,#0f1 463px,#00ff0b 467px)"></i><i style="left:244px;background:linear-gradient(#00ff6e 1px,#00ff6e 18px,#7f0 19px,#9f0 21px,#92ff00 27px,#3f0 28px,#00ff2a 29px,#00ff61 30px,#00ff6f 31px,#0f7 97px,#0f5 103px,#0f5 106px,#0f7 111px,#00ff7e 131px,#00ff60 136px,#0f6 140px,#00ff83 145px,#0f9 215px,#00ff81 226px,#0f0 255px,#07ff00 308px,#3f0 311px,#ff0 321px,#fffa00 322px,#fe0 325px,#50ff00 326px,#5f0 331px,#afff00 332px,#afff00 348px,#ffd600 349px,#ffd600 371px,#7eff00 372px,#7eff00 377px,#6f0 378px,#7f0 394px,#2f0 395px,#4f0 402px,#4f0 415px,#2cff00 427px,#0f0 430px,#0f0 439px,#1f0 440px,#18ff00 447px,#17ff00 456px,#0f0 457px,#0f0 464px,#1aff00 467px)"></i><i style="left:245px;background:linear-gradient(#00ff7e 1px,#00ff7f 18px,#6cff00 19px,#8fff00 21px,#8f0 27px,#28ff00 28px,#00ff3b 29px,#00ff71 30px,#00ff80 31px,#0f8 97px,#0f6 103px,#0f6 106px,#0f8 111px,#00ff90 131px,#00ff72 136px,#0f7 140px,#0f9 145px,#0fa 215px,#0f9 226px,#0f3 254px,#0f2 307px,#0f0 310px,#df0 320px,#c1ff00 321px,#f7ff00 325px,#3f0 326px,#3aff00 331px,#9f0 332px,#9f0 342px,#d4ff00 343px,#d4ff00 348px,#fd0 349px,#fd0 365px,#fff300 366px,#fff300 371px,#00ff09 372px,#00ff09 377px,#5f0 378px,#5bff00 388px,#4f0 389px,#50ff00 394px,#1f0 395px,#1f0 397px,#4f0 399px,#a1ff00 401px,#b6ff00 402px,#bf0 426px,#af0 427px,#0f0 430px,#0f1 432px,#08ff00 433px,#7dff00 435px,#a5ff00 436px,#af0 437px,#c6ff00 460px,#e7ff00 467px)"></i><i style="left:246px;background:linear-gradient(#00ff70 1px,#00ff72 18px,#7f0 19px,#9f0 21px,#90ff00 27px,#3f0 28px,#00ff2e 29px,#0f6 30px,#0f7 31px,#00ff7d 97px,#00ff5a 103px,#00ff5d 106px,#00ff82 111px,#0f8 131px,#00ff6b 136px,#00ff6e 140px,#00ff8f 145px,#00ffa4 215px,#00ff8f 226px,#00ff16 255px,#0f0 309px,#d5ff00 320px,#19ff00 321px,#2eff00 325px,#94ff00 326px,#9f0 342px,#fd0 343px,#fd0 365px,#6f0 366px,#6f0 371px,#5f0 372px,#50ff00 388px,#0f2 389px,#0f2 399px,#1f0 400px,#09ff00 417px,#00ff16 418px,#00ff17 422px,#00ff28 423px,#00ff2c 429px,#0f1 431px,#81ff00 434px,#8f0 448px,#83ff00 452px,#05ff00 455px,#00ff0b 457px,#0f0 460px,#4dff00 463px,#fff900 467px)"></i><i style="left:247px;background:linear-gradient(#0f7 1px,#0f7 18px,#70ff00 19px,#93ff00 21px,#8f0 27px,#2bff00 28px,#0f3 29px,#00ff6b 30px,#0f7 31px,#00ff81 97px,#00ff5e 103px,#00ff61 106px,#0f8 111px,#0f8 131px,#00ff6e 136px,#00ff70 140px,#00ff92 145px,#0fa 215px,#0f9 226px,#00ff3b 254px,#0f3 306px,#00ff05 311px,#3dff00 314px,#1dff00 315px,#7f0 320px,#4f0 321px,#81ff00 327px,#8f0 337px,#fe0 338px,#fd0 360px,#f3ff00 361px,#f3ff00 365px,#2f0 366px,#2f0 371px,#4f0 372px,#4f0 382px,#17ff00 383px,#19ff00 388px,#00ff1d 389px,#00ff19 391px,#0f0 392px,#7f0 395px,#82ff00 417px,#a1ff00 422px,#9f0 423px,#38ff00 426px,#2cff00 427px,#3aff00 450px,#0f0 454px,#0f0 455px,#3f0 459px,#fff600 464px,#ffc600 467px)"></i><i style="left:248px;background:linear-gradient(#0f7 1px,#0f7 18px,#70ff00 19px,#94ff00 21px,#8dff00 27px,#2cff00 28px,#0f3 29px,#0f6 30px,#0f7 31px,#00ff7c 97px,#0f5 103px,#00ff5b 106px,#00ff80 111px,#0f8 131px,#0f6 136px,#0f6 140px,#0f8 145px,#0f9 215px,#0f8 226px,#0f2 247px,#00ff06 256px,#09ff00 309px,#50ff00 314px,#0bff00 315px,#0cff00 320px,#5eff00 321px,#8f0 326px,#90ff00 331px,#bf0 332px,#bf0 337px,#ffe400 338px,#ffe400 360px,#49ff00 361px,#4aff00 382px,#00ff08 383px,#0f0 394px,#17ff00 395px,#1f0 411px,#00ff06 412px,#00ff07 417px,#0bff00 418px,#82ff00 421px,#8f0 422px,#80ff00 450px,#1f0 453px,#0f0 454px,#06ff00 455px,#4f0 457px,#df0 460px,#fff700 461px,#ffc700 464px,#ffc600 467px)"></i><i style="left:249px;background:linear-gradient(#00ff80 1px,#00ff82 18px,#6f0 19px,#8eff00 21px,#8f0 27px,#2f0 28px,#00ff3e 29px,#0f7 30px,#00ff83 31px,#0f8 97px,#0f6 103px,#0f6 106px,#00ff8f 111px,#0f9 131px,#0f7 136px,#0f7 140px,#0f9 145px,#0fa 215px,#0f9 227px,#0f2 256px,#0f0 314px,#6fff00 324px,#8f0 331px,#ffe800 332px,#ffe800 354px,#b5ff00 355px,#b5ff00 360px,#4f0 361px,#4f0 377px,#0f0 378px,#0f0 388px,#1bff00 389px,#1dff00 405px,#1aff00 411px,#0f0 412px,#08ff00 446px,#2aff00 452px,#6f0 454px,#ef0 457px,#fff300 458px,#ffc300 462px,#fc0 464px,#fff800 467px)"></i><i style="left:250px;background:linear-gradient(#0f7 1px,#0f7 18px,#71ff00 19px,#94ff00 21px,#8dff00 27px,#2cff00 28px,#0f3 29px,#0f6 30px,#0f7 31px,#0f7 97px,#0f5 103px,#0f5 106px,#00ff7e 111px,#00ff83 131px,#0f6 135px,#0f6 139px,#0f8 145px,#0f9 215px,#0f8 226px,#0f1 255px,#00ff06 314px,#6f0 325px,#fe0 326px,#fe0 354px,#1aff00 355px,#18ff00 360px,#3f0 361px,#2aff00 377px,#0f2 378px,#0f2 382px,#0f2 388px,#00ff09 389px,#00ff0c 405px,#0f3 406px,#0f3 417px,#0f2 423px,#0f2 438px,#00ff1b 440px,#00ff05 441px,#1cff00 443px,#28ff00 447px,#4f0 449px,#80ff00 451px,#ff0 454px,#ffc600 459px,#fe0 463px,#ef0 464px,#3eff00 467px)"></i><i style="left:251px;background:linear-gradient(#0f7 1px,#0f7 18px,#71ff00 19px,#94ff00 21px,#8dff00 27px,#2dff00 28px,#0f3 29px,#0f6 30px,#0f7 31px,#00ff7f 97px,#00ff5c 103px,#00ff5e 106px,#0f8 111px,#0f8 131px,#00ff6c 136px,#00ff6e 140px,#00ff8f 145px,#0fa 215px,#0f9 226px,#0f3 254px,#0f3 311px,#0f0 318px,#2f0 320px,#82ff00 321px,#bf0 325px,#fff300 326px,#fe0 348px,#5f0 349px,#5fff00 354px,#29ff00 355px,#29ff00 371px,#0f1 372px,#00ff16 376px,#00ff3b 381px,#00ff3b 382px,#00ff19 383px,#00ff1a 399px,#0f3 400px,#0f3 405px,#00ff3e 406px,#00ff3f 417px,#00ff29 418px,#0f3 438px,#00ff08 441px,#5f0 447px,#9f0 449px,#ff0 451px,#fc0 456px,#fff700 460px,#df0 461px,#60ff00 463px,#0f0 465px,#0f2 467px)"></i><i style="left:252px;background:linear-gradient(#00ff6c 1px,#00ff6e 18px,#7f0 19px,#9f0 21px,#93ff00 27px,#3f0 28px,#00ff2a 29px,#00ff61 30px,#00ff6f 31px,#0f7 97px,#0f5 103px,#0f5 106px,#0f7 111px,#00ff81 131px,#0f6 136px,#0f6 140px,#0f8 145px,#00ffa0 215px,#0f8 226px,#0f2 255px,#0f2 313px,#00ff07 315px,#39ff00 320px,#cf0 321px,#ff0 324px,#fe0 342px,#c4ff00 343px,#c4ff00 348px,#2f0 349px,#3f0 353px,#afff00 355px,#c1ff00 356px,#c3ff00 361px,#df0 365px,#df0 376px,#5f0 380px,#5f0 392px,#0f0 395px,#0f1 400px,#00ff08 428px,#4dff00 431px,#5f0 432px,#5cff00 440px,#72ff00 443px,#9f0 445px,#ff0 448px,#ffd300 451px,#fc0 453px,#fff900 458px,#7dff00 463px,#3f0 465px,#0f0 467px)"></i><i style="left:253px;background:linear-gradient(#0f7 1px,#0f7 18px,#71ff00 19px,#9f0 21px,#8eff00 27px,#2dff00 28px,#0f3 29px,#0f6 30px,#0f7 31px,#0f7 97px,#0f5 103px,#0f5 106px,#00ff7d 111px,#00ff81 131px,#0f6 135px,#0f6 139px,#0f8 145px,#0f9 215px,#0f8 225px,#0f1 255px,#0f1 314px,#4f0 315px,#c4ff00 321px,#ff0 325px,#fff600 342px,#1dff00 343px,#2f0 365px,#00ff06 366px,#0f0 368px,#3f0 371px,#4f0 373px,#3cff00 386px,#0f0 389px,#00ff2d 397px,#0f3 429px,#0f3 436px,#00ff07 438px,#61ff00 440px,#8fff00 442px,#ff0 445px,#fe0 446px,#fc0 450px,#ff0 455px,#a1ff00 458px,#7f0 460px,#5eff00 463px,#5f0 467px)"></i><i style="left:254px;background:linear-gradient(#00ff6c 1px,#00ff6c 18px,#7f0 19px,#9f0 21px,#93ff00 27px,#3f0 28px,#00ff29 29px,#00ff5e 30px,#00ff6c 31px,#00ff6e 97px,#00ff4d 103px,#00ff4e 106px,#00ff72 111px,#0f7 131px,#00ff5a 135px,#00ff5a 139px,#0f7 145px,#00ff91 215px,#0f7 226px,#00ff09 255px,#0f0 311px,#c7ff00 321px,#ff0 325px,#fff600 337px,#6f0 338px,#6f0 342px,#2f0 343px,#1f0 360px,#00ff17 361px,#00ff17 367px,#0f0 369px,#5f0 371px,#6f0 372px,#6fff00 383px,#9f0 386px,#af0 389px,#ef0 393px,#faff00 397px,#ef0 400px,#cf0 403px,#1f0 409px,#00ff07 410px,#00ff17 413px,#00ff09 437px,#05ff00 438px,#4bff00 440px,#ef0 443px,#fe0 444px,#ffd200 447px,#fe0 450px,#f3ff00 451px,#6f0 454px,#09ff00 457px,#0f1 467px)"></i><i style="left:255px;background:linear-gradient(#fffa00 1px,#fffa00 169px,#fd0 184px,#fd0 219px,#fff600 234px,#fe0 289px,#fb0 297px,#f70 304px,#ff5e00 349px,#ffb500 356px,#ff0 364px,#a0ff00 370px,#8f0 373px,#af0 376px,#ff0 380px,#faff00 412px,#df0 414px,#1f0 419px,#00ff09 420px,#0f3 424px,#00ff06 429px,#2f0 431px,#6f0 433px,#00ff3f 434px,#0f3 436px,#00ff18 437px,#1f0 438px,#ff0 441px,#ffd500 444px,#fe0 447px,#ef0 448px,#0aff00 451px,#0f3 454px,#0f4 457px,#0f3 460px,#00ff38 467px)"></i><i style="left:256px;background:linear-gradient(#fffa00 1px,#fffa00 169px,#fd0 184px,#fd0 219px,#fff600 234px,#fe0 289px,#fb0 297px,#f70 304px,#ff5e00 349px,#ffb500 356px,#fff800 364px,#ef0 433px,#00ff27 434px,#0f0 436px,#fff900 439px,#fd0 441px,#fe0 444px,#ef0 445px,#2f0 448px,#00ff06 449px,#0f4 450px,#00ff72 454px,#0f7 458px,#00ff6d 459px,#00ff4b 460px,#00ff4b 467px)"></i><i style="left:257px;background:linear-gradient(#af0 1px,#af0 18px,#ef0 19px,#f3ff00 21px,#ef0 27px,#af0 30px,#af0 31px,#b1ff00 103px,#9f0 169px,#df0 184px,#d8ff00 219px,#9fff00 234px,#af0 289px,#ff0 295px,#fc0 304px,#ffc000 349px,#ffe600 355px,#ff0 364px,#ff0 380px,#bf0 382px,#00ff08 385px,#0f5 387px,#00ff90 389px,#0fa 392px,#0fa 402px,#00ff7e 405px,#0f2 408px,#0f0 409px,#bf0 412px,#f6ff00 414px,#ef0 433px,#7f0 434px,#fff600 437px,#fd0 439px,#fe0 441px,#f7ff00 442px,#2cff00 445px,#00ff06 446px,#00ff3a 449px,#0f7 450px,#0f7 451px,#00ff7f 458px,#0f7 459px,#0f5 460px,#0f5 467px)"></i><i style="left:258px;background:linear-gradient(#00ff72 1px,#0f7 18px,#7f0 19px,#9f0 21px,#8fff00 27px,#2eff00 28px,#0f3 29px,#0f6 30px,#0f7 31px,#00ff7e 97px,#00ff5c 103px,#00ff5e 106px,#00ff83 111px,#0f8 130px,#0f6 134px,#00ff6e 140px,#00ff8f 145px,#0fa 229px,#0fa 366px,#00ff90 373px,#0fa 379px,#0fa 401px,#0f9 408px,#0fa 414px,#0f9 416px,#0f3 421px,#09ff00 425px,#2f0 426px,#0f0 429px,#af0 430px,#ff0 434px,#fe0 436px,#fff500 438px,#e6ff00 439px,#0cff00 443px,#0f1 444px,#0f3 446px,#0f4 449px,#0f7 450px,#0f7 458px,#00ff6d 459px,#00ff4b 460px,#00ff4c 467px)"></i><i style="left:259px;background:linear-gradient(#00ff6e 1px,#00ff6f 18px,#7f0 19px,#9f0 21px,#92ff00 27px,#3f0 28px,#00ff2b 29px,#00ff61 30px,#00ff6f 31px,#0f7 97px,#0f5 103px,#0f7 112px,#00ff4c 113px,#00ff4a 114px,#00ff6f 115px,#0f6 119px,#00ff3d 120px,#0f3 125px,#0f5 126px,#0f4 130px,#00ff19 131px,#00ff08 133px,#00ff1c 134px,#00ff49 135px,#0f6 208px,#00ff9e 209px,#00ffb6 321px,#00ffb1 401px,#00ffa0 406px,#00ffaf 424px,#0f6 426px,#0f6 429px,#bf0 430px,#df0 434px,#cf0 436px,#0f0 439px,#00ff3c 444px,#0f4 449px,#0f7 450px,#0f7 458px,#00ff70 459px,#00ff4e 460px,#00ff4d 467px)"></i><i style="left:260px;background:linear-gradient(#00ff6f 1px,#00ff70 18px,#7f0 19px,#9f0 21px,#91ff00 27px,#3f0 28px,#00ff2d 29px,#0f6 30px,#00ff71 31px,#0f7 97px,#0f5 103px,#0f5 106px,#0f7 110px,#00ff72 112px,#cf0 113px,#d1ff00 114px,#0f3 115px,#0f1 119px,#d6ff00 120px,#df0 125px,#2f0 126px,#3f0 130px,#df0 131px,#df0 133px,#4f0 134px,#00ff49 135px,#0f5 208px,#00ffa3 209px,#00ffb6 321px,#0fb 401px,#0fa 405px,#0fb 424px,#0f7 426px,#0f7 429px,#5f0 430px,#0f0 435px,#0f1 436px,#00ff6b 439px,#0f4 441px,#0f5 449px,#0f8 450px,#0f8 458px,#00ff7c 459px,#00ff5b 460px,#00ff5b 467px)"></i><i style="left:261px;background:linear-gradient(#0f7 1px,#0f7 18px,#7f0 19px,#9f0 21px,#8fff00 27px,#2eff00 28px,#0f3 29px,#0f6 30px,#0f7 31px,#0f7 81px,#00ff6b 98px,#00ff4f 102px,#00ff5c 109px,#0f2 112px,#6f0 113px,#7cff00 114px,#38ff00 115px,#38ff00 119px,#83ff00 120px,#6eff00 125px,#05ff00 126px,#0f0 127px,#00ff16 130px,#4bff00 131px,#4f0 133px,#0f2 134px,#0f6 135px,#0f6 140px,#0f8 144px,#0fa 229px,#0fb 321px,#00ffb3 401px,#00ffa2 409px,#00ffb2 413px,#00ffb1 424px,#00ff6c 426px,#00ff6c 429px,#0f2 430px,#00ff3c 431px,#0f8 439px,#0f4 441px,#00ff49 449px,#00ff7c 450px,#00ff7e 451px,#00ff7d 458px,#00ff72 459px,#00ff50 460px,#00ff50 467px)"></i><i style="left:262px;background:linear-gradient(#00ff7f 1px,#00ff7f 18px,#6cff00 19px,#8fff00 21px,#8f0 27px,#28ff00 28px,#00ff3b 29px,#00ff71 30px,#00ff7f 31px,#00ff7f 81px,#0f5 88px,#0f5 98px,#00ff3c 106px,#0f3 108px,#0f0 110px,#2f0 111px,#2cff00 112px,#1f0 113px,#0f3 115px,#00ff6c 126px,#0f7 130px,#00ff6e 140px,#00ff8f 145px,#0fa 229px,#0fa 321px,#00ffa4 401px,#00ff93 406px,#00ffa2 424px,#00ff5d 426px,#00ff4e 430px,#0f6 431px,#00ff82 439px,#00ff3a 441px,#00ff39 449px,#00ff6c 450px,#00ff6d 451px,#00ff6c 458px,#00ff61 459px,#00ff3f 460px,#00ff3e 467px)"></i><i style="left:263px;background:linear-gradient(#0f7 1px,#0f7 18px,#72ff00 19px,#9f0 21px,#8eff00 27px,#2eff00 28px,#0f3 29px,#0f6 30px,#0f7 31px,#0f7 81px,#0f3 88px,#0f2 104px,#00ff0c 105px,#4f0 108px,#3eff00 109px,#2f0 110px,#00ff07 111px,#00ff70 117px,#00ff82 123px,#0f8 131px,#0f6 136px,#00ff6c 140px,#00ff8d 145px,#0fa 229px,#00ffb0 321px,#0fa 401px,#0f9 407px,#0fa 424px,#0f6 426px,#0f6 429px,#0f8 431px,#0f8 439px,#0f4 441px,#0f4 449px,#0f7 450px,#0f7 451px,#0f7 458px,#0f6 459px,#0f4 460px,#0f4 467px)"></i><i style="left:264px;background:linear-gradient(#00ff6e 1px,#00ff6e 18px,#7f0 19px,#9f0 21px,#93ff00 27px,#3f0 28px,#00ff2a 29px,#00ff61 30px,#00ff6f 31px,#00ff71 81px,#00ff1c 88px,#0f1 98px,#5dff00 99px,#9f0 100px,#b3ff00 105px,#90ff00 113px,#5f0 114px,#0f1 115px,#00ff6b 117px,#0f7 119px,#00ff7e 131px,#00ff60 135px,#00ff61 139px,#00ff83 145px,#00ff9f 229px,#0fa 401px,#0f9 409px,#0fa 413px,#0fa 424px,#0f6 426px,#0f6 429px,#00ff90 431px,#00ff8e 439px,#0f4 441px,#0f4 449px,#0f7 450px,#0f7 451px,#0f7 458px,#00ff6f 459px,#00ff4d 460px,#00ff4d 467px)"></i><i style="left:265px;background:linear-gradient(#00ff6b 1px,#0f6 18px,#7f0 19px,#9f0 21px,#91ff00 27px,#3f0 28px,#0f2 29px,#0f5 30px,#0f6 31px,#00ff5f 81px,#00ff50 84px,#00ff19 88px,#0f1 97px,#1f0 98px,#9f0 99px,#cf0 100px,#cf0 113px,#92ff00 114px,#1f0 115px,#00ff3b 116px,#0f6 117px,#0f7 119px,#0f7 131px,#0f5 135px,#0f5 139px,#0f7 145px,#0fa 321px,#0fa 401px,#0f9 406px,#0fa 424px,#0f6 426px,#0f6 429px,#00ff91 431px,#00ff8e 439px,#0f4 441px,#0f4 449px,#0f7 450px,#0f7 451px,#0f7 458px,#00ff6f 459px,#00ff4d 460px,#00ff4d 467px)"></i><i style="left:266px;background:linear-gradient(#0f7 1px,#00ff6e 18px,#6eff00 19px,#91ff00 21px,#8f0 27px,#2eff00 28px,#0f3 29px,#00ff61 30px,#00ff6d 31px,#00ff6c 81px,#00ff5d 84px,#0f2 88px,#0f2 97px,#1cff00 98px,#a2ff00 99px,#cf0 100px,#cf0 113px,#8f0 114px,#00ff07 115px,#00ff49 116px,#0f7 117px,#00ff83 119px,#0f8 131px,#0f6 135px,#0f6 139px,#0f8 145px,#00ffa5 229px,#00ffb0 401px,#00ffa0 409px,#00ffb0 413px,#00ffb1 424px,#00ff6c 426px,#00ff6c 429px,#0f9 431px,#0f9 439px,#00ff4c 441px,#00ff4c 449px,#00ff7f 450px,#00ff81 451px,#00ff81 458px,#0f7 459px,#0f5 460px,#0f5 467px)"></i><i style="left:267px;background:linear-gradient(#0f7 1px,#0f7 18px,#71ff00 19px,#9f0 21px,#8eff00 27px,#2dff00 28px,#0f3 29px,#0f6 30px,#0f7 31px,#0f7 81px,#0f2 88px,#0f2 96px,#0f1 97px,#6f0 98px,#b0ff00 99px,#cf0 100px,#cf0 113px,#8f0 114px,#0f0 115px,#0f4 116px,#00ff71 117px,#00ff81 119px,#0f8 131px,#0f6 135px,#0f6 139px,#0f8 145px,#0fa 229px,#00ffb0 401px,#00ffa0 409px,#00ffb0 413px,#00ffb0 424px,#00ff6b 426px,#00ff6b 429px,#0f9 431px,#00ff93 439px,#00ff4a 441px,#00ff4a 449px,#00ff7d 450px,#00ff7e 451px,#00ff7e 458px,#0f7 459px,#0f5 460px,#0f5 467px)"></i><i style="left:268px;background:linear-gradient(#0f7 1px,#0f7 18px,#71ff00 19px,#9f0 21px,#8eff00 27px,#2dff00 28px,#0f3 29px,#0f6 30px,#0f7 31px,#0f7 81px,#0f2 88px,#0f2 95px,#0f0 96px,#3dff00 98px,#9f0 100px,#8f0 113px,#50ff00 114px,#00ff1b 115px,#0f7 117px,#0f8 119px,#0f8 131px,#0f6 136px,#00ff6c 140px,#00ff8d 145px,#0fa 229px,#0fa 401px,#0f9 405px,#0fa 424px,#0f6 426px,#0f6 429px,#00ff90 431px,#00ff8d 439px,#0f4 441px,#0f4 449px,#0f7 450px,#0f7 451px,#0f7 458px,#00ff6e 459px,#00ff4c 460px,#00ff4d 467px)"></i><i style="left:269px;background:linear-gradient(#00ff71 1px,#0f7 18px,#7f0 19px,#9f0 21px,#8fff00 27px,#2eff00 28px,#0f3 29px,#0f6 30px,#0f7 31px,#00ff7c 81px,#00ff27 88px,#0f2 93px,#0f0 94px,#0f0 95px,#0f2 96px,#00ff28 112px,#00ff3a 114px,#0f7 117px,#0f8 119px,#00ff8d 131px,#00ff6f 136px,#00ff72 140px,#00ff93 145px,#0fa 229px,#0fa 401px,#0f9 405px,#0fa 424px,#0f6 426px,#0f6 429px,#00ff8d 431px,#0f8 439px,#0f4 441px,#0f4 449px,#0f7 450px,#0f7 451px,#0f7 458px,#0f6 459px,#0f4 460px,#0f4 467px)"></i><i style="left:270px;background:linear-gradient(#0f7 1px,#0f7 18px,#7f0 19px,#9f0 21px,#8fff00 27px,#2eff00 28px,#0f3 29px,#0f6 30px,#0f7 31px,#0f7 81px,#0f2 88px,#0f2 91px,#0f0 92px,#0f0 93px,#0f2 94px,#0f2 112px,#0f7 117px,#0f8 119px,#0f8 131px,#00ff6b 136px,#00ff6d 140px,#00ff8e 145px,#0fa 229px,#0fa 401px,#0f9 405px,#0fa 424px,#0f6 426px,#0f6 429px,#00ff94 431px,#00ff91 439px,#0f4 441px,#0f4 449px,#0f7 450px,#00ff7d 451px,#00ff7d 458px,#00ff72 459px,#00ff50 460px,#0f5 467px)"></i><i style="left:271px;background:linear-gradient(#00ff6f 1px,#00ff6f 18px,#7f0 19px,#9f0 21px,#92ff00 27px,#3f0 28px,#00ff2b 29px,#00ff61 30px,#00ff6f 31px,#00ff70 81px,#0f1 89px,#1f0 90px,#0f0 91px,#00ff17 92px,#00ff1b 112px,#0f6 117px,#0f7 119px,#0f7 131px,#00ff5d 136px,#00ff5f 140px,#00ff80 145px,#00ff9f 229px,#00ffb5 401px,#0fa 409px,#0fb 413px,#0fb 424px,#0f7 426px,#0f7 429px,#00ff9f 431px,#0f9 439px,#0f5 441px,#0f5 449px,#0f8 450px,#0f8 451px,#0f8 458px,#00ff7f 459px,#00ff5e 460px,#00ff5e 467px)"></i><i style="left:272px;background:linear-gradient(#00ff6f 1px,#00ff72 18px,#7f0 19px,#9f0 21px,#90ff00 27px,#3f0 28px,#0f3 29px,#0f6 30px,#0f7 31px,#0f7 81px,#00ff5f 84px,#00ff05 88px,#0f2 90px,#0f3 92px,#00ff39 112px,#0f8 119px,#00ff8d 131px,#00ff70 136px,#0f7 140px,#00ff94 145px,#0fa 229px,#0fa 401px,#0f9 405px,#0fa 424px,#0f6 426px,#0f6 429px,#00ff92 431px,#00ff90 439px,#0f4 441px,#0f4 449px,#0f7 450px,#00ff7c 451px,#00ff7c 458px,#00ff71 459px,#00ff50 460px,#00ff50 467px)"></i><i style="left:273px;background:linear-gradient(#00ff7c 1px,#00ff7d 18px,#6dff00 19px,#91ff00 21px,#8f0 27px,#29ff00 28px,#00ff39 29px,#00ff6f 30px,#00ff7d 31px,#00ff7f 79px,#00ff6e 82px,#00ff09 86px,#0f4 89px,#0f5 91px,#0f4 106px,#0f5 112px,#0f8 119px,#0f8 131px,#00ff6e 136px,#00ff70 140px,#00ff91 145px,#0fa 229px,#00ffb6 321px,#00ffb3 401px,#00ffa2 409px,#00ffb2 413px,#00ffb2 424px,#00ff6d 426px,#00ff6d 429px,#0f9 431px,#0f9 439px,#00ff4b 441px,#00ff4b 449px,#00ff7e 450px,#00ff7f 451px,#00ff7f 458px,#0f7 459px,#0f5 460px,#0f5 467px)"></i><i style="left:274px;background:linear-gradient(#00ff6c 1px,#00ff6f 18px,#7f0 19px,#9f0 21px,#91ff00 27px,#3f0 28px,#00ff2c 29px,#0f6 30px,#00ff71 31px,#0f7 76px,#00ff6b 79px,#00ff05 84px,#0f5 87px,#00ff6d 90px,#00ff70 98px,#0f5 102px,#0f5 105px,#0f7 110px,#0f8 119px,#00ff8d 131px,#00ff6f 136px,#00ff72 140px,#00ff94 145px,#0fa 229px,#00ffa3 401px,#00ff92 405px,#00ffa3 424px,#00ff5e 426px,#00ff5e 429px,#0f8 431px,#0f8 439px,#00ff3d 441px,#00ff3d 449px,#00ff70 450px,#00ff71 451px,#00ff71 458px,#0f6 459px,#0f4 460px,#0f4 467px)"></i><i style="left:275px;background:linear-gradient(#00ff6c 1px,#00ff6e 18px,#7f0 19px,#9f0 21px,#93ff00 27px,#3f0 28px,#00ff2a 29px,#00ff61 30px,#00ff6f 31px,#00ff72 74px,#0f5 77px,#0f0 81px,#00ff08 82px,#00ff6c 86px,#0f7 88px,#0f7 98px,#0f5 103px,#0f5 106px,#00ff7d 111px,#00ff83 131px,#0f6 136px,#0f6 140px,#0f8 145px,#00ffaf 229px,#0fb 321px,#00ffb1 401px,#00ffa0 408px,#00ffb0 413px,#0fa 424px,#0f6 426px,#0f6 429px,#00ff93 431px,#00ff8f 439px,#0f4 441px,#0f4 449px,#0f7 450px,#0f7 451px,#0f7 458px,#00ff6c 459px,#00ff4a 460px,#00ff49 467px)"></i><i style="left:276px;background:linear-gradient(#0f7 1px,#0f7 18px,#71ff00 19px,#9f0 21px,#8eff00 27px,#2dff00 28px,#0f3 29px,#0f6 30px,#0f7 31px,#0f7 71px,#00ff5e 74px,#00ff07 78px,#00ff0a 79px,#0f6 83px,#0f7 86px,#0f7 98px,#0f5 103px,#0f5 106px,#00ff7c 111px,#00ff80 131px,#0f6 136px,#0f6 140px,#0f8 145px,#0fa 321px,#00ffb2 401px,#00ffa2 405px,#00ffb4 424px,#00ff6f 426px,#00ff6f 429px,#0f9 431px,#0f9 439px,#00ff4f 441px,#00ff50 449px,#00ff83 450px,#0f8 451px,#0f8 458px,#0f7 459px,#0f5 460px,#0f5 467px)"></i><i style="left:277px;background:linear-gradient(#00ff72 1px,#0f7 18px,#7f0 19px,#9f0 21px,#8fff00 27px,#2eff00 28px,#0f3 29px,#0f6 30px,#0f7 31px,#0f7 69px,#0f6 71px,#00ff0c 75px,#0f2 77px,#0f6 80px,#0f7 83px,#0f7 98px,#00ff5a 103px,#00ff5c 106px,#00ff81 111px,#0f8 131px,#0f6 136px,#00ff6c 140px,#00ff8d 145px,#0fa 229px,#00ffb1 401px,#00ffa1 409px,#00ffb2 413px,#00ffb2 424px,#00ff6d 426px,#00ff6d 429px,#0f9 431px,#0f9 439px,#00ff4d 441px,#00ff4d 449px,#00ff80 450px,#00ff81 451px,#00ff81 458px,#0f7 459px,#0f5 460px,#0f5 467px)"></i><i style="left:278px;background:linear-gradient(#00ff83 1px,#00ff82 18px,#6f0 19px,#8dff00 21px,#8f0 27px,#2f0 28px,#00ff3e 29px,#0f7 30px,#00ff82 31px,#00ff7f 66px,#00ff6f 68px,#00ff19 72px,#00ff18 73px,#00ff6d 77px,#00ff81 80px,#00ff83 98px,#00ff61 102px,#00ff61 105px,#0f8 111px,#0f8 131px,#00ff6e 135px,#00ff6e 139px,#00ff90 145px,#0fa 229px,#0fa 401px,#00ff9e 405px,#00ffb0 424px,#00ff6c 426px,#00ff6c 429px,#0f9 431px,#00ff93 439px,#00ff4c 441px,#00ff4d 449px,#00ff7d 450px,#00ff7e 451px,#00ff7d 458px,#0f5 460px,#0f5 467px)"></i><i style="left:279px;background:linear-gradient(#00ff71 1px,#00ff72 18px,#7f0 19px,#9f0 21px,#90ff00 27px,#3f0 28px,#00ff2e 29px,#0f6 30px,#0f7 31px,#00ff71 63px,#0f6 65px,#0f1 69px,#00ff0c 70px,#00ff5f 74px,#0f7 78px,#0f7 98px,#0f5 103px,#0f5 106px,#00ff7c 111px,#00ff81 131px,#0f6 136px,#0f6 140px,#0f8 145px,#0fa 229px,#0fb 321px,#0fb 401px,#0fa 409px,#00ffb5 412px,#00ffb1 421px,#00ffaf 424px,#00ff72 426px,#00ff72 429px,#0f9 431px,#00ff8e 439px,#0f5 441px,#0f5 449px,#0f7 450px,#0f7 451px,#0f7 458px,#0f5 460px,#0f5 467px)"></i><i style="left:280px;background:linear-gradient(#0f7 1px,#0f7 18px,#7f0 19px,#9f0 21px,#8fff00 27px,#3f0 28px,#0f3 29px,#0f6 30px,#0f7 31px,#00ff6f 61px,#0f1 67px,#00ff5e 71px,#0f7 75px,#0f7 98px,#0f5 103px,#0f5 106px,#00ff7c 111px,#00ff82 131px,#0f6 136px,#0f6 140px,#0f8 145px,#0f9 229px,#00ffa1 386px,#0f8 405px,#0f8 424px,#00ff60 426px,#00ff61 429px,#0f7 431px,#0f7 439px,#00ff4a 441px,#00ff4b 449px,#00ff6c 450px,#00ff6d 451px,#00ff6f 458px,#0f5 460px,#0f5 467px)"></i><i style="left:281px;background:linear-gradient(#00ff81 1px,#00ff81 18px,#6bff00 19px,#8eff00 21px,#8f0 27px,#27ff00 28px,#00ff3c 29px,#0f7 30px,#00ff80 31px,#0f6 55px,#00ff50 61px,#00ff1c 64px,#0f7 69px,#00ff80 72px,#00ff81 98px,#00ff5f 103px,#00ff61 106px,#0f8 111px,#0f8 131px,#00ff6b 136px,#00ff6d 140px,#00ff8e 145px,#0fa 321px,#0f8 424px,#00ff70 426px,#00ff70 429px,#00ff83 431px,#00ff83 439px,#0f7 440px,#0f5 441px,#0f5 449px,#00ff7c 450px,#00ff7d 458px,#0f7 459px,#00ff5d 460px,#00ff5d 467px)"></i><i style="left:282px;background:linear-gradient(#00ff7c 1px,#00ff7d 18px,#6dff00 19px,#91ff00 21px,#8f0 27px,#2aff00 28px,#0f3 29px,#0f6 30px,#0f7 31px,#0f2 61px,#0f7 66px,#00ff7f 69px,#00ff83 98px,#00ff61 103px,#0f6 106px,#0f8 111px,#00ff8e 131px,#00ff70 136px,#0f7 140px,#00ff94 145px,#0fa 229px,#00ff9e 333px,#0f5 383px,#0f5 424px,#0f4 426px,#0f5 439px,#00ff3f 441px,#0f4 449px,#00ff4f 451px,#0f4 467px)"></i><i style="left:283px;background:linear-gradient(#0f7 1px,#0f7 18px,#70ff00 19px,#93ff00 21px,#8f0 27px,#3f0 28px,#0f2 29px,#0f4 30px,#0f4 31px,#0f2 42px,#00ff28 51px,#00ff4d 61px,#00ff71 63px,#00ff7e 66px,#0f8 98px,#0f6 103px,#0f6 106px,#0f8 111px,#00ff92 131px,#0f7 136px,#0f7 140px,#0f9 145px,#00ffb0 229px,#0fa 311px,#00ff5d 376px,#00ff4d 467px)"></i><i style="left:284px;background:linear-gradient(#00ff6c 1px,#0f5 18px,#7f0 19px,#9f0 21px,#93ff00 27px,#08ff00 29px,#0f1 30px,#00ff70 63px,#0f7 98px,#0f5 103px,#0f5 106px,#0f7 111px,#00ff81 131px,#0f6 135px,#0f6 139px,#0f8 145px,#0fa 229px,#00ffa5 297px,#0f7 345px,#0f6 346px,#2f0 347px,#3f0 348px,#4f0 363px,#00ff1d 364px,#0f6 365px,#0f4 467px)"></i><i style="left:285px;background:linear-gradient(#0f7 1px,#0f6 9px,#0f3 18px,#70ff00 19px,#93ff00 21px,#8f0 27px,#3aff00 28px,#0f2 29px,#00ff49 30px,#0f5 31px,#0f7 48px,#00ff81 97px,#00ff5e 103px,#00ff60 106px,#0f8 111px,#0f8 131px,#00ff6d 136px,#00ff70 140px,#00ff91 145px,#0fa 229px,#00ff9f 292px,#00ff6f 345px,#0f5 346px,#ff0 347px,#fe0 348px,#fe0 363px,#4bff00 364px,#00ff5a 365px,#00ff4a 386px,#0f4 467px)"></i><i style="left:286px;background:linear-gradient(#0f6 1px,#00ff27 12px,#00ff38 18px,#7f0 19px,#9f0 21px,#93ff00 27px,#3f0 28px,#00ff2e 29px,#0f6 30px,#0f7 32px,#0f7 97px,#0f5 103px,#0f5 106px,#00ff7d 111px,#00ff81 131px,#0f6 136px,#0f6 140px,#0f8 145px,#0f9 229px,#00ff94 284px,#0f5 345px,#00ff3a 346px,#ff0 347px,#fe0 348px,#fe0 363px,#6f0 364px,#00ff3b 365px,#00ff28 386px,#0f2 467px)"></i><i style="left:287px;background:linear-gradient(#0f4 1px,#0f3 7px,#0f7 18px,#7dff00 19px,#a1ff00 21px,#9f0 27px,#3f0 28px,#0f3 29px,#00ff70 30px,#00ff80 31px,#00ff7f 97px,#00ff5b 103px,#00ff5d 106px,#00ff82 111px,#0f8 131px,#0f6 135px,#0f6 139px,#0f8 145px,#00ffa1 229px,#00ff9e 284px,#00ff6b 345px,#00ff50 346px,#ff0 347px,#fe0 348px,#fe0 363px,#4eff00 364px,#0f5 365px,#00ff49 386px,#00ff49 467px)"></i><i style="left:288px;background:linear-gradient(#00ff3a 1px,#00ff6e 10px,#0f7 18px,#8f0 19px,#b1ff00 21px,#af0 27px,#4f0 28px,#0f3 29px,#00ff6b 30px,#0f7 31px,#00ff7f 97px,#00ff5c 103px,#00ff5e 106px,#00ff83 111px,#0f8 131px,#0f6 135px,#00ff6b 139px,#00ff8d 145px,#0fa 229px,#0fa 321px,#0f9 345px,#0f7 346px,#ff0 347px,#fe0 348px,#fe0 363px,#29ff00 364px,#0f8 365px,#00ff5b 467px)"></i><i style="left:289px;background:linear-gradient(#0f6 1px,#0f7 18px,#83ff00 19px,#af0 21px,#9fff00 27px,#3bff00 28px,#0f3 29px,#0f6 30px,#0f7 31px,#00ff81 97px,#00ff5f 103px,#00ff61 106px,#0f8 111px,#0f8 131px,#00ff6f 136px,#00ff71 140px,#00ff92 145px,#0fa 229px,#00ffa2 298px,#0f6 345px,#00ff4e 346px,#ff0 347px,#fe0 348px,#fff600 363px,#4f0 364px,#00ff50 365px,#00ff3f 467px)"></i><i style="left:290px;background:linear-gradient(#0f7 1px,#0f7 18px,#7f0 19px,#9f0 21px,#91ff00 27px,#3f0 28px,#0f3 29px,#0f6 30px,#0f7 31px,#00ff7c 97px,#0f5 103px,#00ff5b 106px,#00ff80 111px,#0f8 131px,#0f6 135px,#0f6 139px,#0f8 145px,#00ffa5 229px,#0fa 310px,#0f7 346px,#00ff5a 353px,#0f5 363px,#0f6 371px,#00ff6e 467px)"></i><i style="left:291px;background:linear-gradient(#0f7 1px,#0f7 18px,#6fff00 19px,#92ff00 21px,#8f0 27px,#2bff00 28px,#0f3 29px,#00ff6d 30px,#0f7 31px,#00ff80 97px,#00ff5e 103px,#00ff60 106px,#0f8 111px,#0f8 131px,#00ff6c 136px,#00ff6e 140px,#00ff8f 145px,#00ffaf 229px,#0fb 316px,#00ff92 349px,#0f5 353px,#00ff4a 367px,#00ff72 371px,#0f4 467px)"></i><i style="left:292px;background:linear-gradient(#00ff6c 1px,#00ff6d 18px,#7f0 19px,#9f0 21px,#93ff00 27px,#3f0 28px,#00ff29 29px,#00ff60 30px,#00ff6e 31px,#0f7 97px,#0f5 103px,#0f5 106px,#0f7 111px,#00ff80 131px,#0f6 136px,#0f6 140px,#0f8 145px,#00ff9e 229px,#00ffa1 336px,#0f8 349px,#00ff3d 353px,#0f3 367px,#0f5 371px,#0f5 467px)"></i><i style="left:293px;background:linear-gradient(#0f7 1px,#0f7 18px,#6fff00 19px,#92ff00 21px,#8f0 27px,#2aff00 28px,#0f3 29px,#00ff6d 30px,#0f7 31px,#00ff82 97px,#00ff60 103px,#0f6 106px,#0f8 111px,#00ff8d 131px,#00ff6f 136px,#00ff71 140px,#00ff92 145px,#0fa 229px,#0fa 341px,#00ffa3 349px,#00ff4e 353px,#0f4 367px,#0f7 371px,#0f6 387px,#0f5 467px)"></i><i style="left:294px;background:linear-gradient(#0f7 1px,#0f7 18px,#6fff00 19px,#93ff00 21px,#8f0 27px,#2bff00 28px,#0f3 29px,#00ff6b 30px,#0f7 31px,#0f7 97px,#0f5 103px,#0f5 106px,#00ff7c 111px,#00ff80 131px,#0f6 136px,#0f6 140px,#0f8 145px,#0fa 334px,#0f9 349px,#0f4 353px,#00ff3d 367px,#00ff6b 371px,#0f5 388px,#00ff49 467px)"></i><i style="left:295px;background:linear-gradient(#00ff6b 1px,#00ff6e 18px,#7f0 19px,#9f0 21px,#92ff00 27px,#3f0 28px,#00ff2b 29px,#0f6 30px,#00ff70 31px,#00ff7c 97px,#00ff5a 103px,#00ff5c 106px,#00ff82 111px,#0f8 131px,#00ff6c 136px,#00ff6f 140px,#00ff90 145px,#0fa 229px,#0fa 337px,#0f9 349px,#00ff4a 353px,#00ff3e 367px,#0f6 371px,#00ff3f 405px,#00ff27 467px)"></i><i style="left:296px;background:linear-gradient(#0f6 1px,#00ff6b 18px,#7f0 19px,#9f0 21px,#94ff00 27px,#3f0 28px,#00ff29 29px,#00ff5f 30px,#00ff6e 31px,#00ff7d 97px,#00ff5b 103px,#00ff5e 106px,#0f8 111px,#0f8 131px,#00ff6f 136px,#00ff72 140px,#00ff94 145px,#0fa 229px,#0fa 337px,#00ff9f 349px,#00ff72 353px,#0f6 367px,#0f7 371px,#0f5 441px,#0f5 467px)"></i><i style="left:297px;background:linear-gradient(#00ff70 1px,#00ff72 18px,#7f0 19px,#9f0 21px,#90ff00 27px,#3f0 28px,#00ff2e 29px,#0f6 30px,#0f7 31px,#0f7 97px,#0f5 103px,#00ff5b 106px,#00ff80 111px,#0f8 131px,#0f6 136px,#00ff6b 140px,#0f8 145px,#00ffa5 229px,#0fa 338px,#0f6 383px,#0f6 421px,#00ff60 424px,#00ff49 426px,#0f5 431px,#00ff4e 439px,#00ff3e 441px,#00ff3d 467px)"></i><i style="left:298px;background:linear-gradient(#0f6 1px,#0f6 18px,#7f0 19px,#9f0 21px,#9f0 27px,#3f0 28px,#0f2 29px,#00ff5b 30px,#0f6 31px,#0f7 97px,#00ff50 103px,#0f5 106px,#0f7 111px,#00ff7e 131px,#00ff61 136px,#0f6 140px,#0f8 145px,#00ffa5 229px,#00ffb0 321px,#0f7 423px,#00ff5b 426px,#00ff6b 431px,#0f6 439px,#00ff4a 441px,#00ff49 449px,#0f5 450px,#0f4 467px)"></i><i style="left:299px;background:linear-gradient(#0f7 1px,#0f7 18px,#6fff00 19px,#93ff00 21px,#8f0 27px,#2bff00 28px,#0f3 29px,#00ff6b 30px,#0f7 31px,#0f7 97px,#0f5 103px,#0f5 106px,#0f7 111px,#0f7 131px,#00ff5d 135px,#00ff5d 139px,#00ff7f 145px,#0fa 335px,#0f7 424px,#00ff5f 426px,#00ff6b 439px,#0f5 441px,#0f5 449px,#0f6 451px,#00ff5a 467px)"></i><i style="left:300px;background:linear-gradient(#00ff72 1px,#0f7 18px,#7f0 19px,#9f0 21px,#8fff00 27px,#2eff00 28px,#0f3 29px,#0f6 30px,#0f7 31px,#00ff7c 97px,#00ff5a 103px,#00ff5c 106px,#00ff81 111px,#0f8 131px,#0f6 136px,#00ff6c 140px,#00ff8e 145px,#0fa 229px,#0fa 321px,#00ff9e 349px,#00ff5d 405px,#00ff5b 424px,#0f4 426px,#00ff50 439px,#00ff3a 441px,#00ff39 449px,#0f4 451px,#00ff38 467px)"></i><i style="left:301px;background:linear-gradient(#0f7 1px,#0f7 18px,#70ff00 19px,#93ff00 21px,#8f0 27px,#2bff00 28px,#0f3 29px,#00ff6b 30px,#0f7 31px,#00ff82 97px,#00ff60 103px,#0f6 106px,#0f8 111px,#00ff8d 131px,#00ff70 136px,#00ff72 140px,#00ff94 145px,#0fa 228px,#00ffa4 299px,#00ff5c 384px,#0f6 424px,#0f5 426px,#0f6 439px,#00ff4a 441px,#00ff4a 449px,#00ff5d 451px,#0f5 467px)"></i><i style="left:302px;background:linear-gradient(#00ff7d 1px,#00ff7c 18px,#6eff00 19px,#91ff00 21px,#8f0 27px,#2aff00 28px,#0f3 29px,#00ff6d 30px,#0f7 31px,#0f7 97px,#0f5 103px,#0f5 106px,#00ff7c 111px,#00ff7c 131px,#00ff61 135px,#00ff61 139px,#00ff83 145px,#00ff9e 227px,#0f8 236px,#00ff72 254px,#00ff83 270px,#0f6 283px,#00ff6c 297px,#0f5 311px,#0f4 338px,#0f1 341px,#1f0 342px,#3f0 344px,#3cff00 384px,#6f0 386px,#cf0 389px,#df0 390px,#d6ff00 400px,#cf0 401px,#9eff00 402px,#0f0 404px,#00ff2d 405px,#0f5 407px,#0f5 412px,#00ff5e 467px)"></i><i style="left:303px;background:linear-gradient(#00ff72 1px,#0f7 18px,#7f0 19px,#9f0 21px,#8fff00 27px,#2eff00 28px,#0f3 29px,#0f6 30px,#0f7 31px,#0f7 97px,#0f5 103px,#00ff5a 106px,#00ff7e 110px,#00ff83 120px,#0f5 125px,#0f5 129px,#00ff6c 133px,#0f6 140px,#0f8 144px,#00ff94 172px,#00ff4c 178px,#00ff4e 200px,#00ff9f 206px,#0fa 227px,#0f7 236px,#0f7 243px,#0f5 255px,#00ff6b 269px,#00ff4a 283px,#0f5 297px,#0f4 311px,#0f5 326px,#00ff49 338px,#00ff3f 339px,#0f0 341px,#7f0 343px,#8f0 344px,#91ff00 384px,#9eff00 385px,#ef0 387px,#fff700 388px,#ffe700 390px,#ffe800 400px,#ff0 402px,#bf0 403px,#4bff00 404px,#00ff1b 405px,#00ff2b 407px,#00ff2c 429px,#0f5 434px,#0f5 467px)"></i><i style="left:304px;background:linear-gradient(#00ff6f 1px,#00ff70 18px,#7f0 19px,#9f0 21px,#91ff00 27px,#3f0 28px,#00ff2d 29px,#0f6 30px,#00ff72 31px,#0f7 97px,#0f5 103px,#00ff5b 106px,#00ff7e 110px,#00ff83 120px,#0f5 125px,#0f5 129px,#00ff6d 133px,#00ff6b 140px,#0f8 144px,#0f9 172px,#00ff4e 178px,#0f5 200px,#00ffa2 206px,#00ffa4 219px,#00ffa2 228px,#00ff6f 236px,#00ff6e 243px,#00ff4b 255px,#00ff61 269px,#0f4 284px,#0f5 297px,#0f4 312px,#0f5 325px,#00ff4c 337px,#0f5 353px,#00ff4e 374px,#00ff2d 386px,#00ff4a 406px,#0f4 467px)"></i><i style="left:305px;background:linear-gradient(#0f7 1px,#0f7 18px,#72ff00 19px,#9f0 21px,#8eff00 27px,#2dff00 28px,#0f3 29px,#0f6 30px,#0f7 31px,#00ff80 97px,#00ff5e 103px,#00ff61 106px,#0f8 111px,#0f8 131px,#00ff6f 136px,#00ff72 140px,#00ff93 145px,#00ffa4 206px,#00ff9f 227px,#00ff6d 236px,#00ff4b 255px,#00ff5e 269px,#0f4 283px,#0f5 298px,#0f4 313px,#0f5 326px,#00ff3d 373px,#0f0 385px,#0cff00 386px,#4f0 389px,#38ff00 416px,#3f0 417px,#00ff0a 419px,#0f3 421px,#00ff39 422px,#0f3 467px)"></i><i style="left:306px;background:linear-gradient(#0f7 1px,#0f7 18px,#71ff00 19px,#9f0 21px,#8dff00 27px,#2dff00 28px,#0f3 29px,#0f6 30px,#0f7 31px,#00ff7f 97px,#00ff5d 103px,#00ff5f 106px,#0f8 111px,#0f8 131px,#00ff6d 136px,#00ff6f 140px,#00ff91 145px,#00ff9f 196px,#0f9 227px,#0f6 236px,#00ff49 255px,#00ff5e 269px,#0f4 284px,#0f5 297px,#0f4 312px,#0f5 326px,#00ff4f 372px,#0f4 376px,#00ff1c 377px,#05ff00 382px,#1f0 386px,#0f0 390px,#00ff0a 392px,#0f3 394px,#00ff3a 397px,#00ff4f 422px,#00ff4a 467px)"></i><i style="left:307px;background:linear-gradient(#0f6 1px,#0f6 18px,#7f0 19px,#9f0 21px,#9f0 27px,#3f0 28px,#0f2 29px,#00ff5c 30px,#0f6 31px,#00ff6f 97px,#00ff4c 103px,#00ff4e 106px,#0f7 111px,#0f7 131px,#00ff5a 136px,#00ff5d 140px,#00ff7e 145px,#00ff8d 195px,#00ff83 227px,#0f5 236px,#00ff3a 255px,#00ff4c 269px,#00ff38 284px,#00ff4b 326px,#0f3 371px,#0f2 376px,#0f0 377px,#3f0 381px,#4f0 385px,#3f0 389px,#3f0 403px,#00ff0a 406px,#00ff28 409px,#0f1 426px,#00ff19 467px)"></i><i style="left:308px;background:linear-gradient(#0f7 1px,#00ff7d 18px,#70ff00 19px,#94ff00 21px,#8dff00 27px,#2bff00 28px,#00ff38 29px,#00ff6f 30px,#00ff7d 31px,#00ff81 97px,#00ff5e 103px,#00ff60 106px,#0f8 111px,#0f8 131px,#00ff6c 136px,#00ff6e 140px,#00ff8f 145px,#0f9 197px,#00ff93 227px,#0f6 236px,#0f4 255px,#0f5 269px,#0f4 283px,#00ff50 298px,#0f4 313px,#00ff4f 326px,#00ff3d 371px,#0f3 375px,#0f0 378px,#4f0 382px,#5f0 385px,#4cff00 387px,#0f0 392px,#00ff2d 394px,#00ff3a 398px,#00ff3d 410px,#0f2 415px,#0f2 441px,#0f2 456px,#00ff3a 460px,#00ff3b 467px)"></i><i style="left:309px;background:linear-gradient(#00ff4b 1px,#0f7 7px,#00ff7f 18px,#7f0 19px,#9f0 21px,#93ff00 27px,#3f0 28px,#00ff38 29px,#00ff71 30px,#00ff80 31px,#00ff83 97px,#00ff61 103px,#0f6 106px,#0f8 111px,#00ff8d 131px,#00ff6f 136px,#00ff71 140px,#00ff92 145px,#00ffa2 206px,#0f9 227px,#0f6 236px,#0f4 255px,#0f5 269px,#0f4 284px,#00ff50 297px,#00ff3e 312px,#00ff4e 326px,#0f4 371px,#0f3 375px,#00ff2a 376px,#00ff06 377px,#6f0 383px,#7f0 385px,#6f0 387px,#08ff00 392px,#0f1 393px,#0f3 394px,#00ff3a 396px,#0f0 400px,#0f0 422px,#0f2 425px,#0f0 428px,#0f0 441px,#0f1 444px,#0f1 461px,#0f4 465px,#0f4 467px)"></i><i style="left:310px;background:linear-gradient(#0f4 1px,#00ff2a 6px,#0f6 13px,#0f7 18px,#8f0 19px,#af0 21px,#a3ff00 27px,#3fff00 28px,#00ff2d 29px,#0f6 30px,#0f7 31px,#00ff7f 97px,#00ff5c 103px,#00ff5e 106px,#00ff83 111px,#0f8 131px,#00ff6c 136px,#00ff6e 140px,#00ff8f 145px,#00ffa4 213px,#0f9 227px,#0f6 236px,#00ff4b 255px,#00ff5b 269px,#0f4 284px,#0f5 298px,#0f4 312px,#00ff50 326px,#0f4 371px,#0f3 375px,#00ff29 376px,#0f0 377px,#8f0 383px,#9f0 385px,#8f0 387px,#1f0 392px,#0f1 393px,#00ff2e 394px,#0f4 397px,#0f4 424px,#00ff27 428px,#0f2 441px,#00ff4d 467px)"></i><i style="left:311px;background:linear-gradient(#0f7 1px,#0f6 5px,#00ff2b 13px,#0f4 18px,#8f0 19px,#b1ff00 21px,#af0 27px,#4f0 28px,#00ff2c 29px,#0f6 30px,#0f7 33px,#0f7 97px,#0f5 103px,#0f5 106px,#0f7 111px,#00ff7d 131px,#00ff5f 135px,#00ff5f 139px,#00ff81 145px,#0f9 220px,#0f9 228px,#0f7 236px,#00ff5b 254px,#00ff5e 328px,#0f4 371px,#0f2 376px,#06ff00 377px,#af0 383px,#bf0 385px,#90ff00 388px,#00ff06 393px,#0f2 394px,#00ff39 397px,#07ff00 402px,#0cff00 441px,#00ff29 445px,#0f3 467px)"></i><i style="left:312px;background:linear-gradient(#0f3 1px,#00ff5c 6px,#0f6 10px,#0f3 18px,#8fff00 19px,#b1ff00 22px,#af0 27px,#4f0 28px,#0f2 29px,#00ff5b 30px,#0f4 31px,#0f6 33px,#00ff6b 35px,#0f7 97px,#0f5 103px,#0f5 106px,#0f7 111px,#00ff82 131px,#0f6 136px,#0f6 140px,#0f8 145px,#00ffa0 228px,#00ff6f 259px,#00ff5e 281px,#0f4 371px,#0f2 376px,#09ff00 377px,#af0 382px,#cf0 384px,#c1ff00 387px,#00ff0b 393px,#00ff2a 394px,#0f4 397px,#0f4 430px,#00ff09 433px,#2f0 434px,#3f0 435px,#2f0 455px,#00ff0a 456px,#0f6 459px,#0f6 467px)"></i><i style="left:313px;background:linear-gradient(#00ff3c 1px,#0f2 6px,#0f6 14px,#00ff6d 18px,#7fff00 19px,#a2ff00 21px,#9f0 27px,#39ff00 28px,#00ff2a 29px,#0f6 30px,#0f0 31px,#0f6 35px,#00ff72 38px,#0f7 97px,#0f5 103px,#0f5 106px,#0f7 111px,#00ff81 131px,#0f6 136px,#0f6 140px,#0f8 145px,#00ffa1 239px,#00ff60 273px,#00ff3e 371px,#00ff1c 376px,#1f0 377px,#bf0 382px,#cf0 383px,#cf0 387px,#bf0 388px,#00ff08 393px,#0f3 395px,#00ff4e 400px,#00ff6d 467px)"></i><i style="left:314px;background:linear-gradient(#0f7 1px,#00ff6c 5px,#00ff2e 13px,#00ff4a 18px,#72ff00 19px,#9f0 21px,#8eff00 27px,#2dff00 28px,#0f3 29px,#00ff6d 30px,#0f1 31px,#06ff00 33px,#0f6 37px,#0f7 40px,#00ff7d 97px,#00ff5a 103px,#00ff5c 106px,#00ff81 111px,#0f8 131px,#0f6 135px,#0f6 139px,#0f8 145px,#0fa 251px,#00ff6f 284px,#00ff6e 332px,#00ff50 370px,#0f4 374px,#0f2 376px,#0f0 377px,#c7ff00 382px,#cf0 383px,#c7ff00 388px,#00ff08 393px,#0f3 395px,#00ff4f 400px,#0f5 467px)"></i><i style="left:315px;background:linear-gradient(#0f6 1px,#0f7 11px,#0f4 18px,#7f0 19px,#9f0 21px,#90ff00 27px,#3f0 28px,#0f3 29px,#00ff6b 30px,#00ff5d 31px,#0f0 34px,#1f0 35px,#0f0 36px,#00ff5c 39px,#0f7 43px,#00ff7e 97px,#00ff5b 103px,#00ff5d 106px,#00ff82 111px,#0f8 131px,#0f6 135px,#0f6 139px,#00ff8d 145px,#0fa 231px,#0fa 265px,#0f6 295px,#00ff60 336px,#00ff38 371px,#0f1 376px,#2f0 377px,#cf0 382px,#cf0 388px,#3dff00 392px,#3aff00 393px,#39ff00 425px,#09ff00 427px,#0f1 428px,#0f3 431px,#00ff29 467px)"></i><i style="left:316px;background:linear-gradient(#0f1 1px,#0f5 10px,#0f6 18px,#8f0 19px,#af0 21px,#a5ff00 27px,#4f0 28px,#0f2 29px,#0f5 30px,#0f6 31px,#0f5 33px,#0f0 36px,#2cff00 37px,#2dff00 38px,#06ff00 39px,#0f5 42px,#0f6 46px,#0f7 97px,#0f5 103px,#0f5 106px,#00ff7d 111px,#0f8 131px,#0f6 136px,#00ff6c 140px,#0f8 144px,#0f9 161px,#0fa 274px,#0f6 305px,#00ff61 333px,#00ff3b 371px,#00ff16 376px,#18ff00 377px,#c7ff00 382px,#cf0 383px,#c7ff00 388px,#0bff00 393px,#0f1 394px,#0f3 397px,#00ff38 401px,#00ff39 467px)"></i><i style="left:317px;background:linear-gradient(#00ff6f 1px,#0f3 9px,#00ff70 18px,#82ff00 19px,#af0 21px,#9eff00 27px,#3aff00 28px,#0f3 29px,#00ff6e 30px,#00ff7e 31px,#00ff71 35px,#0f0 39px,#19ff00 40px,#0f0 41px,#00ff70 45px,#00ff7d 48px,#00ff7d 97px,#00ff5a 103px,#00ff5c 106px,#00ff81 111px,#0f8 131px,#0f6 136px,#0f6 140px,#0f8 145px,#00ff9f 286px,#00ff4f 316px,#0f2 371px,#00ff06 376px,#a0ff00 381px,#cf0 383px,#bf0 388px,#00ff0b 394px,#0f2 397px,#00ff2e 401px,#0f3 467px)"></i><i style="left:318px;background:linear-gradient(#00ff7e 1px,#0f7 8px,#0f3 18px,#7f0 19px,#9eff00 21px,#9f0 27px,#3f0 28px,#0f3 29px,#00ff6d 30px,#00ff7c 31px,#0f7 37px,#0f5 39px,#0f1 41px,#1f0 43px,#00ff0b 44px,#0f6 47px,#0f7 50px,#0f7 97px,#0f5 103px,#0f5 106px,#00ff7d 111px,#00ff81 131px,#0f6 136px,#0f6 140px,#0f8 145px,#00ffa1 297px,#0f5 327px,#00ff28 372px,#00ff0c 376px,#af0 382px,#cf0 384px,#c1ff00 387px,#1f0 393px,#0f1 394px,#00ff2a 397px,#0f3 401px,#00ff3a 467px)"></i><i style="left:319px;background:linear-gradient(#00ff6d 1px,#00ff6d 13px,#00ff5c 18px,#7f0 19px,#9f0 21px,#9f0 27px,#3f0 28px,#00ff2a 29px,#00ff61 30px,#00ff70 31px,#00ff6c 39px,#0f5 41px,#0f1 43px,#17ff00 44px,#28ff00 45px,#1aff00 46px,#0f1 47px,#0f6 50px,#00ff71 53px,#0f7 97px,#0f5 103px,#0f5 106px,#00ff7d 111px,#00ff83 131px,#0f6 136px,#0f6 140px,#0f8 145px,#0fa 229px,#00ffaf 309px,#00ff6d 342px,#00ff5c 372px,#00ff4d 375px,#0f0 378px,#82ff00 382px,#b3ff00 384px,#bf0 385px,#b3ff00 386px,#81ff00 388px,#00ff05 392px,#0f4 394px,#0f6 399px,#00ff71 467px)"></i><i style="left:320px;background:linear-gradient(#00ff71 1px,#0f7 18px,#7f0 19px,#9f0 21px,#90ff00 27px,#3f0 28px,#0f3 29px,#0f6 30px,#0f7 31px,#00ff6e 42px,#00ff4b 44px,#00ff05 46px,#2f0 47px,#2f0 48px,#0f0 49px,#0f6 52px,#0f7 55px,#00ff7f 97px,#00ff5d 103px,#00ff5f 106px,#0f8 111px,#0f8 131px,#00ff6e 135px,#00ff6e 138px,#00ff90 144px,#0f9 161px,#0fa 229px,#0fa 322px,#0f9 331px,#00ff4e 351px,#00ff3d 373px,#00ff27 376px,#0f0 377px,#8f0 383px,#9f0 385px,#8f0 387px,#1f0 392px,#0f1 393px,#0f3 395px,#0f4 399px,#0f4 436px,#00ff3c 442px,#00ff0b 446px,#00ff0a 467px)"></i><i style="left:321px;background:linear-gradient(#00ff7e 1px,#00ff7f 18px,#6cff00 19px,#90ff00 21px,#8f0 27px,#28ff00 28px,#00ff3b 29px,#00ff71 30px,#00ff7f 31px,#0f7 44px,#00ff61 46px,#0f0 49px,#2f0 50px,#06ff00 51px,#0f7 55px,#00ff80 59px,#0f8 97px,#0f6 103px,#0f6 106px,#0f8 111px,#00ff8f 131px,#00ff71 136px,#0f7 140px,#0f9 145px,#00ffb2 329px,#00ff6e 355px,#00ff61 373px,#00ff4b 376px,#0f2 377px,#0cff00 380px,#5f0 383px,#6f0 385px,#5f0 387px,#00ff07 391px,#0f1 392px,#00ff50 394px,#0f6 402px,#00ff50 407px,#00ff4e 430px,#0f2 434px,#0f0 441px,#00ff05 467px)"></i><i style="left:322px;background:linear-gradient(#0f7 1px,#0f7 18px,#6fff00 19px,#92ff00 21px,#8f0 27px,#2bff00 28px,#0f3 29px,#00ff6c 30px,#0f7 31px,#00ff72 47px,#00ff4d 49px,#00ff05 51px,#2f0 52px,#28ff00 53px,#0f0 54px,#00ff28 55px,#00ff5d 58px,#0f7 64px,#0f7 98px,#0f5 103px,#00ff5a 106px,#00ff7f 111px,#00ff83 131px,#0f6 136px,#0f6 140px,#0f8 145px,#0fa 321px,#00ffa5 335px,#0f5 358px,#0f4 373px,#0f3 376px,#00ff0b 377px,#0f0 378px,#4aff00 383px,#5f0 385px,#0f0 394px,#1f0 426px,#0f0 429px,#0f0 443px,#0f2 448px,#0f2 467px)"></i><i style="left:323px;background:linear-gradient(#00ff7c 1px,#00ff7c 18px,#6eff00 19px,#91ff00 21px,#8f0 27px,#2aff00 28px,#0f3 29px,#00ff6e 30px,#00ff7c 31px,#0f7 49px,#00ff5c 51px,#00ff18 53px,#1f0 54px,#3f0 55px,#1f0 57px,#00ff09 58px,#0f6 63px,#0f7 68px,#00ff7e 98px,#00ff5c 103px,#00ff5e 106px,#00ff83 111px,#0f8 131px,#0f6 136px,#00ff6b 140px,#0f8 145px,#0fa 229px,#0fa 329px,#0f9 338px,#0f5 358px,#00ff3f 374px,#0f3 376px,#0f1 377px,#0f0 379px,#3aff00 385px,#0f0 392px,#0f1 393px,#0f2 395px,#0f2 401px,#00ff09 408px,#0f1 447px,#00ff1a 452px,#00ff39 456px,#00ff3c 467px)"></i><i style="left:324px;background:linear-gradient(#0f7 1px,#0f7 18px,#71ff00 19px,#9f0 21px,#8eff00 27px,#2dff00 28px,#0f3 29px,#0f6 30px,#0f7 31px,#0f7 51px,#0f6 53px,#0f2 55px,#09ff00 57px,#3f0 59px,#3f0 60px,#1f0 62px,#0f6 68px,#0f7 73px,#00ff7c 98px,#00ff5a 103px,#00ff5c 106px,#00ff81 111px,#0f8 131px,#0f6 136px,#00ff6b 140px,#0f8 144px,#00ff91 161px,#0fa 329px,#0f9 338px,#0f4 358px,#00ff3b 375px,#0f3 376px,#0f1 377px,#0f0 380px,#2f0 385px,#0f0 391px,#00ff06 392px,#0f3 394px,#00ff3a 402px,#0f0 408px,#0f0 431px,#17ff00 434px,#0cff00 448px,#0f1 452px,#00ff17 463px,#00ff3e 467px)"></i><i style="left:325px;background:linear-gradient(#00ff6d 1px,#00ff6e 18px,#7f0 19px,#9f0 21px,#92ff00 27px,#3f0 28px,#00ff2b 29px,#00ff61 30px,#00ff6f 31px,#00ff70 53px,#00ff4d 57px,#0f1 60px,#0aff00 61px,#4f0 64px,#3bff00 65px,#0aff00 67px,#00ff5b 72px,#00ff72 77px,#0f7 98px,#0f5 103px,#0f5 106px,#00ff7c 111px,#00ff82 131px,#0f6 136px,#0f6 140px,#0f8 145px,#00ffa3 231px,#00ffa2 331px,#00ff3e 358px,#0f3 375px,#00ff2d 376px,#00ff0b 377px,#0f0 380px,#1aff00 385px,#0f0 391px,#0f0 392px,#00ff2d 394px,#0f3 397px,#00ff2e 467px)"></i><i style="left:326px;background:linear-gradient(#0f7 1px,#00ff7d 18px,#6dff00 19px,#91ff00 21px,#8f0 27px,#29ff00 28px,#00ff39 29px,#00ff6f 30px,#00ff7d 31px,#00ff7e 56px,#00ff61 61px,#0f1 65px,#0aff00 66px,#3fff00 68px,#2eff00 70px,#08ff00 71px,#0f6 76px,#00ff7f 81px,#0f8 98px,#0f6 103px,#0f6 106px,#0f8 111px,#00ff8f 131px,#00ff71 136px,#0f7 140px,#0f9 145px,#00ffaf 229px,#0fa 332px,#00ff5e 358px,#0f5 375px,#00ff4d 376px,#00ff28 377px,#0f1 385px,#0f2 392px,#00ff4f 394px,#0f5 396px,#00ff38 467px)"></i><i style="left:327px;background:linear-gradient(#0f6 1px,#00ff6c 18px,#7f0 19px,#9f0 21px,#94ff00 27px,#3f0 28px,#00ff28 29px,#00ff5f 30px,#00ff6d 31px,#00ff6e 60px,#0f5 65px,#00ff09 69px,#4aff00 72px,#5f0 73px,#0f1 77px,#00ff5a 81px,#00ff71 86px,#0f7 98px,#0f5 103px,#0f5 106px,#0f7 111px,#00ff80 131px,#0f6 136px,#0f6 140px,#0f8 145px,#0fa 229px,#00ffb4 321px,#0f8 375px,#0f6 384px,#0f8 401px,#0f6 424px,#00ff4f 426px,#00ff3e 467px)"></i><i style="left:328px;background:linear-gradient(#00ff70 1px,#00ff72 18px,#7f0 19px,#9f0 21px,#90ff00 27px,#3f0 28px,#00ff2e 29px,#0f6 30px,#0f7 31px,#0f7 65px,#0f5 70px,#0f0 74px,#4f0 76px,#5f0 77px,#3eff00 79px,#0f0 81px,#0f6 86px,#0f7 91px,#0f7 98px,#0f5 103px,#0f5 106px,#00ff7f 111px,#0f8 131px,#0f6 136px,#0f6 140px,#0f8 145px,#0fa 229px,#0fa 335px,#00ffa0 374px,#00ff8f 385px,#00ffa1 396px,#00ff93 409px,#00ffa2 416px,#0f9 424px,#00ff5b 426px,#0f5 429px,#00ff71 431px,#00ff5e 439px,#00ff3f 441px,#00ff3e 449px,#00ff4c 451px,#0f4 467px)"></i><i style="left:329px;background:linear-gradient(#0f7 1px,#0f7 18px,#72ff00 19px,#9f0 21px,#8eff00 27px,#2dff00 28px,#0f3 29px,#0f6 30px,#0f7 31px,#0f7 69px,#00ff5d 74px,#00ff0a 78px,#5f0 81px,#5f0 82px,#4eff00 83px,#1f0 85px,#0f1 86px,#00ff61 90px,#0f7 95px,#00ff5a 105px,#00ff80 111px,#0f8 131px,#0f6 135px,#0f6 139px,#0f8 145px,#0fa 229px,#00ffa3 385px,#00ffb0 401px,#00ffa0 405px,#00ffb1 424px,#00ff6d 426px,#00ff6c 429px,#0f9 431px,#0f8 439px,#00ff4d 441px,#00ff4d 449px,#0f6 450px,#0f5 467px)"></i><i style="left:330px;background:linear-gradient(#0f7 1px,#0f7 18px,#7f0 19px,#9f0 21px,#8fff00 27px,#2eff00 28px,#0f3 29px,#0f6 30px,#0f7 31px,#0f7 73px,#00ff60 78px,#0f1 82px,#1f0 83px,#5f0 85px,#60ff00 86px,#4f0 88px,#0f0 90px,#0f5 94px,#0f7 98px,#0f5 102px,#0f5 105px,#00ff7e 111px,#00ff83 131px,#0f6 135px,#0f6 139px,#0f8 145px,#00ffa4 229px,#0fa 401px,#00ff9e 405px,#00ffb0 424px,#00ff6b 426px,#00ff6c 429px,#0f9 431px,#00ff94 439px,#00ff4c 441px,#00ff4c 449px,#0f7 450px,#00ff71 458px,#0f5 460px,#0f5 467px)"></i><i style="left:331px;background:linear-gradient(#00ff72 1px,#00ff72 18px,#7f0 19px,#9f0 21px,#91ff00 27px,#3f0 28px,#00ff2d 29px,#0f6 30px,#00ff72 31px,#00ff72 77px,#00ff60 82px,#05ff00 87px,#4eff00 89px,#6cff00 91px,#60ff00 92px,#00ff07 95px,#00ff3a 97px,#0f5 99px,#0f5 106px,#0f7 111px,#00ff7e 131px,#00ff60 135px,#00ff60 139px,#00ff83 145px,#00ff9e 229px,#0fa 401px,#0f9 409px,#0fa 413px,#0fa 424px,#0f6 426px,#0f6 429px,#00ff8e 431px,#0f8 439px,#0f4 441px,#0f4 449px,#0f7 450px,#0f7 451px,#00ff71 458px,#0f4 460px,#0f4 467px)"></i><i style="left:332px;background:linear-gradient(#00ff7c 1px,#00ff7c 18px,#6eff00 19px,#91ff00 21px,#8f0 27px,#2aff00 28px,#0f3 29px,#00ff6d 30px,#00ff7c 31px,#0f7 82px,#0f6 87px,#0f1 91px,#6f0 94px,#7f0 95px,#5f0 97px,#07ff00 99px,#0f1 100px,#00ff4a 104px,#00ff81 111px,#0f8 131px,#0f6 135px,#0f6 139px,#0f8 145px,#00ffa1 229px,#0fa 401px,#0f9 409px,#0fa 413px,#0fa 424px,#0f6 426px,#0f6 429px,#00ff90 431px,#00ff8e 439px,#0f4 441px,#0f4 449px,#0f7 450px,#0f7 451px,#0f7 458px,#00ff6f 459px,#00ff4d 460px,#00ff4b 467px)"></i><i style="left:333px;background:linear-gradient(#00ff7d 1px,#00ff7d 18px,#6dff00 19px,#91ff00 21px,#8f0 27px,#29ff00 28px,#00ff39 29px,#00ff6f 30px,#00ff7d 31px,#00ff7d 86px,#0f6 91px,#00ff1a 95px,#05ff00 96px,#61ff00 98px,#7fff00 100px,#5f0 102px,#06ff00 104px,#0f1 105px,#00ff6c 109px,#00ff83 113px,#0f8 131px,#0f6 136px,#00ff6c 140px,#00ff8d 145px,#00ffa2 229px,#00ffa5 401px,#0f9 405px,#0fa 424px,#00ff61 426px,#00ff61 429px,#0f8 431px,#0f8 439px,#0f4 441px,#0f4 449px,#0f7 450px,#0f7 451px,#0f7 458px,#00ff6b 459px,#00ff49 460px,#00ff49 467px)"></i><i style="left:334px;background:linear-gradient(#00ff72 1px,#00ff72 18px,#7f0 19px,#9f0 21px,#90ff00 27px,#3f0 28px,#00ff2e 29px,#0f6 30px,#00ff72 31px,#00ff72 90px,#0f6 95px,#0f4 97px,#0f1 99px,#1f0 100px,#6f0 102px,#92ff00 104px,#7f0 106px,#00ff0a 109px,#0f4 111px,#0f6 113px,#0f7 122px,#00ff7d 131px,#00ff60 135px,#00ff60 139px,#00ff82 145px,#0f9 229px,#0fa 401px,#0f9 405px,#0fa 424px,#0f6 426px,#0f6 429px,#00ff94 431px,#00ff92 439px,#00ff49 441px,#00ff49 449px,#00ff7d 450px,#00ff7e 451px,#00ff7f 458px,#0f7 459px,#0f5 460px,#0f5 467px)"></i><i style="left:335px;background:linear-gradient(#00ff7d 1px,#00ff7d 18px,#6dff00 19px,#90ff00 21px,#8f0 27px,#29ff00 28px,#00ff39 29px,#00ff6f 30px,#00ff7e 31px,#00ff7f 95px,#00ff6b 99px,#0f0 104px,#7eff00 107px,#9f0 109px,#60ff00 111px,#00ff08 113px,#00ff5c 123px,#00ff7e 131px,#0f6 136px,#00ff6c 140px,#00ff8e 145px,#0fa 229px,#0fa 401px,#0f9 409px,#0fa 413px,#0fa 424px,#0f6 426px,#0f6 429px,#00ff94 431px,#00ff91 439px,#0f4 441px,#0f4 449px,#0f7 450px,#00ff7c 451px,#00ff7c 458px,#00ff71 459px,#00ff4f 460px,#00ff4f 467px)"></i><i style="left:336px;background:linear-gradient(#0f7 1px,#0f7 18px,#71ff00 19px,#94ff00 21px,#8dff00 27px,#2cff00 28px,#0f3 29px,#0f6 30px,#0f7 31px,#00ff7e 97px,#00ff4a 104px,#0f1 108px,#1f0 109px,#7f0 111px,#9f0 112px,#af0 114px,#90ff00 119px,#0f0 127px,#00ff2e 131px,#0f5 140px,#0f8 145px,#0f9 183px,#0fa 401px,#0f9 405px,#0fa 424px,#0f6 426px,#0f6 429px,#00ff94 431px,#00ff92 439px,#00ff49 441px,#00ff4a 449px,#00ff7d 450px,#00ff7e 451px,#00ff7f 458px,#0f7 459px,#0f5 460px,#0f5 467px)"></i><i style="left:337px;background:linear-gradient(#00ff7d 1px,#00ff7f 18px,#6cff00 19px,#90ff00 21px,#8f0 27px,#28ff00 28px,#00ff3b 29px,#00ff72 30px,#00ff80 31px,#00ff81 51px,#0f1 57px,#0f1 86px,#00ff2e 88px,#00ff7c 91px,#0f8 97px,#0f6 102px,#0f6 109px,#0f0 114px,#6f0 119px,#9f0 126px,#71ff00 133px,#2f0 139px,#0f0 140px,#00ff0a 141px,#0f6 150px,#0f9 161px,#00ffb3 229px,#0fa 401px,#0f9 405px,#0fa 424px,#0f6 426px,#0f6 429px,#00ff91 431px,#00ff8e 439px,#0f4 441px,#0f4 449px,#0f7 450px,#0f7 451px,#0f7 458px,#00ff6d 459px,#00ff4b 460px,#00ff4b 467px)"></i><i style="left:338px;background:linear-gradient(#0f7 1px,#0f7 18px,#72ff00 19px,#9f0 21px,#8eff00 27px,#2dff00 28px,#0f3 29px,#0f6 30px,#0f7 31px,#0f7 97px,#0f5 103px,#00ff6f 111px,#00ff05 127px,#6f0 135px,#7f0 141px,#6f0 146px,#0f0 154px,#00ff5e 165px,#0f8 175px,#00ffa0 229px,#0fa 401px,#00ff9e 405px,#00ffb0 424px,#00ff6b 426px,#00ff6b 429px,#0f9 431px,#00ff94 439px,#00ff4c 441px,#00ff4c 449px,#00ff7f 450px,#00ff81 451px,#00ff81 458px,#0f7 459px,#0f5 460px,#0f5 467px)"></i><i style="left:339px;background:linear-gradient(#0f7 1px,#0f7 18px,#71ff00 19px,#94ff00 21px,#8dff00 27px,#2cff00 28px,#0f3 29px,#0f6 30px,#0f7 31px,#00ff7f 97px,#00ff5c 102px,#00ff5a 105px,#00ff7d 111px,#00ff60 129px,#00ff2e 135px,#00ff05 145px,#39ff00 151px,#49ff00 156px,#3f0 161px,#0f0 165px,#0f6 178px,#00ff8f 187px,#0fa 229px,#0fa 401px,#0f9 405px,#0fa 424px,#0f6 426px,#0f6 429px,#00ff91 431px,#00ff8f 439px,#0f4 441px,#0f4 449px,#0f7 450px,#00ff7c 451px,#00ff7c 458px,#00ff71 459px,#00ff50 460px,#00ff50 467px)"></i><i style="left:340px;background:linear-gradient(#0f6 1px,#00ff6b 18px,#7f0 19px,#9f0 21px,#94ff00 27px,#3f0 28px,#00ff28 29px,#00ff5f 30px,#00ff6d 31px,#0f7 97px,#0f5 102px,#0f5 105px,#0f7 110px,#0f7 114px,#00ff6f 131px,#00ff4e 135px,#00ff49 139px,#00ff5a 145px,#0f0 163px,#2f0 170px,#0f0 177px,#0f6 192px,#00ff8e 200px,#0fa 229px,#0fa 401px,#0f9 409px,#0fa 413px,#0fa 424px,#0f6 426px,#0f6 429px,#00ff8f 431px,#0f8 439px,#0f4 441px,#0f4 449px,#0f7 450px,#0f7 451px,#0f7 458px,#00ff6c 459px,#00ff4a 460px,#00ff4a 467px)"></i><i style="left:341px;background:linear-gradient(#00ff81 1px,#00ff80 18px,#6bff00 19px,#8fff00 21px,#8f0 27px,#28ff00 28px,#00ff3b 29px,#00ff71 30px,#00ff7f 31px,#00ff7c 97px,#0f5 102px,#0f5 105px,#0f7 111px,#00ff6d 131px,#00ff4c 136px,#00ff4b 140px,#0f6 144px,#00ff61 156px,#00ff07 180px,#0f0 187px,#00ff18 194px,#0f7 210px,#0f9 221px,#0fa 321px,#0fa 401px,#0f9 405px,#0fa 424px,#0f6 426px,#0f6 429px,#00ff93 431px,#00ff90 439px,#0f4 441px,#0f4 449px,#0f7 450px,#0f7 451px,#0f7 458px,#00ff70 459px,#00ff4e 460px,#00ff4e 467px)"></i><i style="left:342px;background:linear-gradient(#0f7 1px,#0f7 18px,#6eff00 19px,#92ff00 21px,#8f0 27px,#2aff00 28px,#0f3 29px,#00ff6d 30px,#00ff7c 31px,#00ff7e 97px,#00ff5a 102px,#0f5 105px,#0f7 110px,#0f7 130px,#0f5 135px,#0f5 139px,#00ff70 144px,#0f7 162px,#0f6 176px,#00ff1c 200px,#00ff2b 207px,#00ff8e 228px,#00ffa3 281px,#00ffa4 401px,#00ff94 405px,#00ffa5 424px,#00ff60 426px,#00ff60 429px,#0f8 431px,#0f8 439px,#0f4 441px,#00ff3f 449px,#00ff72 450px,#0f7 451px,#0f7 458px,#0f6 459px,#0f4 460px,#0f4 467px)"></i><i style="left:343px;background:linear-gradient(#0f7 1px,#0f7 18px,#71ff00 19px,#9f0 21px,#8eff00 27px,#2dff00 28px,#0f3 29px,#0f6 30px,#0f7 31px,#0f7 97px,#0f5 102px,#0f5 105px,#0f7 110px,#00ff6c 130px,#00ff4b 135px,#00ff4a 139px,#0f6 145px,#00ff71 180px,#0f3 214px,#0f5 229px,#00ffa1 296px,#00ffaf 401px,#00ffa0 409px,#00ffb1 413px,#00ffb2 424px,#00ff6e 426px,#00ff6e 429px,#0f9 431px,#0f9 439px,#00ff4e 441px,#00ff4f 449px,#00ff82 450px,#0f8 451px,#0f8 458px,#0f7 459px,#0f5 460px,#0f5 467px)"></i><i style="left:344px;background:linear-gradient(#00ff81 1px,#00ff80 18px,#6bff00 19px,#8fff00 21px,#8f0 27px,#27ff00 28px,#00ff3c 29px,#00ff72 30px,#00ff80 31px,#00ff7f 97px,#00ff5b 102px,#0f5 105px,#0f7 110px,#0f7 130px,#0f5 135px,#00ff50 139px,#00ff70 145px,#0f7 189px,#0f4 224px,#0f4 253px,#0f6 289px,#00ff91 302px,#00ff9f 313px,#0fa 401px,#0f9 409px,#0fa 413px,#00ffaf 424px,#00ff6b 426px,#00ff6b 429px,#0f9 431px,#00ff94 439px,#00ff4b 441px,#00ff4c 449px,#00ff7f 450px,#00ff81 451px,#00ff81 458px,#0f7 459px,#0f5 460px,#0f5 467px)"></i><i style="left:345px;background:linear-gradient(#0f7 1px,#0f7 18px,#6fff00 19px,#92ff00 21px,#8f0 27px,#2bff00 28px,#0f3 29px,#00ff6c 30px,#0f7 31px,#00ff7e 95px,#00ff7d 98px,#0f5 103px,#00ff5a 106px,#00ff7c 111px,#0f7 131px,#0f5 135px,#0f5 139px,#0f7 145px,#00ff7d 190px,#0f4 291px,#0f9 322px,#0fa 349px,#0fa 401px,#0f9 409px,#0fa 413px,#0fa 424px,#0f6 426px,#0f6 429px,#00ff93 431px,#00ff90 439px,#0f4 441px,#0f4 449px,#0f7 450px,#00ff7c 451px,#00ff7c 458px,#00ff71 459px,#00ff4f 460px,#00ff4f 467px)"></i><i style="left:346px;background:linear-gradient(#0f7 1px,#0f7 18px,#71ff00 19px,#9f0 21px,#8dff00 27px,#2dff00 28px,#0f3 29px,#0f6 30px,#0f7 31px,#00ff7c 96px,#0f5 103px,#0f5 106px,#0f7 111px,#00ff72 131px,#0f5 135px,#0f5 139px,#00ff72 145px,#0f7 189px,#00ff3d 308px,#00ff4c 317px,#0f9 340px,#0fa 371px,#0fa 401px,#0f9 409px,#0fa 413px,#0fa 424px,#0f6 426px,#0f6 429px,#00ff8d 431px,#0f8 439px,#0f4 441px,#0f4 449px,#0f7 450px,#0f7 451px,#0f7 458px,#0f6 459px,#00ff49 460px,#00ff49 467px)"></i><i style="left:347px;background:linear-gradient(#00ff72 1px,#0f7 18px,#7f0 19px,#9f0 21px,#8fff00 27px,#3f0 28px,#0f3 29px,#0f6 30px,#0f7 31px,#0f7 96px,#0f5 103px,#0f5 106px,#0f7 111px,#00ff71 131px,#0f5 135px,#0f5 139px,#00ff72 145px,#00ff7c 189px,#0f5 259px,#0f4 325px,#0f9 361px,#00ffaf 394px,#00ff9f 409px,#00ffb0 413px,#00ffb0 424px,#00ff6b 426px,#00ff6b 429px,#0f9 431px,#00ff94 439px,#00ff4b 441px,#00ff4b 449px,#00ff7e 450px,#00ff80 451px,#00ff80 458px,#0f7 459px,#0f5 460px,#0f5 467px)"></i><i style="left:348px;background:linear-gradient(#0f6 1px,#0f6 18px,#7f0 19px,#9f0 21px,#9f0 27px,#3f0 28px,#0f2 29px,#00ff5b 30px,#0f6 31px,#00ff70 96px,#00ff4c 103px,#00ff4c 106px,#00ff6e 111px,#0f6 131px,#0f4 135px,#0f4 139px,#0f6 145px,#0f7 190px,#00ff4d 261px,#00ff4e 321px,#00ff3c 345px,#0fa 396px,#0f9 409px,#00ffa5 413px,#00ffa5 424px,#00ff60 426px,#00ff60 429px,#0f8 431px,#0f8 439px,#00ff3e 441px,#00ff3e 449px,#00ff71 450px,#00ff72 451px,#00ff71 458px,#0f6 459px,#0f4 460px,#0f4 467px)"></i><i style="left:349px;background:linear-gradient(#0f7 1px,#0f7 18px,#70ff00 19px,#94ff00 21px,#8dff00 27px,#2cff00 28px,#0f3 29px,#0f6 30px,#0f7 31px,#0f7 96px,#0f5 103px,#0f5 106px,#0f7 111px,#00ff70 131px,#00ff50 135px,#00ff4f 139px,#00ff6f 145px,#0f7 189px,#0f4 263px,#0f3 368px,#00ff60 391px,#0f9 394px,#00ffa5 397px,#0f9 409px,#0fa 413px,#0fa 424px,#0f6 426px,#0f6 429px,#00ff91 431px,#00ff8f 439px,#0f4 441px,#0f4 449px,#0f7 450px,#0f7 451px,#00ff7c 458px,#00ff71 459px,#00ff4f 460px,#00ff50 467px)"></i><i style="left:350px;background:linear-gradient(#00ff5d 1px,#00ff60 18px,#7fff00 19px,#a2ff00 21px,#9f0 27px,#3aff00 28px,#00ff1d 29px,#0f5 30px,#0f6 31px,#00ff70 97px,#00ff4d 102px,#00ff4c 105px,#00ff6e 110px,#00ff6b 130px,#00ff4b 135px,#00ff4a 139px,#00ff6c 145px,#0f7 184px,#00ff4c 263px,#00ff49 358px,#0f3 391px,#0f4 393px,#00ff91 397px,#0fa 401px,#0f9 409px,#0fa 413px,#0fa 424px,#00ff61 426px,#00ff61 429px,#0f8 431px,#0f8 439px,#0f4 441px,#00ff3f 449px,#00ff72 450px,#0f7 451px,#0f7 458px,#0f6 459px,#0f4 460px,#0f4 467px)"></i><i style="left:351px;background:linear-gradient(#0f6 1px,#0f6 18px,#7f0 19px,#9f0 21px,#9f0 27px,#3f0 28px,#0f2 29px,#00ff5d 30px,#00ff6b 31px,#00ff72 97px,#00ff4f 102px,#00ff4d 105px,#00ff6f 110px,#0f6 130px,#00ff4a 135px,#00ff49 139px,#0f6 145px,#0f7 186px,#00ff4b 265px,#00ff4b 390px,#0f3 395px,#00ffa1 402px,#0f9 409px,#0fa 413px,#0fa 424px,#0f6 426px,#0f6 429px,#00ff8f 431px,#0f8 439px,#0f4 441px,#0f4 449px,#0f7 450px,#0f7 451px,#0f7 458px,#00ff6b 459px,#00ff4a 460px,#00ff49 467px)"></i><i style="left:352px;background:linear-gradient(#0f7 1px,#0f7 18px,#6fff00 19px,#92ff00 21px,#8f0 27px,#2bff00 28px,#0f3 29px,#00ff6c 30px,#0f7 31px,#00ff7c 96px,#0f5 103px,#0f5 106px,#0f7 111px,#00ff70 131px,#00ff4f 136px,#00ff4f 140px,#00ff6f 145px,#0f7 188px,#0f4 267px,#00ff5a 391px,#00ff38 398px,#0f9 405px,#00ffb2 414px,#00ffb3 424px,#00ff6e 426px,#00ff6e 429px,#0f9 431px,#0f9 439px,#00ff4e 441px,#00ff4f 449px,#00ff82 450px,#00ff83 451px,#0f8 458px,#0f7 459px,#0f5 460px,#0f5 467px)"></i><i style="left:353px;background:linear-gradient(#00ff83 1px,#00ff83 18px,#6f0 19px,#8dff00 21px,#8f0 27px,#2f0 28px,#00ff3e 29px,#0f7 30px,#00ff82 31px,#00ff80 96px,#00ff5a 103px,#00ff5b 106px,#00ff7c 111px,#00ff72 131px,#0f5 135px,#00ff50 139px,#00ff70 145px,#0f7 187px,#00ff3c 269px,#0f4 375px,#0f5 394px,#00ff2c 402px,#0f8 408px,#00ffa5 412px,#0fa 424px,#0f6 426px,#0f6 429px,#00ff90 431px,#00ff8d 439px,#0f4 441px,#0f4 449px,#0f7 450px,#0f7 451px,#0f7 458px,#00ff70 459px,#00ff4e 460px,#00ff4f 467px)"></i><i style="left:354px;background:linear-gradient(#00ff7e 1px,#00ff80 18px,#6bff00 19px,#8fff00 21px,#8f0 27px,#27ff00 28px,#00ff3c 29px,#0f7 30px,#00ff81 31px,#0f8 97px,#0f6 102px,#0f6 105px,#0f8 110px,#00ff80 130px,#00ff60 135px,#00ff5e 139px,#00ff7f 145px,#0f8 182px,#00ff4a 269px,#0f4 376px,#00ff60 397px,#00ff5b 400px,#0f3 405px,#0f4 407px,#0fa 413px,#0fa 424px,#0f6 426px,#0f6 429px,#0f9 431px,#00ff92 439px,#00ff49 441px,#00ff49 449px,#00ff7c 450px,#00ff7e 451px,#00ff7e 458px,#0f7 459px,#0f5 460px,#0f5 467px)"></i><i style="left:355px;background:linear-gradient(#00ff6e 1px,#00ff6f 18px,#7f0 19px,#9f0 21px,#92ff00 27px,#3f0 28px,#00ff2b 29px,#0f6 30px,#00ff70 31px,#0f7 97px,#0f5 102px,#00ff50 105px,#00ff72 110px,#00ff6c 130px,#00ff4b 135px,#00ff4a 139px,#00ff6b 145px,#0f7 186px,#0f4 268px,#0f4 377px,#0f6 401px,#00ff2d 409px,#0f9 415px,#0fa 420px,#0fa 424px,#0f6 426px,#0f6 429px,#00ff91 431px,#00ff8d 439px,#0f4 441px,#0f4 449px,#0f7 450px,#0f7 451px,#0f7 458px,#00ff6d 459px,#00ff4b 460px,#00ff4b 467px)"></i><i style="left:356px;background:linear-gradient(#00ff83 1px,#00ff82 18px,#6f0 19px,#8eff00 21px,#8f0 27px,#2f0 28px,#00ff3d 29px,#0f7 30px,#00ff81 31px,#00ff7f 97px,#00ff5a 102px,#0f5 105px,#0f7 110px,#00ff72 130px,#00ff50 135px,#00ff4f 139px,#00ff6e 145px,#0f7 193px,#0f4 269px,#0f4 377px,#0f6 402px,#00ff5c 407px,#0f3 412px,#0f4 414px,#00ffa3 419px,#00ffb0 424px,#00ff6b 426px,#00ff6b 429px,#0f9 431px,#00ff94 439px,#00ff4b 441px,#00ff4b 449px,#00ff7e 450px,#00ff80 451px,#00ff80 458px,#0f7 459px,#0f5 460px,#0f5 467px)"></i><i style="left:357px;background:linear-gradient(#0f7 1px,#0f7 18px,#72ff00 19px,#9f0 21px,#8fff00 27px,#2eff00 28px,#0f3 29px,#0f6 30px,#0f7 31px,#00ff7c 97px,#0f5 102px,#0f5 105px,#0f7 110px,#0f7 130px,#0f5 135px,#0f5 139px,#00ff72 145px,#00ff7e 185px,#0f4 269px,#00ff3f 377px,#0f6 407px,#0f5 411px,#00ff27 416px,#00ff5c 419px,#0f8 420px,#00ffa0 421px,#0fa 424px,#0f6 426px,#0f6 429px,#00ff8e 431px,#0f8 439px,#0f4 441px,#0f4 449px,#0f7 450px,#0f7 451px,#0f7 458px,#00ff6b 459px,#00ff49 460px,#00ff49 467px)"></i><i style="left:358px;background:linear-gradient(#0f7 1px,#0f7 18px,#70ff00 19px,#94ff00 21px,#8f0 27px,#2cff00 28px,#0f3 29px,#00ff6b 30px,#0f7 31px,#00ff81 97px,#00ff5d 102px,#00ff5c 105px,#00ff7e 110px,#0f7 130px,#0f5 135px,#0f5 139px,#0f7 145px,#0f8 184px,#0f4 269px,#00ff3b 377px,#0f6 412px,#0f2 419px,#00ff38 420px,#00ff91 422px,#00ffa4 424px,#00ff60 426px,#00ff60 429px,#0f8 431px,#0f8 439px,#00ff3f 441px,#00ff3e 449px,#00ff71 450px,#0f7 451px,#0f7 458px,#0f6 459px,#0f4 460px,#0f4 467px)"></i><i style="left:359px;background:linear-gradient(#00ff7d 1px,#00ff7e 18px,#6dff00 19px,#90ff00 21px,#8f0 27px,#28ff00 28px,#00ff3a 29px,#00ff70 30px,#00ff7e 31px,#00ff81 97px,#00ff5d 102px,#00ff5b 105px,#00ff7d 110px,#0f7 130px,#0f5 135px,#0f5 139px,#0f7 145px,#00ff7e 190px,#0f4 269px,#00ff4a 378px,#0f8 414px,#00ff6f 418px,#00ff39 421px,#00ffaf 424px,#0f7 426px,#0f7 429px,#00ffa2 431px,#00ffa0 439px,#0f5 441px,#0f5 449px,#0f8 450px,#0f8 451px,#0f8 458px,#00ff81 459px,#00ff60 460px,#00ff60 467px)"></i><i style="left:360px;background:linear-gradient(#00ff71 1px,#0f7 18px,#7f0 19px,#9f0 21px,#8fff00 27px,#3f0 28px,#0f3 29px,#0f6 30px,#0f7 31px,#0f7 95px,#0f7 98px,#0f5 103px,#0f5 106px,#0f7 111px,#00ff71 131px,#0f5 135px,#0f5 139px,#00ff72 145px,#00ff7c 185px,#00ff3b 261px,#00ff38 321px,#00ff3d 380px,#00ff7d 417px,#0f7 419px,#00ff2e 422px,#0f3 423px,#0f6 424px,#0f7 425px,#0f6 426px,#00ff6d 429px,#0f9 431px,#0f9 439px,#00ff4d 441px,#00ff4e 449px,#00ff81 450px,#00ff83 451px,#00ff83 458px,#0f7 459px,#0f5 460px,#0f5 467px)"></i><i style="left:361px;background:linear-gradient(#00ff71 1px,#00ff72 18px,#7f0 19px,#9f0 21px,#90ff00 27px,#3f0 28px,#00ff2e 29px,#0f6 30px,#0f7 31px,#0f7 97px,#0f5 102px,#0f5 105px,#0f7 110px,#00ff6e 130px,#00ff4d 135px,#00ff4c 139px,#00ff6c 145px,#0f7 188px,#0f3 269px,#00ff3c 378px,#00ff7f 419px,#0f7 421px,#00ff29 424px,#00ff61 427px,#0f6 429px,#0f9 431px,#00ff93 439px,#00ff4b 441px,#00ff4b 449px,#00ff7e 450px,#00ff7f 451px,#00ff7f 458px,#0f7 459px,#0f5 460px,#0f5 467px)"></i><i style="left:362px;background:linear-gradient(#0f7 1px,#0f7 18px,#6fff00 19px,#92ff00 21px,#8f0 27px,#2aff00 28px,#0f3 29px,#00ff6d 30px,#0f7 31px,#00ff7d 97px,#0f5 102px,#0f5 105px,#0f7 110px,#0f7 130px,#0f5 135px,#00ff50 139px,#00ff71 145px,#0f7 189px,#00ff3b 269px,#0f4 378px,#0f8 421px,#0f7 423px,#0f3 425px,#0f3 426px,#0f9 431px,#0f9 439px,#0f5 441px,#0f5 449px,#0f8 450px,#0f8 451px,#0f8 458px,#0f7 459px,#0f5 460px,#0f5 467px)"></i><i style="left:363px;background:linear-gradient(#00ff72 1px,#0f7 18px,#7f0 19px,#9f0 21px,#8fff00 27px,#2eff00 28px,#0f3 29px,#0f6 30px,#0f7 31px,#0f7 96px,#0f5 103px,#0f5 106px,#0f7 111px,#00ff70 131px,#00ff50 135px,#00ff4f 139px,#00ff6f 145px,#0f7 184px,#00ff38 262px,#0f3 375px,#0f7 422px,#0f7 424px,#0f2 427px,#00ff3f 429px,#0f8 431px,#00ff8e 439px,#0f4 441px,#0f4 449px,#0f7 450px,#0f7 451px,#0f7 458px,#00ff6d 459px,#00ff4c 460px,#00ff4b 467px)"></i><i style="left:364px;background:linear-gradient(#00ff7e 1px,#00ff7e 18px,#6cff00 19px,#90ff00 21px,#8f0 27px,#28ff00 28px,#00ff3a 29px,#00ff70 30px,#00ff7e 31px,#00ff81 97px,#00ff5d 102px,#00ff5b 105px,#00ff7d 110px,#0f7 130px,#0f5 135px,#0f5 139px,#0f7 145px,#00ff7c 185px,#0f3 263px,#0f3 375px,#0f7 424px,#0f2 429px,#0f3 430px,#00ff7e 432px,#0f8 433px,#00ff8e 439px,#0f4 441px,#0f4 449px,#0f7 450px,#0f7 451px,#0f7 458px,#00ff70 459px,#00ff4e 460px,#00ff4e 467px)"></i><i style="left:365px;background:linear-gradient(#0f7 1px,#0f7 18px,#72ff00 19px,#9f0 21px,#8fff00 27px,#2eff00 28px,#0f3 29px,#0f6 30px,#0f7 31px,#0f7 97px,#0f5 102px,#0f5 105px,#0f7 110px,#00ff6d 130px,#00ff4c 135px,#00ff4b 139px,#00ff6b 145px,#0f7 187px,#0f2 269px,#00ff29 378px,#0f7 424px,#0f5 426px,#0f2 431px,#0f8 434px,#00ff90 437px,#00ff90 439px,#0f4 441px,#0f4 449px,#0f7 450px,#00ff7d 451px,#00ff7e 458px,#0f7 459px,#0f5 460px,#0f5 467px)"></i><i style="left:366px;background:linear-gradient(#0f7 1px,#0f7 18px,#70ff00 19px,#93ff00 21px,#8f0 27px,#2bff00 28px,#0f3 29px,#00ff6b 30px,#0f7 31px,#00ff7d 95px,#00ff7c 98px,#0f5 103px,#0f5 106px,#0f7 111px,#00ff72 131px,#0f5 135px,#0f5 139px,#00ff71 145px,#0f7 184px,#0f3 262px,#00ff28 375px,#00ff71 424px,#00ff4e 426px,#0f4 430px,#00ff1d 432px,#0f2 433px,#00ff6f 435px,#00ff82 436px,#0f8 439px,#00ff3f 441px,#00ff3f 449px,#00ff72 450px,#0f7 451px,#0f7 458px,#0f6 459px,#0f4 460px,#0f4 467px)"></i><i style="left:367px;background:linear-gradient(#00ff6f 1px,#00ff71 18px,#7f0 19px,#9f0 21px,#91ff00 27px,#3f0 28px,#00ff2e 29px,#0f6 30px,#00ff72 31px,#0f7 96px,#0f5 103px,#0f5 106px,#0f7 111px,#0f7 131px,#0f5 135px,#0f5 139px,#0f7 145px,#00ff7c 188px,#00ff2c 268px,#00ff2b 378px,#0f7 424px,#0f5 426px,#0f6 431px,#0f2 434px,#0f3 435px,#00ff83 437px,#00ff93 439px,#00ff4b 441px,#00ff4b 449px,#00ff7e 450px,#00ff80 451px,#00ff80 458px,#0f7 459px,#0f5 460px,#0f5 467px)"></i><i style="left:368px;background:linear-gradient(#0f7 1px,#0f7 18px,#6fff00 19px,#92ff00 21px,#8f0 27px,#2bff00 28px,#0f3 29px,#00ff6c 30px,#0f7 31px,#0f7 97px,#0f5 102px,#0f5 105px,#0f7 110px,#00ff6d 130px,#00ff4c 135px,#00ff4a 139px,#0f6 145px,#00ff72 187px,#00ff28 266px,#00ff29 378px,#0f7 424px,#0f5 426px,#0f6 432px,#0f2 436px,#0f8 439px,#00ff72 440px,#0f4 441px,#0f4 449px,#0f7 450px,#0f7 451px,#0f7 458px,#00ff70 459px,#00ff4e 460px,#00ff4e 467px)"></i><i style="left:369px;background:linear-gradient(#0f8 1px,#00ff7e 18px,#6f0 19px,#8f0 21px,#8f0 27px,#2f0 28px,#00ff3c 29px,#00ff70 30px,#00ff7d 31px,#0f7 97px,#0f5 102px,#0f5 105px,#00ff72 110px,#0f6 130px,#00ff4c 135px,#00ff4a 139px,#0f6 145px,#00ff6b 187px,#0f2 266px,#0f2 378px,#00ff71 424px,#0f5 426px,#0f5 429px,#0f6 431px,#00ff61 434px,#0f2 437px,#00ff28 438px,#00ff6c 440px,#0f4 441px,#0f4 449px,#0f7 450px,#00ff7c 451px,#00ff7c 458px,#00ff71 459px,#00ff4f 460px,#00ff50 467px)"></i><i style="left:370px;background:linear-gradient(#00ff50 1px,#0f3 4px,#0f3 18px,#7f0 19px,#9f0 21px,#91ff00 27px,#00ff0a 29px,#00ff2a 30px,#0f3 31px,#0f2 226px,#00ff3d 232px,#0f2 264px,#0f2 377px,#00ff6d 424px,#00ff4d 426px,#00ff4e 429px,#0f6 431px,#0f6 435px,#00ff1c 439px,#0f4 440px,#0f4 449px,#0f7 450px,#0f7 451px,#0f7 458px,#00ff6f 459px,#00ff4d 460px,#00ff4e 467px)"></i><i style="left:371px;background:linear-gradient(#00ff5f 1px,#0f4 4px,#00ff3f 18px,#6cff00 19px,#90ff00 21px,#8f0 27px,#3bff00 28px,#00ff18 29px,#00ff38 30px,#00ff3e 31px,#00ff2b 139px,#00ff2e 226px,#00ff3e 232px,#00ff2a 257px,#00ff29 377px,#0f7 424px,#0f5 426px,#0f5 429px,#00ff6d 431px,#0f6 437px,#00ff4a 439px,#00ff28 440px,#00ff4e 442px,#00ff4f 449px,#00ff82 450px,#0f8 451px,#0f8 458px,#0f7 459px,#0f5 460px,#0f5 467px)"></i><i style="left:372px;background:linear-gradient(#00ff71 1px,#00ff6e 18px,#71ff00 19px,#9f0 21px,#8eff00 27px,#3f0 28px,#00ff2e 29px,#00ff61 30px,#00ff6e 31px,#0f7 97px,#0f5 102px,#0f5 105px,#00ff70 110px,#00ff6f 116px,#0f2 122px,#0f2 135px,#0f2 377px,#00ff71 424px,#0f5 426px,#0f5 429px,#0f6 431px,#0f6 438px,#0f6 439px,#00ff27 441px,#00ff4d 443px,#00ff4e 449px,#00ff81 450px,#00ff83 451px,#00ff83 458px,#0f7 459px,#0f5 460px,#0f5 467px)"></i><i style="left:373px;background:linear-gradient(#0f6 1px,#00ff6d 18px,#7f0 19px,#9f0 21px,#93ff00 27px,#3f0 28px,#00ff2a 29px,#00ff61 30px,#00ff6f 31px,#00ff7c 97px,#0f5 103px,#0f5 106px,#0f7 110px,#0f7 116px,#00ff4a 122px,#00ff3b 135px,#00ff4b 145px,#00ff50 184px,#0f2 268px,#00ff1c 378px,#00ff6e 424px,#0f5 426px,#0f5 429px,#0f6 431px,#0f6 439px,#00ff2e 441px,#00ff29 442px,#00ff4d 444px,#00ff4e 449px,#00ff81 450px,#00ff83 451px,#00ff83 458px,#0f7 459px,#0f5 460px,#0f5 467px)"></i><i style="left:374px;background:linear-gradient(#0f7 1px,#0f7 18px,#71ff00 19px,#94ff00 21px,#8dff00 27px,#2dff00 28px,#0f3 29px,#0f6 30px,#0f7 31px,#0f7 97px,#0f5 102px,#0f5 105px,#0f7 110px,#00ff72 116px,#0f6 131px,#00ff49 135px,#0f4 139px,#0f6 145px,#00ff6f 186px,#0f2 264px,#0f2 378px,#0f6 424px,#00ff4a 426px,#00ff5d 431px,#00ff5d 439px,#0f2 442px,#0f2 443px,#0f4 445px,#0f4 449px,#0f7 450px,#0f7 451px,#0f7 458px,#00ff6c 459px,#00ff4a 460px,#00ff49 467px)"></i><i style="left:375px;background:linear-gradient(#0f7 1px,#00ff7d 18px,#6dff00 19px,#90ff00 21px,#8f0 27px,#28ff00 28px,#00ff3a 29px,#00ff70 30px,#00ff7e 31px,#0f8 96px,#0f6 103px,#0f6 106px,#0f8 111px,#00ff7d 131px,#00ff5e 135px,#00ff5d 139px,#00ff7e 145px,#0f8 187px,#0f2 266px,#0f2 378px,#0f7 424px,#0f5 426px,#00ff6c 439px,#0f3 443px,#00ff38 444px,#0f5 445px,#0f5 449px,#0f8 450px,#0f8 451px,#0f8 458px,#00ff81 459px,#00ff5f 460px,#00ff5f 467px)"></i><i style="left:376px;background:linear-gradient(#00ff80 1px,#00ff80 18px,#6bff00 19px,#8fff00 21px,#8f0 27px,#27ff00 28px,#00ff3c 29px,#00ff72 30px,#00ff80 31px,#00ff80 97px,#00ff5c 102px,#00ff5a 105px,#00ff7c 110px,#0f7 130px,#0f5 135px,#0f5 139px,#00ff72 145px,#0f7 185px,#0f1 266px,#0f1 378px,#0f6 424px,#00ff4c 426px,#00ff5f 439px,#0f2 444px,#00ff4b 445px,#00ff4c 449px,#00ff7f 450px,#00ff81 451px,#00ff81 458px,#0f7 459px,#0f5 460px,#0f5 467px)"></i><i style="left:377px;background:linear-gradient(#00ff6e 1px,#00ff70 18px,#7f0 19px,#9f0 21px,#91ff00 27px,#3f0 28px,#00ff2d 29px,#0f6 30px,#00ff72 31px,#0f7 97px,#0f5 103px,#0f5 106px,#0f7 111px,#0f7 131px,#0f5 135px,#0f5 139px,#0f7 145px,#00ff7e 188px,#0f2 265px,#0f2 378px,#0f6 424px,#00ff50 426px,#00ff60 439px,#0f4 441px,#00ff3b 444px,#00ff4b 445px,#00ff4e 449px,#00ff81 450px,#00ff82 451px,#00ff82 458px,#0f7 459px,#0f5 460px,#0f5 467px)"></i><i style="left:378px;background:linear-gradient(#00ff71 1px,#00ff72 18px,#7f0 19px,#9f0 21px,#91ff00 27px,#3f0 28px,#00ff2d 29px,#0f6 30px,#00ff72 31px,#0f7 97px,#0f5 102px,#00ff4f 105px,#00ff71 110px,#0f6 130px,#00ff49 135px,#0f4 139px,#0f6 145px,#00ff71 186px,#0f1 266px,#0f1 378px,#00ff60 423px,#00ff49 426px,#0f5 439px,#00ff3e 441px,#0f4 444px,#00ff49 449px,#00ff7c 450px,#00ff7d 451px,#00ff7d 458px,#0f7 459px,#0f5 460px,#0f5 467px)"></i><i style="left:379px;background:linear-gradient(#0f7 1px,#0f7 18px,#71ff00 19px,#94ff00 21px,#8dff00 27px,#2cff00 28px,#0f3 29px,#0f6 30px,#0f7 31px,#0f7 97px,#0f5 102px,#0f5 105px,#0f7 110px,#00ff71 130px,#0f5 135px,#00ff4f 139px,#00ff70 145px,#0f7 185px,#0f1 266px,#0f1 378px,#0f6 423px,#00ff4b 426px,#00ff5b 439px,#0f4 441px,#0f4 443px,#00ff4d 449px,#00ff80 450px,#00ff81 451px,#00ff82 458px,#0f7 459px,#0f5 460px,#0f5 467px)"></i><i style="left:380px;background:linear-gradient(#00ff71 1px,#0f7 18px,#7f0 19px,#9f0 21px,#8fff00 27px,#2eff00 28px,#0f3 29px,#0f6 30px,#0f7 31px,#00ff7e 97px,#0f5 103px,#00ff5a 106px,#00ff7c 111px,#0f7 131px,#0f5 135px,#0f5 139px,#0f7 145px,#00ff7d 187px,#0f2 247px,#0f1 267px,#00ff09 378px,#0f5 423px,#0f4 426px,#00ff50 439px,#0f3 441px,#00ff38 443px,#0f4 449px,#0f7 450px,#0f7 451px,#0f7 458px,#00ff6c 459px,#00ff4b 460px,#00ff4b 467px)"></i><i style="left:381px;background:linear-gradient(#0f7 1px,#0f7 18px,#6fff00 19px,#92ff00 21px,#8f0 27px,#2aff00 28px,#0f3 29px,#00ff6d 30px,#00ff7c 31px,#0f8 97px,#00ff5f 103px,#00ff60 106px,#00ff82 111px,#00ff7c 131px,#00ff5c 135px,#00ff5b 139px,#00ff7c 145px,#0f8 188px,#00ff1d 266px,#00ff16 378px,#0f6 423px,#00ff4c 426px,#00ff5a 439px,#0f4 441px,#0f4 443px,#00ff4c 449px,#00ff7f 450px,#00ff80 451px,#00ff80 458px,#0f7 459px,#0f5 460px,#0f5 467px)"></i><i style="left:382px;background:linear-gradient(#0f7 1px,#0f7 18px,#6eff00 19px,#92ff00 21px,#8f0 27px,#2aff00 28px,#0f3 29px,#00ff6e 30px,#00ff7c 31px,#00ff80 96px,#00ff5b 103px,#00ff5b 106px,#00ff7d 111px,#0f7 131px,#0f5 135px,#0f5 139px,#0f7 145px,#0f7 188px,#00ff1b 247px,#00ff0a 267px,#00ff06 378px,#0f5 423px,#0f4 426px,#00ff50 439px,#0f3 441px,#00ff3a 444px,#0f4 449px,#0f7 450px,#0f7 451px,#0f7 458px,#00ff6d 459px,#00ff4b 460px,#00ff4c 467px)"></i><i style="left:383px;background:linear-gradient(#00ff80 1px,#00ff80 18px,#6bff00 19px,#8fff00 21px,#8f0 27px,#27ff00 28px,#00ff3b 29px,#00ff72 30px,#00ff80 31px,#00ff7f 97px,#00ff5b 102px,#0f5 105px,#0f7 110px,#0f7 130px,#0f5 135px,#0f5 139px,#00ff70 144px,#0f7 180px,#0f6 201px,#0f1 260px,#00ff0c 375px,#0f6 424px,#00ff4b 426px,#00ff5a 439px,#0f4 441px,#00ff3e 444px,#00ff4e 449px,#00ff81 450px,#00ff83 451px,#00ff83 458px,#0f7 459px,#0f5 460px,#0f5 467px)"></i><i style="left:384px;background:linear-gradient(#0f8 1px,#0f8 18px,#6f0 19px,#8f0 21px,#83ff00 27px,#2f0 28px,#0f4 29px,#0f7 30px,#0f8 31px,#0f8 97px,#00ff5f 102px,#00ff5d 105px,#00ff7f 110px,#0f7 130px,#0f5 135px,#0f5 139px,#00ff72 144px,#0f7 181px,#0f6 202px,#00ff0a 261px,#00ff07 374px,#00ff5f 424px,#00ff49 426px,#0f5 439px,#00ff3f 441px,#0f4 443px,#00ff29 444px,#00ff4a 445px,#00ff4b 449px,#00ff7e 450px,#00ff80 451px,#00ff80 458px,#0f7 459px,#0f5 460px,#0f5 467px)"></i><i style="left:385px;background:linear-gradient(#00ff7f 1px,#00ff7f 18px,#6cff00 19px,#90ff00 21px,#8f0 27px,#28ff00 28px,#00ff3a 29px,#00ff71 30px,#00ff7f 31px,#00ff80 97px,#00ff5c 102px,#00ff5a 105px,#00ff7c 110px,#0f7 130px,#0f5 135px,#0f5 139px,#0f7 145px,#0f7 187px,#00ff07 267px,#0f0 377px,#0f5 424px,#00ff3d 426px,#00ff4d 439px,#00ff19 444px,#00ff3e 445px,#00ff3e 449px,#00ff71 450px,#00ff72 451px,#00ff72 458px,#0f6 459px,#0f4 460px,#0f4 467px)"></i><i style="left:386px;background:linear-gradient(#0f7 1px,#0f7 18px,#71ff00 19px,#94ff00 21px,#8dff00 27px,#2cff00 28px,#0f3 29px,#0f6 30px,#0f7 31px,#00ff7c 97px,#0f5 102px,#0f5 105px,#0f7 110px,#0f7 130px,#0f5 135px,#0f5 139px,#00ff71 145px,#0f7 180px,#0f6 202px,#00ff09 261px,#00ff08 374px,#0f6 424px,#00ff4b 426px,#00ff5c 439px,#0f4 442px,#00ff27 443px,#00ff4c 445px,#00ff4c 449px,#00ff80 450px,#00ff81 451px,#00ff82 458px,#0f7 459px,#0f5 460px,#0f5 467px)"></i><i style="left:387px;background:linear-gradient(#00ff7c 1px,#00ff7d 18px,#6dff00 19px,#91ff00 21px,#8f0 27px,#29ff00 28px,#00ff38 29px,#00ff6f 30px,#00ff7d 31px,#00ff7f 97px,#00ff5b 102px,#00ff5a 105px,#00ff7c 110px,#0f7 130px,#0f5 135px,#0f5 139px,#0f7 145px,#0f7 181px,#0f6 203px,#00ff0b 261px,#00ff09 374px,#0f6 424px,#00ff4b 426px,#00ff5d 439px,#00ff2a 443px,#00ff4a 444px,#00ff4c 449px,#00ff7f 450px,#00ff80 451px,#00ff80 458px,#0f7 459px,#0f5 460px,#0f5 467px)"></i><i style="left:388px;background:linear-gradient(#00ff70 1px,#00ff71 18px,#7f0 19px,#9f0 21px,#91ff00 27px,#3f0 28px,#00ff2d 29px,#0f6 30px,#00ff71 31px,#0f7 97px,#0f5 102px,#00ff4f 105px,#00ff71 110px,#00ff6b 130px,#00ff4a 135px,#00ff49 139px,#0f6 145px,#0f7 189px,#0f1 267px,#0f1 377px,#00ff6d 424px,#0f5 426px,#0f6 439px,#00ff2b 442px,#0f5 444px,#0f5 449px,#0f8 450px,#0f8 451px,#0f8 458px,#00ff7c 459px,#00ff5b 460px,#00ff5b 467px)"></i><i style="left:389px;background:linear-gradient(#0f7 1px,#0f7 18px,#72ff00 19px,#9f0 21px,#8eff00 27px,#2dff00 28px,#0f3 29px,#0f6 30px,#0f7 31px,#00ff7c 96px,#0f5 103px,#0f5 106px,#0f7 111px,#0f7 131px,#0f5 135px,#0f5 139px,#0f7 145px,#0f7 191px,#0f1 267px,#00ff0c 377px,#0f6 424px,#00ff4b 426px,#00ff5e 431px,#00ff5c 439px,#00ff2e 441px,#00ff2b 442px,#0f4 443px,#0f4 449px,#0f7 450px,#00ff7c 451px,#0f7 458px,#00ff70 459px,#00ff4f 460px,#00ff4e 467px)"></i><i style="left:390px;background:linear-gradient(#0f7 1px,#0f7 18px,#72ff00 19px,#9f0 21px,#8eff00 27px,#2eff00 28px,#0f3 29px,#0f6 30px,#0f7 31px,#0f7 97px,#0f5 102px,#0f5 105px,#0f7 110px,#00ff70 130px,#00ff50 135px,#00ff4e 139px,#00ff6f 145px,#0f7 189px,#0f1 267px,#0f1 377px,#00ff6e 424px,#0f5 426px,#0f6 431px,#0f6 438px,#00ff28 441px,#00ff4b 442px,#0f5 443px,#0f5 449px,#0f8 450px,#0f8 451px,#0f8 458px,#0f7 459px,#0f5 460px,#0f5 467px)"></i><i style="left:391px;background:linear-gradient(#0f7 1px,#0f7 18px,#7f0 19px,#9f0 21px,#8fff00 27px,#3f0 28px,#0f3 29px,#0f6 30px,#0f7 31px,#0f7 97px,#0f5 102px,#00ff50 105px,#00ff71 110px,#0f6 130px,#00ff4a 135px,#0f4 139px,#0f6 145px,#00ff72 190px,#00ff08 268px,#00ff07 377px,#00ff60 424px,#0f4 426px,#0f5 436px,#0f5 437px,#00ff19 440px,#00ff3f 442px,#00ff3e 449px,#00ff71 450px,#0f7 451px,#00ff72 458px,#0f6 459px,#0f4 460px,#0f4 467px)"></i><i style="left:392px;background:linear-gradient(#00ff7e 1px,#00ff7e 18px,#6dff00 19px,#90ff00 21px,#8f0 27px,#29ff00 28px,#00ff39 29px,#00ff6f 30px,#00ff7d 31px,#0f7 97px,#0f5 102px,#0f5 105px,#0f7 110px,#00ff6f 130px,#00ff4e 135px,#00ff4c 139px,#00ff6c 145px,#0f7 184px,#00ff60 207px,#00ff05 260px,#0f0 321px,#0f1 379px,#0f7 424px,#00ff5b 426px,#00ff71 435px,#0f6 436px,#0f3 438px,#00ff3c 439px,#00ff60 440px,#00ff5a 449px,#00ff8d 450px,#00ff8f 451px,#00ff90 458px,#0f8 459px,#0f6 460px,#0f6 467px)"></i><i style="left:393px;background:linear-gradient(#00ff70 1px,#00ff72 18px,#7f0 19px,#9f0 21px,#90ff00 27px,#3f0 28px,#00ff2e 29px,#0f6 30px,#0f7 31px,#0f7 96px,#0f5 103px,#0f5 106px,#0f7 111px,#00ff70 131px,#0f5 135px,#00ff4f 139px,#00ff70 145px,#0f7 194px,#0f1 268px,#0f1 377px,#00ff72 424px,#0f5 426px,#0f6 434px,#0f2 437px,#0f4 438px,#0f7 439px,#0f7 440px,#00ff4d 441px,#00ff4c 449px,#00ff7f 450px,#00ff81 451px,#00ff80 458px,#0f7 459px,#0f5 460px,#0f5 467px)"></i><i style="left:394px;background:linear-gradient(#0f7 1px,#0f7 18px,#70ff00 19px,#93ff00 21px,#8f0 27px,#2cff00 28px,#0f3 29px,#0f6 30px,#0f7 31px,#0f7 97px,#0f5 102px,#0f5 105px,#0f7 110px,#00ff6b 130px,#00ff4a 135px,#0f4 139px,#0f6 145px,#00ff70 192px,#00ff07 269px,#0f1 377px,#00ff70 424px,#0f5 426px,#0f6 433px,#0f2 436px,#00ff7e 438px,#00ff90 439px,#00ff4a 441px,#00ff4a 449px,#00ff7d 450px,#00ff7f 451px,#00ff7f 458px,#0f7 459px,#0f5 460px,#0f5 467px)"></i><i style="left:395px;background:linear-gradient(#00ff6d 1px,#00ff70 18px,#7f0 19px,#9f0 21px,#91ff00 27px,#3f0 28px,#00ff2d 29px,#0f6 30px,#00ff71 31px,#0f7 97px,#0f5 103px,#0f5 106px,#0f7 111px,#0f7 131px,#0f5 135px,#0f5 139px,#0f7 145px,#00ff7d 195px,#0f1 269px,#0f1 377px,#00ff6e 424px,#00ff4f 426px,#00ff50 429px,#0f6 431px,#00ff5d 432px,#0f2 434px,#00ff28 435px,#00ff81 437px,#00ff8d 439px,#0f4 441px,#0f4 449px,#0f7 450px,#0f7 451px,#0f7 458px,#00ff6c 459px,#00ff4a 460px,#00ff4a 467px)"></i><i style="left:396px;background:linear-gradient(#0f7 1px,#0f7 18px,#70ff00 19px,#93ff00 21px,#8f0 27px,#2bff00 28px,#0f3 29px,#00ff6b 30px,#0f7 31px,#00ff7c 97px,#0f5 102px,#0f5 105px,#0f7 110px,#00ff72 130px,#0f5 135px,#00ff4f 139px,#00ff70 145px,#0f7 192px,#0f1 269px,#00ff19 377px,#0f7 424px,#0f5 426px,#0f6 431px,#00ff2b 433px,#00ff3f 434px,#0f7 435px,#00ff91 436px,#0f9 438px,#0f9 439px,#00ff4e 441px,#00ff4e 449px,#00ff81 450px,#00ff83 451px,#00ff82 458px,#0f7 459px,#0f5 460px,#0f5 467px)"></i><i style="left:397px;background:linear-gradient(#00ff6e 1px,#00ff6e 18px,#7f0 19px,#9f0 21px,#93ff00 27px,#3f0 28px,#00ff29 29px,#00ff60 30px,#00ff6e 31px,#00ff6f 97px,#00ff4b 102px,#00ff49 105px,#00ff6b 110px,#0f6 130px,#0f4 135px,#0f4 139px,#00ff61 145px,#0f6 193px,#0f0 265px,#00ff08 376px,#00ff6e 424px,#00ff4d 426px,#0f4 430px,#0f2 432px,#0f7 434px,#0f8 436px,#0f8 439px,#0f4 441px,#0f4 449px,#0f7 450px,#0f7 451px,#0f7 458px,#00ff6d 459px,#00ff4b 460px,#00ff4c 467px)"></i><i style="left:398px;background:linear-gradient(#00ff6b 1px,#00ff6b 18px,#7f0 19px,#9f0 21px,#94ff00 27px,#3f0 28px,#00ff27 29px,#00ff5d 30px,#00ff6c 31px,#00ff6e 97px,#00ff4a 102px,#00ff49 105px,#0f6 110px,#0f6 130px,#0f4 135px,#0f4 139px,#0f6 145px,#00ff6c 194px,#00ff08 269px,#0f1 377px,#0f7 424px,#0f5 426px,#00ff4e 428px,#00ff29 430px,#00ff29 431px,#00ff81 433px,#00ff8e 435px,#00ff8e 439px,#0f4 441px,#0f4 449px,#0f7 450px,#0f7 451px,#0f7 458px,#00ff6f 459px,#00ff4d 460px,#00ff4d 467px)"></i><i style="left:399px;background:linear-gradient(#0f6 1px,#00ff6b 18px,#7f0 19px,#9f0 21px,#94ff00 27px,#3f0 28px,#00ff29 29px,#00ff5f 30px,#00ff6e 31px,#0f7 97px,#0f5 103px,#0f5 106px,#0f7 111px,#0f7 131px,#0f5 135px,#0f5 138px,#0f7 145px,#00ff7c 193px,#0f1 263px,#0f0 321px,#0f1 378px,#0f7 424px,#0f2 429px,#0f3 430px,#0f6 431px,#0f8 432px,#0f8 434px,#00ff8d 439px,#0f4 441px,#0f4 449px,#0f7 450px,#0f7 451px,#0f7 458px,#00ff6f 459px,#00ff4d 460px,#00ff4e 467px)"></i><i style="left:400px;background:linear-gradient(#0f7 1px,#0f7 18px,#70ff00 19px,#94ff00 21px,#8dff00 27px,#2cff00 28px,#0f3 29px,#0f6 30px,#0f7 31px,#0f7 97px,#0f5 102px,#0f5 105px,#0f7 110px,#00ff6d 130px,#00ff4c 135px,#00ff4b 139px,#00ff6b 145px,#00ff71 194px,#00ff09 269px,#00ff17 376px,#00ff7e 424px,#00ff2a 428px,#00ff3f 429px,#00ff93 431px,#0f9 433px,#0f9 439px,#00ff4d 441px,#00ff4d 449px,#00ff81 450px,#00ff82 451px,#00ff83 458px,#0f7 459px,#0f5 460px,#0f5 467px)"></i><i style="left:401px;background:linear-gradient(#00ff6f 1px,#00ff6e 18px,#7f0 19px,#9f0 21px,#93ff00 27px,#3f0 28px,#00ff2a 29px,#00ff60 30px,#00ff6e 31px,#00ff6f 97px,#00ff4b 102px,#00ff49 105px,#00ff6b 110px,#0f6 130px,#0f4 135px,#0f4 139px,#00ff61 145px,#00ff6d 189px,#00ff5e 213px,#0f1 267px,#00ff1d 374px,#00ff7c 422px,#0f7 424px,#0f3 426px,#00ff2d 427px,#0f9 431px,#00ff94 439px,#00ff4b 441px,#00ff4b 449px,#00ff7e 450px,#00ff7f 451px,#00ff7f 458px,#0f7 459px,#0f5 460px,#0f5 467px)"></i><i style="left:402px;background:linear-gradient(#00ff7f 1px,#00ff7f 18px,#6cff00 19px,#8fff00 21px,#8f0 27px,#27ff00 28px,#00ff3b 29px,#00ff71 30px,#00ff80 31px,#00ff81 97px,#00ff5d 102px,#00ff5b 105px,#00ff7d 110px,#0f7 130px,#0f5 135px,#0f5 139px,#0f7 145px,#00ff7e 188px,#00ff6f 213px,#0f2 267px,#0f2 374px,#00ff7e 418px,#0f6 423px,#00ff5b 424px,#0f3 425px,#00ff39 426px,#0f9 431px,#0f9 439px,#00ff50 441px,#00ff4f 449px,#00ff82 450px,#0f8 451px,#00ff83 458px,#0f7 459px,#0f5 460px,#0f5 467px)"></i><i style="left:403px;background:linear-gradient(#00ff70 1px,#00ff71 18px,#7f0 19px,#9f0 21px,#91ff00 27px,#3f0 28px,#00ff2d 29px,#0f6 30px,#00ff72 31px,#0f7 97px,#0f5 102px,#0f5 105px,#0f7 110px,#00ff6d 130px,#00ff4c 135px,#00ff4b 139px,#00ff6b 145px,#00ff72 194px,#00ff0b 269px,#00ff18 376px,#00ff6f 415px,#00ff60 419px,#00ff28 424px,#0f5 426px,#0f6 429px,#00ff93 431px,#00ff91 439px,#0f4 441px,#00ff49 449px,#00ff7c 450px,#00ff7e 451px,#00ff7f 458px,#0f7 459px,#0f5 460px,#0f5 467px)"></i><i style="left:404px;background:linear-gradient(#0f7 1px,#0f7 18px,#71ff00 19px,#9f0 21px,#8eff00 27px,#2dff00 28px,#0f3 29px,#0f6 30px,#0f7 31px,#0f7 97px,#0f5 102px,#00ff50 105px,#00ff72 110px,#0f6 130px,#00ff49 135px,#0f4 139px,#0f6 145px,#0f7 189px,#0f6 215px,#00ff18 267px,#00ff1d 349px,#00ff29 380px,#00ff6f 412px,#0f6 415px,#00ff38 419px,#0f3 421px,#00ff7f 425px,#00ff6b 426px,#00ff6c 429px,#0f9 431px,#0f9 439px,#00ff4c 441px,#00ff4c 449px,#00ff7f 450px,#00ff81 451px,#00ff81 458px,#0f7 459px,#0f5 460px,#0f5 467px)"></i><i style="left:405px;background:linear-gradient(#00ff7d 1px,#00ff7c 18px,#6eff00 19px,#91ff00 21px,#8f0 27px,#2aff00 28px,#00ff38 29px,#00ff6e 30px,#00ff7c 31px,#00ff7c 97px,#0f5 102px,#0f5 105px,#0f7 110px,#00ff70 130px,#00ff4f 135px,#00ff4d 139px,#00ff6e 145px,#0f7 188px,#0f6 215px,#00ff1a 268px,#0f2 349px,#00ff2c 379px,#0f6 408px,#0f6 412px,#0f3 417px,#0fa 424px,#00ff70 426px,#00ff70 429px,#0f9 431px,#0f9 439px,#00ff50 441px,#0f5 449px,#0f8 450px,#0f8 451px,#0f8 458px,#0f7 459px,#0f5 460px,#00ff5a 467px)"></i><i style="left:406px;background:linear-gradient(#00ff6e 1px,#00ff70 18px,#7f0 19px,#9f0 21px,#91ff00 27px,#3f0 28px,#00ff2c 29px,#0f6 30px,#00ff71 31px,#0f7 97px,#0f5 102px,#0f5 105px,#0f7 110px,#00ff6f 130px,#00ff4f 135px,#00ff4d 139px,#00ff6e 145px,#0f7 186px,#0f6 216px,#00ff1a 269px,#0f2 375px,#0f5 402px,#00ff4f 408px,#00ff29 413px,#00ff3a 415px,#0f9 420px,#00ffa5 424px,#00ff61 426px,#00ff61 429px,#0f8 431px,#0f8 439px,#0f4 441px,#00ff3f 449px,#00ff72 450px,#0f7 451px,#0f7 458px,#0f6 459px,#0f4 460px,#0f4 467px)"></i><i style="left:407px;background:linear-gradient(#00ff7d 1px,#00ff7d 18px,#6dff00 19px,#91ff00 21px,#8f0 27px,#29ff00 28px,#00ff38 29px,#00ff6f 30px,#00ff7d 31px,#00ff7d 97px,#0f5 102px,#0f5 105px,#0f7 110px,#00ff72 130px,#0f5 135px,#00ff4f 139px,#00ff6f 145px,#0f7 187px,#0f6 216px,#00ff1b 269px,#0f2 349px,#0f3 379px,#00ff60 401px,#00ff3b 410px,#00ffa2 416px,#00ffb5 424px,#00ff71 426px,#00ff71 429px,#0f9 431px,#0f9 439px,#0f5 441px,#0f5 449px,#0f8 450px,#0f8 451px,#0f8 458px,#00ff7d 459px,#00ff5c 460px,#00ff5c 467px)"></i><i style="left:408px;background:linear-gradient(#00ff6f 1px,#00ff72 18px,#7f0 19px,#9f0 21px,#90ff00 27px,#3f0 28px,#0f3 29px,#0f6 30px,#0f7 31px,#00ff81 97px,#00ff5d 102px,#00ff5c 105px,#00ff7f 110px,#0f7 130px,#00ff5b 135px,#00ff5a 139px,#00ff7c 145px,#0f8 184px,#0f7 216px,#00ff2a 269px,#00ff2e 374px,#0f5 400px,#0f3 406px,#00ff49 408px,#00ffa3 413px,#0fa 419px,#0fa 424px,#0f6 426px,#0f6 429px,#00ff94 431px,#00ff91 439px,#0f4 441px,#0f4 449px,#0f7 450px,#00ff7c 451px,#00ff7c 458px,#00ff71 459px,#00ff4f 460px,#00ff4f 467px)"></i><i style="left:409px;background:linear-gradient(#0f7 1px,#0f7 18px,#71ff00 19px,#94ff00 21px,#8dff00 27px,#2cff00 28px,#0f3 29px,#0f6 30px,#0f7 31px,#0f7 97px,#0f5 102px,#0f5 105px,#0f7 110px,#00ff6e 130px,#00ff4d 135px,#00ff4c 139px,#00ff6c 145px,#0f7 188px,#0f6 217px,#0f2 269px,#00ff2a 349px,#0f3 378px,#0f5 397px,#0f4 402px,#00ffb3 412px,#0fb 424px,#0f7 426px,#0f7 429px,#00ff9e 431px,#0f9 439px,#0f5 441px,#0f5 449px,#0f8 450px,#0f8 451px,#0f8 458px,#00ff7e 459px,#00ff5c 460px,#00ff5d 467px)"></i><i style="left:410px;background:linear-gradient(#0f7 1px,#0f7 18px,#71ff00 19px,#94ff00 21px,#8dff00 27px,#2cff00 28px,#0f3 29px,#0f6 30px,#0f7 31px,#0f7 97px,#0f5 102px,#0f5 105px,#0f7 110px,#00ff71 130px,#0f5 135px,#00ff4f 139px,#00ff70 145px,#0f7 185px,#0f6 216px,#0f2 269px,#0f2 349px,#0f3 377px,#00ff4c 394px,#00ff3a 399px,#00ff94 406px,#0fa 412px,#0fa 424px,#0f6 426px,#0f6 429px,#00ff94 431px,#00ff91 439px,#0f4 441px,#00ff49 449px,#00ff7c 450px,#00ff7d 451px,#00ff7e 458px,#0f7 459px,#0f5 460px,#0f5 467px)"></i><i style="left:411px;background:linear-gradient(#00ff6d 1px,#00ff6e 18px,#7f0 19px,#9f0 21px,#92ff00 27px,#3f0 28px,#00ff2b 29px,#00ff61 30px,#00ff6f 31px,#0f7 97px,#0f5 102px,#00ff50 105px,#00ff72 110px,#00ff6d 130px,#00ff4c 135px,#00ff4b 139px,#00ff6c 145px,#0f7 187px,#0f6 219px,#00ff28 269px,#0f3 374px,#00ff4d 390px,#0f4 395px,#00ffa3 402px,#00ffa0 409px,#00ffb0 413px,#00ffb1 424px,#00ff6c 426px,#00ff6c 429px,#0f9 431px,#0f9 439px,#00ff4c 441px,#00ff4c 449px,#00ff7f 450px,#00ff81 451px,#00ff81 458px,#0f7 459px,#0f5 460px,#0f5 467px)"></i><i style="left:412px;background:linear-gradient(#0f7 1px,#0f7 18px,#70ff00 19px,#93ff00 21px,#8dff00 27px,#2cff00 28px,#0f3 29px,#0f6 30px,#0f7 31px,#00ff72 97px,#00ff4d 102px,#00ff4b 105px,#00ff6c 110px,#0f6 130px,#0f4 135px,#0f4 139px,#00ff60 145px,#0f6 201px,#00ff1c 269px,#00ff27 349px,#0f3 375px,#0f4 384px,#00ff3b 391px,#0f4 393px,#00ff90 397px,#0fa 400px,#0f9 409px,#0fa 413px,#0fa 424px,#0f6 426px,#0f6 429px,#00ff92 431px,#00ff90 439px,#0f4 441px,#0f4 449px,#0f7 450px,#00ff7d 451px,#00ff7d 458px,#00ff72 459px,#0f5 460px,#0f5 467px)"></i><i style="left:413px;background:linear-gradient(#00ff7f 1px,#00ff7e 18px,#6cff00 19px,#90ff00 21px,#8f0 27px,#28ff00 28px,#00ff39 29px,#00ff70 30px,#00ff7e 31px,#00ff7d 97px,#0f5 102px,#0f5 105px,#0f7 110px,#00ff71 130px,#00ff50 135px,#00ff4e 139px,#00ff6e 145px,#0f7 201px,#0f3 269px,#00ff3a 366px,#00ff4d 386px,#00ff6f 391px,#0fa 395px,#00ffb2 401px,#00ffa2 409px,#00ffb3 413px,#00ffb3 424px,#00ff6f 426px,#00ff6f 429px,#0f9 431px,#0f9 439px,#00ff4f 441px,#00ff4f 449px,#00ff82 450px,#00ff83 451px,#00ff83 458px,#0f7 459px,#0f5 460px,#0f5 467px)"></i><i style="left:414px;background:linear-gradient(#00ff6f 1px,#00ff71 18px,#7f0 19px,#9f0 21px,#91ff00 27px,#3f0 28px,#00ff2d 29px,#0f6 30px,#00ff72 31px,#0f7 97px,#0f5 102px,#0f5 105px,#0f7 110px,#00ff71 130px,#0f5 135px,#00ff50 139px,#00ff71 145px,#00ff7d 186px,#00ff6f 221px,#0f3 269px,#00ff3a 358px,#00ff4b 377px,#00ffa0 389px,#00ffb2 397px,#00ffa3 409px,#00ffb3 413px,#00ffb4 424px,#00ff70 426px,#00ff70 429px,#0f9 431px,#0f9 439px,#00ff4f 441px,#00ff50 449px,#00ff83 450px,#0f8 451px,#0f8 458px,#0f7 459px,#0f5 460px,#0f5 467px)"></i><i style="left:415px;background:linear-gradient(#00ff72 1px,#0f7 18px,#7f0 19px,#9f0 21px,#90ff00 27px,#3f0 28px,#0f3 29px,#0f6 30px,#0f7 31px,#0f7 97px,#0f5 103px,#0f5 106px,#0f7 111px,#00ff6d 131px,#00ff4d 135px,#00ff4c 139px,#00ff6c 145px,#0f7 191px,#0f6 222px,#00ff2c 269px,#0f3 349px,#0f4 369px,#00ff9e 382px,#0fa 395px,#0f9 409px,#0fa 413px,#0fa 424px,#0f6 426px,#0f6 429px,#00ff93 431px,#00ff91 439px,#0f4 441px,#0f4 449px,#0f7 450px,#00ff7d 451px,#00ff7d 458px,#00ff72 459px,#0f5 460px,#0f5 467px)"></i><i style="left:416px;background:linear-gradient(#0f7 1px,#0f7 18px,#70ff00 19px,#93ff00 21px,#8f0 27px,#2cff00 28px,#0f3 29px,#00ff6b 30px,#0f7 31px,#00ff7c 96px,#0f5 103px,#0f5 106px,#0f7 111px,#00ff71 131px,#0f5 135px,#00ff50 139px,#00ff71 145px,#0f7 192px,#00ff6c 223px,#0f3 269px,#0f3 342px,#0f4 360px,#0f9 373px,#0fa 386px,#0f9 409px,#0fa 413px,#0fa 424px,#0f6 426px,#0f6 429px,#00ff8f 431px,#0f8 439px,#0f4 441px,#0f4 449px,#0f7 450px,#0f7 451px,#0f7 458px,#00ff6c 459px,#00ff4a 460px,#00ff4a 467px)"></i><i style="left:417px;background:linear-gradient(#00ff80 1px,#00ff7e 18px,#6cff00 19px,#90ff00 21px,#8f0 27px,#29ff00 28px,#00ff39 29px,#00ff70 30px,#00ff7e 31px,#0f7 97px,#0f5 102px,#0f5 105px,#0f7 110px,#00ff6d 130px,#00ff4c 135px,#00ff4a 139px,#0f6 145px,#00ff70 196px,#00ff2a 269px,#00ff2d 322px,#0f4 352px,#00ff91 364px,#00ff9f 369px,#00ffa5 401px,#0f9 409px,#0fa 413px,#0fa 424px,#0f6 426px,#0f6 429px,#00ff8e 431px,#0f8 439px,#0f4 441px,#0f4 449px,#0f7 450px,#0f7 451px,#0f7 458px,#00ff6d 459px,#00ff4b 460px,#00ff4c 467px)"></i><i style="left:418px;background:linear-gradient(#0f7 1px,#0f7 18px,#70ff00 19px,#93ff00 21px,#8f0 27px,#2bff00 28px,#0f3 29px,#00ff6c 30px,#0f7 31px,#00ff81 97px,#00ff5d 103px,#00ff5d 106px,#00ff7f 111px,#0f7 131px,#0f5 135px,#0f5 139px,#0f7 145px,#00ff81 190px,#00ff70 222px,#00ff3a 269px,#00ff3c 303px,#00ff4d 343px,#00ffa4 357px,#00ffb0 372px,#00ffb2 401px,#00ffa2 409px,#00ffb3 413px,#00ffb3 424px,#00ff6f 426px,#00ff6f 429px,#0f9 431px,#0f9 439px,#00ff4f 441px,#00ff4f 449px,#00ff82 450px,#0f8 451px,#0f8 458px,#0f7 459px,#0f5 460px,#0f5 467px)"></i><i style="left:419px;background:linear-gradient(#0f8 1px,#0f8 18px,#6f0 19px,#8f0 21px,#82ff00 27px,#2f0 28px,#0f4 29px,#00ff7c 30px,#0f8 31px,#0f8 97px,#0f6 102px,#0f6 105px,#0f8 110px,#00ff81 130px,#00ff60 135px,#00ff5e 139px,#00ff7f 145px,#0f8 198px,#0f4 281px,#0f5 330px,#00ff71 341px,#00ffa1 348px,#0fa 354px,#00ffb0 401px,#00ffa0 409px,#00ffb0 413px,#00ffb0 424px,#00ff6c 426px,#00ff6b 429px,#0f9 431px,#00ff94 439px,#00ff4b 441px,#00ff4b 449px,#00ff7e 450px,#00ff7f 451px,#00ff7f 458px,#0f7 459px,#0f5 460px,#0f5 467px)"></i><i style="left:420px;background:linear-gradient(#0f7 1px,#00ff7c 18px,#6eff00 19px,#91ff00 21px,#8f0 27px,#29ff00 28px,#00ff39 29px,#00ff70 30px,#00ff7e 31px,#0f8 97px,#0f6 103px,#0f6 106px,#0f8 111px,#00ff7e 131px,#00ff5f 135px,#00ff5e 139px,#00ff7f 145px,#0f8 201px,#00ff4c 269px,#00ff5d 283px,#00ff5d 309px,#00ffa2 336px,#00ffb2 352px,#00ffb1 401px,#00ffa1 409px,#00ffb1 413px,#00ffb0 424px,#00ff6b 426px,#00ff6b 429px,#0f9 431px,#00ff93 439px,#00ff4a 441px,#00ff49 449px,#00ff7c 450px,#00ff7e 451px,#00ff7d 458px,#00ff72 459px,#0f5 460px,#00ff50 467px)"></i><i style="left:421px;background:linear-gradient(#00ff7f 1px,#00ff7f 18px,#6cff00 19px,#90ff00 21px,#8f0 27px,#28ff00 28px,#00ff3a 29px,#00ff70 30px,#00ff7e 31px,#00ff7d 97px,#0f5 102px,#0f5 105px,#0f7 110px,#00ff71 130px,#00ff4f 137px,#00ff4f 140px,#00ff6f 145px,#0f7 186px,#00ff4e 249px,#00ff4b 283px,#0f9 326px,#0fa 401px,#0f9 409px,#0fa 413px,#0fa 424px,#0f6 426px,#0f6 429px,#00ff8f 431px,#00ff8d 439px,#0f4 441px,#0f4 449px,#0f7 450px,#0f7 451px,#0f7 458px,#00ff6e 459px,#00ff4c 460px,#00ff4d 467px)"></i><i style="left:422px;background:linear-gradient(#00ff71 1px,#00ff72 18px,#7f0 19px,#9f0 21px,#90ff00 27px,#3f0 28px,#00ff2e 29px,#0f6 30px,#0f7 31px,#0f7 97px,#0f5 102px,#0f5 105px,#0f7 110px,#00ff6f 130px,#00ff4d 137px,#00ff4e 140px,#00ff6d 145px,#0f7 185px,#0f5 262px,#0f6 273px,#00ffa5 298px,#00ffb3 322px,#00ffb6 401px,#0fa 409px,#00ffb6 413px,#0fb 424px,#00ff72 426px,#00ff72 429px,#0f9 431px,#0f9 439px,#0f5 441px,#0f5 449px,#0f8 450px,#0f8 451px,#0f8 458px,#0f7 459px,#0f5 460px,#0f5 467px)"></i><i style="left:423px;background:linear-gradient(#0f7 1px,#0f7 18px,#70ff00 19px,#93ff00 21px,#8f0 27px,#2bff00 28px,#0f3 29px,#00ff6b 30px,#0f7 31px,#00ff7f 97px,#00ff5b 102px,#00ff5a 105px,#00ff7c 110px,#0f7 130px,#0f5 135px,#0f5 139px,#0f7 145px,#00ff7f 192px,#00ff5d 242px,#00ffa1 278px,#0fa 302px,#0fa 401px,#0f9 409px,#0fa 413px,#0fa 424px,#0f6 426px,#0f6 429px,#00ff92 431px,#00ff8f 439px,#0f4 441px,#0f4 449px,#0f7 450px,#0f7 451px,#0f7 458px,#00ff6f 459px,#00ff4d 460px,#00ff4d 467px)"></i><i style="left:424px;background:linear-gradient(#0f7 1px,#0f7 18px,#6fff00 19px,#92ff00 21px,#8f0 27px,#2bff00 28px,#0f3 29px,#00ff6d 30px,#0f7 31px,#00ff7f 97px,#00ff5b 102px,#00ff5a 105px,#00ff7c 110px,#0f7 130px,#0f5 135px,#0f5 139px,#0f7 145px,#00ff80 189px,#0f5 220px,#00ffa4 257px,#00ffb0 287px,#00ffb2 401px,#00ffa2 409px,#00ffb2 413px,#00ffb2 424px,#00ff6e 426px,#00ff6d 429px,#0f9 431px,#0f9 439px,#00ff4d 441px,#00ff4c 449px,#00ff7f 450px,#00ff81 451px,#00ff81 458px,#0f7 459px,#0f5 460px,#0f5 467px)"></i><i style="left:425px;background:linear-gradient(#0f7 1px,#0f7 18px,#70ff00 19px,#93ff00 21px,#8f0 27px,#2bff00 28px,#0f3 29px,#00ff6b 30px,#0f7 31px,#00ff7d 97px,#0f5 102px,#0f5 105px,#0f7 110px,#0f7 130px,#0f5 135px,#0f5 139px,#00ff72 145px,#0f7 181px,#0f4 210px,#00ff92 231px,#00ffa5 261px,#0fa 401px,#0f9 405px,#0fa 424px,#0f6 426px,#0f6 429px,#00ff90 431px,#00ff8d 439px,#0f4 441px,#0f4 449px,#0f7 450px,#0f7 451px,#0f7 458px,#00ff6e 459px,#00ff4c 460px,#00ff4c 467px)"></i><i style="left:426px;background:linear-gradient(#00ff7d 1px,#00ff7e 18px,#6dff00 19px,#90ff00 21px,#8f0 27px,#28ff00 28px,#00ff3a 29px,#00ff70 30px,#00ff7f 31px,#00ff82 95px,#00ff81 98px,#00ff5d 103px,#00ff5e 106px,#00ff80 111px,#0f7 131px,#0f5 135px,#0f5 139px,#0f7 144px,#0f7 174px,#0f4 199px,#0f9 220px,#0fa 236px,#0fa 401px,#0f9 405px,#0fa 424px,#0f6 426px,#0f6 429px,#00ff94 431px,#00ff91 439px,#0f4 441px,#0f4 449px,#00ff7c 450px,#00ff7d 451px,#00ff7d 458px,#00ff72 459px,#0f5 460px,#0f5 467px)"></i><i style="left:427px;background:linear-gradient(#0f7 1px,#0f7 18px,#70ff00 19px,#93ff00 21px,#8f0 27px,#2bff00 28px,#0f3 29px,#00ff6b 30px,#0f7 31px,#00ff7d 97px,#0f5 102px,#0f5 105px,#0f7 110px,#0f7 130px,#0f5 135px,#0f5 139px,#00ff70 144px,#0f7 161px,#0f3 187px,#0f4 193px,#00ff92 207px,#00ffa4 216px,#00ffb2 321px,#00ffb0 401px,#00ffa0 407px,#00ffb0 424px,#00ff6b 426px,#00ff6b 429px,#0f9 431px,#00ff93 439px,#00ff4a 441px,#00ff49 449px,#00ff7c 450px,#00ff7e 451px,#00ff7e 458px,#0f7 459px,#0f5 460px,#00ff50 467px)"></i><i style="left:428px;background:linear-gradient(#0f7 1px,#0f7 18px,#6fff00 19px,#93ff00 21px,#8f0 27px,#2bff00 28px,#0f3 29px,#00ff6c 30px,#0f7 31px,#00ff80 97px,#00ff5b 103px,#00ff5b 106px,#00ff7d 111px,#0f7 131px,#0f5 136px,#0f5 140px,#0f7 144px,#00ff71 152px,#00ff2e 176px,#00ff3a 181px,#0f9 199px,#0fa 229px,#0fa 401px,#00ff9e 409px,#0fa 413px,#0fa 424px,#0f6 426px,#0f6 429px,#00ff94 431px,#00ff91 439px,#0f4 441px,#0f4 449px,#0f7 450px,#00ff7d 451px,#00ff7c 458px,#00ff71 459px,#00ff50 460px,#00ff50 467px)"></i><i style="left:429px;background:linear-gradient(#0f7 1px,#0f7 18px,#72ff00 19px,#9f0 21px,#8fff00 27px,#2eff00 28px,#0f3 29px,#0f6 30px,#0f7 31px,#0f7 97px,#00ff4e 103px,#00ff4e 106px,#00ff70 111px,#0f6 131px,#0f4 135px,#0f4 139px,#0f5 144px,#0f1 164px,#0f2 170px,#0f7 184px,#00ff91 194px,#00ffb6 321px,#00ffb6 401px,#0fa 406px,#00ffb6 424px,#00ff71 426px,#00ff71 429px,#0f9 431px,#0f9 439px,#00ff50 441px,#00ff50 449px,#00ff83 450px,#0f8 451px,#0f8 458px,#0f7 459px,#0f5 460px,#0f5 467px)"></i><i style="left:430px;background:linear-gradient(#00ff7c 1px,#0f7 18px,#6eff00 19px,#92ff00 21px,#8f0 27px,#2aff00 28px,#0f3 29px,#00ff6d 30px,#0f7 31px,#0f7 97px,#0f5 102px,#0f5 105px,#0f7 111px,#0f6 130px,#00ff3c 135px,#0f0 153px,#00ff16 159px,#0f7 173px,#00ff90 185px,#0fa 401px,#0f9 405px,#0fa 424px,#0f6 426px,#0f6 429px,#00ff92 431px,#00ff90 439px,#0f4 441px,#0f4 449px,#0f7 450px,#00ff7d 451px,#00ff7e 458px,#0f7 459px,#0f5 460px,#0f5 467px)"></i><i style="left:431px;background:linear-gradient(#0f7 1px,#00ff7d 18px,#6dff00 19px,#91ff00 21px,#8f0 27px,#29ff00 28px,#00ff39 29px,#00ff6f 30px,#00ff7e 31px,#0f8 97px,#00ff60 102px,#00ff5f 105px,#00ff81 111px,#0f6 123px,#0f1 135px,#0f0 142px,#00ff17 148px,#00ff7f 161px,#0f9 168px,#0fa 229px,#00ffb4 401px,#00ffa4 405px,#00ffb5 424px,#00ff70 426px,#00ff70 429px,#0f9 431px,#0f9 439px,#00ff50 441px,#00ff50 449px,#00ff83 450px,#0f8 451px,#0f8 458px,#0f7 459px,#0f5 460px,#0f5 467px)"></i><i style="left:432px;background:linear-gradient(#0f7 1px,#0f7 18px,#6fff00 19px,#92ff00 21px,#8f0 27px,#2aff00 28px,#0f3 29px,#00ff6d 30px,#0f7 31px,#00ff82 97px,#00ff5d 103px,#0f7 110px,#0f0 125px,#2f0 128px,#2cff00 131px,#1aff00 135px,#06ff00 136px,#00ff71 149px,#00ff92 157px,#00ffb5 231px,#00ffb6 401px,#00ffa5 409px,#00ffb5 413px,#00ffb5 424px,#00ff70 426px,#00ff70 429px,#0f9 431px,#0f9 439px,#00ff4f 441px,#00ff4e 449px,#00ff81 450px,#00ff83 451px,#00ff82 458px,#0f7 459px,#0f5 460px,#0f5 467px)"></i><i style="left:433px;background:linear-gradient(#0f6 1px,#0f6 18px,#7f0 19px,#9f0 21px,#9f0 27px,#3f0 28px,#00ff27 29px,#00ff5d 30px,#00ff6b 31px,#00ff72 97px,#00ff4c 102px,#0f3 109px,#0f0 112px,#1dff00 113px,#3dff00 116px,#5f0 120px,#4f0 123px,#0cff00 128px,#00ff4d 140px,#0f7 144px,#0f8 151px,#0fa 229px,#00ffb4 321px,#00ffb5 401px,#00ffa5 406px,#00ffb5 424px,#00ff70 426px,#00ff70 429px,#0f9 431px,#0f9 439px,#00ff50 441px,#00ff4f 449px,#00ff82 450px,#0f8 451px,#0f8 458px,#0f7 459px,#0f5 460px,#0f5 467px)"></i><i style="left:434px;background:linear-gradient(#0f7 1px,#0f7 18px,#7f0 19px,#9f0 21px,#90ff00 27px,#3f0 28px,#0f3 29px,#0f6 30px,#0f7 31px,#0f7 94px,#00ff6e 98px,#05ff00 106px,#4f0 109px,#5eff00 111px,#00ff07 119px,#0f6 130px,#0f6 140px,#0f8 145px,#0f9 229px,#0fa 401px,#00ff9f 405px,#00ffb3 424px,#00ff6e 426px,#00ff6f 429px,#0f9 431px,#0f9 439px,#00ff50 441px,#0f5 449px,#0f8 450px,#0f8 451px,#0f8 458px,#00ff7d 459px,#00ff5b 460px,#00ff5c 467px)"></i><i style="left:435px;background:linear-gradient(#00ff7d 1px,#00ff7d 18px,#6dff00 19px,#91ff00 21px,#8f0 27px,#29ff00 28px,#00ff38 29px,#00ff6f 30px,#00ff7d 31px,#00ff7c 89px,#0f6 95px,#00ff3d 98px,#0f1 100px,#0bff00 101px,#4f0 103px,#5eff00 105px,#5f0 107px,#2f0 109px,#0f0 110px,#0f4 113px,#00ff5a 116px,#0f8 127px,#0f8 131px,#0f6 136px,#00ff6b 140px,#0f8 145px,#00ffa3 229px,#00ffa5 401px,#0f9 405px,#0fa 424px,#0f6 426px,#0f6 429px,#00ff8d 431px,#0f8 439px,#0f4 441px,#0f4 449px,#0f7 450px,#0f7 451px,#0f7 458px,#00ff6b 459px,#00ff4a 460px,#00ff4a 467px)"></i><i style="left:436px;background:linear-gradient(#00ff71 1px,#00ff72 18px,#7f0 19px,#9f0 21px,#90ff00 27px,#3f0 28px,#00ff2e 29px,#0f6 30px,#00ff72 31px,#00ff72 83px,#0f5 90px,#0f0 95px,#5f0 98px,#6f0 100px,#5f0 102px,#00ff0a 106px,#00ff5d 110px,#0f7 116px,#00ff7f 131px,#0f6 135px,#0f6 139px,#0f8 145px,#0f9 229px,#0fa 401px,#0f9 405px,#0fa 424px,#0f6 426px,#0f6 429px,#00ff92 431px,#00ff90 439px,#0f4 441px,#0f4 449px,#0f7 450px,#00ff7c 451px,#00ff7d 458px,#00ff72 459px,#00ff50 460px,#0f5 467px)"></i><i style="left:437px;background:linear-gradient(#00ff6f 1px,#00ff70 18px,#7f0 19px,#9f0 21px,#92ff00 27px,#3f0 28px,#00ff2c 29px,#0f6 30px,#00ff70 31px,#00ff70 78px,#0f5 84px,#0f0 89px,#5f0 92px,#70ff00 94px,#5cff00 96px,#0bff00 99px,#00ff0a 100px,#0f7 111px,#00ff7e 131px,#00ff61 135px,#00ff61 139px,#00ff83 145px,#0fa 229px,#00ffb1 401px,#00ffa1 409px,#00ffb1 413px,#00ffb1 424px,#00ff6c 426px,#00ff6c 429px,#0f9 431px,#00ff94 439px,#00ff4b 441px,#00ff4b 449px,#00ff7e 450px,#00ff7f 451px,#00ff7f 458px,#0f7 459px,#0f5 460px,#0f5 467px)"></i><i style="left:438px;background:linear-gradient(#00ff72 1px,#0f7 18px,#72ff00 19px,#9f0 21px,#8eff00 27px,#2eff00 28px,#0f3 29px,#0f6 30px,#0f7 31px,#0f7 72px,#0f6 78px,#0f1 83px,#09ff00 84px,#4dff00 86px,#6dff00 88px,#60ff00 90px,#0f0 93px,#00ff5d 98px,#00ff60 106px,#0f8 111px,#00ff8d 131px,#00ff70 136px,#00ff72 140px,#00ff94 145px,#0fa 229px,#0fa 401px,#0f9 405px,#0fa 424px,#0f6 426px,#0f6 429px,#00ff91 431px,#00ff8e 439px,#0f4 441px,#0f4 449px,#0f7 450px,#0f7 451px,#0f7 458px,#00ff6f 459px,#00ff4d 460px,#00ff4d 467px)"></i><i style="left:439px;background:linear-gradient(#0f7 1px,#0f7 18px,#6fff00 19px,#93ff00 21px,#8f0 27px,#2bff00 28px,#0f3 29px,#00ff6c 30px,#0f7 31px,#0f7 67px,#00ff5b 73px,#0f0 78px,#6f0 81px,#7f0 83px,#5f0 85px,#1f0 87px,#00ff0c 88px,#0f6 93px,#00ff7d 98px,#00ff5e 103px,#00ff60 106px,#0f8 111px,#0f8 131px,#00ff6d 136px,#00ff6f 140px,#00ff90 145px,#00ffa5 229px,#00ffa5 401px,#0f9 405px,#0fa 424px,#0f6 426px,#0f6 429px,#00ff8e 431px,#0f8 439px,#0f4 441px,#0f4 449px,#0f7 450px,#0f7 451px,#0f7 458px,#00ff6d 459px,#00ff4b 460px,#00ff4b 467px)"></i><i style="left:440px;background:linear-gradient(#00ff7d 1px,#00ff7e 18px,#6dff00 19px,#90ff00 21px,#8f0 27px,#28ff00 28px,#00ff3a 29px,#00ff71 30px,#00ff7f 31px,#00ff7f 61px,#0f6 67px,#00ff09 72px,#5dff00 75px,#7f0 77px,#5eff00 79px,#00ff08 82px,#0f6 87px,#00ff83 94px,#0f8 98px,#0f6 103px,#0f6 106px,#0f8 111px,#00ff8f 131px,#00ff72 136px,#0f7 140px,#0f9 145px,#0fa 229px,#0fa 401px,#0f9 405px,#0fa 424px,#0f6 426px,#0f6 429px,#00ff91 431px,#00ff8e 439px,#0f4 441px,#0f4 449px,#0f7 450px,#0f7 451px,#0f7 458px,#00ff6e 459px,#00ff4c 460px,#00ff4c 467px)"></i><i style="left:441px;background:linear-gradient(#00ff71 1px,#00ff72 18px,#7f0 19px,#9f0 21px,#90ff00 27px,#3f0 28px,#00ff2e 29px,#0f6 30px,#0f7 31px,#0f7 57px,#00ff06 65px,#09ff00 66px,#6f0 69px,#81ff00 71px,#71ff00 73px,#16ff00 76px,#00ff0a 78px,#0f3 84px,#0f7 89px,#0f7 98px,#0f5 102px,#0f5 105px,#00ff7e 111px,#00ff83 131px,#0f6 135px,#0f6 139px,#0f8 145px,#0fa 229px,#0fa 401px,#0f9 409px,#0fa 413px,#0fa 424px,#00ff61 426px,#00ff61 429px,#0f8 431px,#0f8 439px,#0f4 441px,#00ff3f 449px,#00ff72 450px,#0f7 451px,#0f7 458px,#0f6 459px,#0f4 460px,#0f4 467px)"></i><i style="left:442px;background:linear-gradient(#00ff6c 1px,#00ff6e 18px,#7f0 19px,#9f0 21px,#92ff00 27px,#3f0 28px,#00ff2b 29px,#0f6 30px,#00ff70 31px,#00ff72 53px,#0f5 57px,#0f0 60px,#3f0 62px,#7f0 64px,#8f0 66px,#6f0 68px,#2f0 70px,#1f0 71px,#1f0 83px,#0f0 84px,#00ff6f 88px,#0f7 89px,#0f7 98px,#00ff5a 103px,#00ff5c 106px,#00ff82 111px,#0f8 131px,#00ff6c 136px,#00ff6e 140px,#00ff90 145px,#0fa 229px,#00ffb2 401px,#00ffa1 409px,#00ffb1 413px,#00ffb1 424px,#00ff6d 426px,#00ff6c 429px,#0f9 431px,#00ff94 439px,#00ff4b 441px,#00ff4b 449px,#00ff7e 450px,#00ff7f 451px,#00ff7f 458px,#0f7 459px,#0f5 460px,#0f5 467px)"></i><i style="left:443px;background:linear-gradient(#0f7 1px,#0f7 18px,#6fff00 19px,#92ff00 21px,#8f0 27px,#2bff00 28px,#0f3 29px,#00ff6d 30px,#0f7 31px,#0f7 49px,#0f6 53px,#00ff08 57px,#4dff00 59px,#6f0 61px,#49ff00 63px,#08ff00 65px,#08ff00 83px,#00ff05 84px,#0f7 88px,#00ff7d 89px,#00ff7f 98px,#00ff5e 102px,#00ff5e 105px,#0f8 111px,#0f8 131px,#00ff6c 135px,#00ff6c 139px,#00ff8f 145px,#0fa 229px,#00ffb4 401px,#00ffa4 409px,#00ffb4 413px,#00ffb5 424px,#00ff70 426px,#00ff70 429px,#0f9 431px,#0f9 439px,#00ff50 441px,#00ff50 449px,#00ff83 450px,#0f8 451px,#0f8 458px,#0f7 459px,#0f5 460px,#0f5 467px)"></i><i style="left:444px;background:linear-gradient(#00ff6c 1px,#00ff6f 18px,#7f0 19px,#9f0 21px,#92ff00 27px,#3f0 28px,#00ff2b 29px,#0f6 30px,#00ff70 31px,#00ff72 44px,#00ff5f 49px,#0f1 53px,#1f0 54px,#4f0 56px,#4f0 57px,#0f0 60px,#16ff00 63px,#1f0 83px,#0f0 84px,#00ff6d 88px,#0f7 89px,#0f7 98px,#0f5 103px,#00ff5a 106px,#00ff80 111px,#0f8 131px,#0f6 136px,#00ff6c 140px,#00ff8d 145px,#00ffa5 229px,#0fa 401px,#0f9 405px,#0fa 424px,#0f6 426px,#0f6 429px,#00ff90 431px,#00ff8e 439px,#0f4 441px,#0f4 449px,#0f7 450px,#0f7 451px,#0f7 458px,#00ff6f 459px,#00ff4d 460px,#00ff4e 467px)"></i><i style="left:445px;background:linear-gradient(#0f7 1px,#0f7 18px,#7f0 19px,#9f0 21px,#8fff00 27px,#2eff00 28px,#0f3 29px,#0f6 30px,#0f7 31px,#0f7 44px,#00ff08 50px,#1f0 51px,#2f0 53px,#00ff08 55px,#0f4 58px,#00ff3f 59px,#05ff00 62px,#1f0 63px,#16ff00 83px,#05ff00 84px,#00ff6b 88px,#0f7 89px,#0f7 98px,#0f5 102px,#0f5 105px,#0f7 111px,#00ff80 131px,#0f6 135px,#0f6 139px,#0f8 145px,#00ffa0 229px,#0fa 380px,#0f6 384px,#0f6 390px,#0fa 394px,#0f9 406px,#00ffaf 424px,#0f6 426px,#0f6 429px,#0f9 431px,#00ff93 439px,#00ff4b 441px,#00ff4b 449px,#00ff7e 450px,#00ff80 451px,#00ff80 458px,#0f7 459px,#0f5 460px,#0f5 467px)"></i><i style="left:446px;background:linear-gradient(#00ff72 1px,#0f7 18px,#7f0 19px,#9f0 21px,#8fff00 27px,#2eff00 28px,#0f3 29px,#0f6 30px,#0f7 31px,#0f7 44px,#00ff2e 45px,#00ff0c 47px,#0f0 49px,#00ff6f 57px,#0f5 59px,#0f0 62px,#1f0 63px,#1f0 83px,#0f0 84px,#00ff70 88px,#0f7 89px,#0f7 98px,#00ff5c 103px,#00ff5e 106px,#00ff81 111px,#0f8 131px,#00ff6c 136px,#00ff6e 140px,#00ff8d 145px,#0fa 229px,#00ffb1 380px,#0f9 381px,#0f4 383px,#00ff2e 384px,#00ff2e 390px,#0f4 391px,#00ff9e 393px,#00ffb3 394px,#00ffa5 409px,#00ffb6 424px,#0f7 426px,#0f7 429px,#00ff9e 431px,#0f9 439px,#00ff5a 441px,#00ff5a 449px,#0f8 450px,#0f8 451px,#0f8 458px,#0f6 460px,#0f6 467px)"></i><i style="left:447px;background:linear-gradient(#0f7 1px,#0f7 18px,#71ff00 19px,#94ff00 21px,#8dff00 27px,#2cff00 28px,#0f3 29px,#0f6 30px,#0f7 31px,#0f7 44px,#00ff19 45px,#00ff6d 52px,#0f7 57px,#00ff5a 59px,#0f0 62px,#08ff00 83px,#00ff05 84px,#0f7 88px,#00ff7d 89px,#00ff80 98px,#0f6 103px,#0f8 111px,#0f8 131px,#0f7 136px,#00ff91 145px,#0fa 229px,#0fa 380px,#0f9 381px,#00ff3b 383px,#00ff27 384px,#00ff27 390px,#00ff3c 391px,#0f9 393px,#0fa 394px,#00ffa0 406px,#0fa 424px,#0f7 426px,#0f7 429px,#0f9 431px,#0f9 439px,#0f6 441px,#0f6 449px,#00ff83 450px,#0f8 451px,#0f8 458px,#0f6 460px,#0f6 467px)"></i></div>
<svg width="1345" height="916" viewBox="0 0 1345 916" style="will-change:transform">
<text x="584.0" y="186.5" class="pl" text-anchor="end">RBSP-A/EMFISIS  HFR Spectra Data</text>
<text x="157.2" y="412.0" class="pl" >10</text>
<text x="177.6" y="403.5" class="pl" >5</text>
<text x="157.2" y="688.0" class="pl" >10</text>
<text x="177.6" y="679.5" class="pl" >4</text>
<text x="200.0" y="716.3" class="pl" >00:00</text>
<text x="200.0" y="732.3" class="pl" >2012-12-02</text>
<text x="423.7" y="716.3" class="pl" >12:00</text>
<text x="647.0" y="716.3" class="pl" >00:00</text>
<text x="647.0" y="732.3" class="pl" >2012-12-03</text>
<text class="pl" transform="translate(145 441.5) rotate(-90)" text-anchor="middle">Hz</text>
<text x="735.9" y="694.5" class="pl" >10</text>
<text x="756.3" y="686.9" class="pl" >-22</text>
<text x="735.9" y="622.2" class="pl" >10</text>
<text x="756.3" y="614.6" class="pl" >-20</text>
<text x="735.9" y="549.9" class="pl" >10</text>
<text x="756.3" y="542.3" class="pl" >-18</text>
<text x="735.9" y="477.6" class="pl" >10</text>
<text x="756.3" y="470.0" class="pl" >-16</text>
<text x="735.9" y="405.3" class="pl" >10</text>
<text x="756.3" y="397.7" class="pl" >-14</text>
<text x="735.9" y="333.0" class="pl" >10</text>
<text x="756.3" y="325.4" class="pl" >-12</text>
<text x="735.9" y="260.7" class="pl" >10</text>
<text x="756.3" y="253.1" class="pl" >-10</text>
<text class="pl" transform="translate(804.5 441.5) rotate(-90)" text-anchor="middle">V^2/m^2/Hz</text>
</svg>
<svg width="1345" height="916" viewBox="0 0 1345 916" shape-rendering="crispEdges">
<rect x="105" y="59" width="231" height="287" fill="#6382bf" />
<rect x="106" y="60" width="229" height="285" fill="#eeeeee" />
<rect x="106" y="60" width="229" height="1" fill="#ffffff" />
<rect x="106" y="60" width="1" height="285" fill="#ffffff" />
<rect x="106" y="140" width="229" height="19" fill="#a3b8cc" />
<rect x="106" y="140" width="229" height="1" fill="#6382bf" />
<rect x="106" y="158" width="229" height="1" fill="#ffffff" />
<rect x="106" y="119" width="229" height="1" fill="#6382bf" />
<rect x="106" y="120" width="229" height="1" fill="#ffffff" />
<rect x="106" y="180" width="229" height="1" fill="#6382bf" />
<rect x="106" y="181" width="229" height="1" fill="#ffffff" />
<rect x="106" y="240" width="229" height="1" fill="#6382bf" />
<rect x="106" y="241" width="229" height="1" fill="#ffffff" />
<rect x="106" y="263" width="229" height="1" fill="#6382bf" />
<rect x="106" y="264" width="229" height="1" fill="#ffffff" />
<rect x="106" y="304" width="229" height="1" fill="#6382bf" />
<rect x="106" y="305" width="229" height="1" fill="#ffffff" />
<text x="132 142 151 163 167 181 185 194 203 212" y="76" class="ui" >New Window</text>
<text x="132 141 145 154 163 172 176 182 191 195 205 214 226 230 244 248 257 266 275" y="95" class="ui" >Clone to New Window</text>
<text x="132 141 150 158 167 173 177 191 195 204 213 222 234 239 244" y="114" class="ui" >Reset Window...</text>
<text x="132 141 150 159 163 172 176 185 191 195 203 209 218" y="135" class="ui" >Add Plot From</text>
<text x="132 141 150 159 163 172 176 185 191 196 201" y="154" class="ui" >Add Plot...</text>
<text x="132 143 152 161 170 174 184 193 197 201 211 215 223 229 238 244 252 257 262" y="174" class="ui" >Open URI History...</text>
<text x="132 143 152 161 170 174 179 186 195 204 208 216 220 224 233 238 243" y="196" class="ui" >Open .vap File...</text>
<text x="132 141 150 157 166 170 179 187 192 197" y="215" class="ui" >Save As...</text>
<text x="132 141 150 157" y="234" class="ui" >Save</text>
<text x="132 141 147 151 160 166 170 176" y="257" class="ui" >Print to</text>
<text x="132 140 147 156 165 171 177 181 191 200 206 215 220 225" y="280" class="ui" >Export Data...</text>
<text x="132 140 147 156 165 171 177 181 190 194 198 202 212 221 227 236 241 246" y="298.5" class="ui" >Export All Data...</text>
<text x="132 141 145 154 162" y="319.5" class="ui" >Close</text>
<text x="132 142 151 155" y="338.5" class="ui" >Quit</text>
<text x="292.6 300.6 304.6 308.6 310.6 314.6" y="232.5" class="acc" >Ctrl-S</text>
<path d="M324.6 126.0v9l4.6-4.5z" fill="#222" shape-rendering="geometricPrecision"/>
<path d="M324.6 248.0v9l4.6-4.5z" fill="#222" shape-rendering="geometricPrecision"/>
<rect x="112" y="161" width="16" height="16" fill="#ffffff" />
<circle cx="113.4" cy="162.6" r="1.7" fill="#bfd3ef" shape-rendering="geometricPrecision"/>
<path d="M116.2 162.6H123.6" stroke="#222" stroke-width="1" shape-rendering="geometricPrecision"/>
<circle cx="117.4" cy="166.6" r="1.7" fill="#8db0ea" shape-rendering="geometricPrecision"/>
<path d="M120.2 166.6H127.6" stroke="#222" stroke-width="1" shape-rendering="geometricPrecision"/>
<circle cx="117.4" cy="170.4" r="1.7" fill="#7aa3e8" shape-rendering="geometricPrecision"/>
<path d="M120.2 170.4H127.6" stroke="#222" stroke-width="1" shape-rendering="geometricPrecision"/>
<circle cx="113.4" cy="174.4" r="1.7" fill="#5c8ee6" shape-rendering="geometricPrecision"/>
<path d="M116.2 174.4H123.6" stroke="#222" stroke-width="1" shape-rendering="geometricPrecision"/>
<defs><filter id="fSh" x="-30%" y="-30%" width="160%" height="160%"><feGaussianBlur stdDeviation="1.1"/></filter>
<filter id="fSoft" x="-20%" y="-20%" width="140%" height="140%"><feGaussianBlur stdDeviation="0.45"/></filter></defs>
<g shape-rendering="geometricPrecision">
<path d="M173.3 151.1 L197.3 166.1 L190.2 170.3 L200.5 189.1 L194.2 193.3 L183.1 174.7 L173.4 179.9 Z" transform="translate(0.8 1.2)" fill="#000" stroke="#000" stroke-width="3.5" stroke-linejoin="round" opacity="0.35" filter="url(#fSh)"/>
<g filter="url(#fSoft)">
<path d="M173.3 151.1 L197.3 166.1 L190.2 170.3 L200.5 189.1 L194.2 193.3 L183.1 174.7 L173.4 179.9 Z" fill="url(#gCur)" stroke="#0c0c0c" stroke-width="3.7" stroke-linejoin="round"/>
<ellipse cx="177.9" cy="165.6" rx="0.9" ry="1.8" fill="#111" transform="rotate(-20 177.9 165.6)"/>
</g></g>
</svg>
</body></html>
